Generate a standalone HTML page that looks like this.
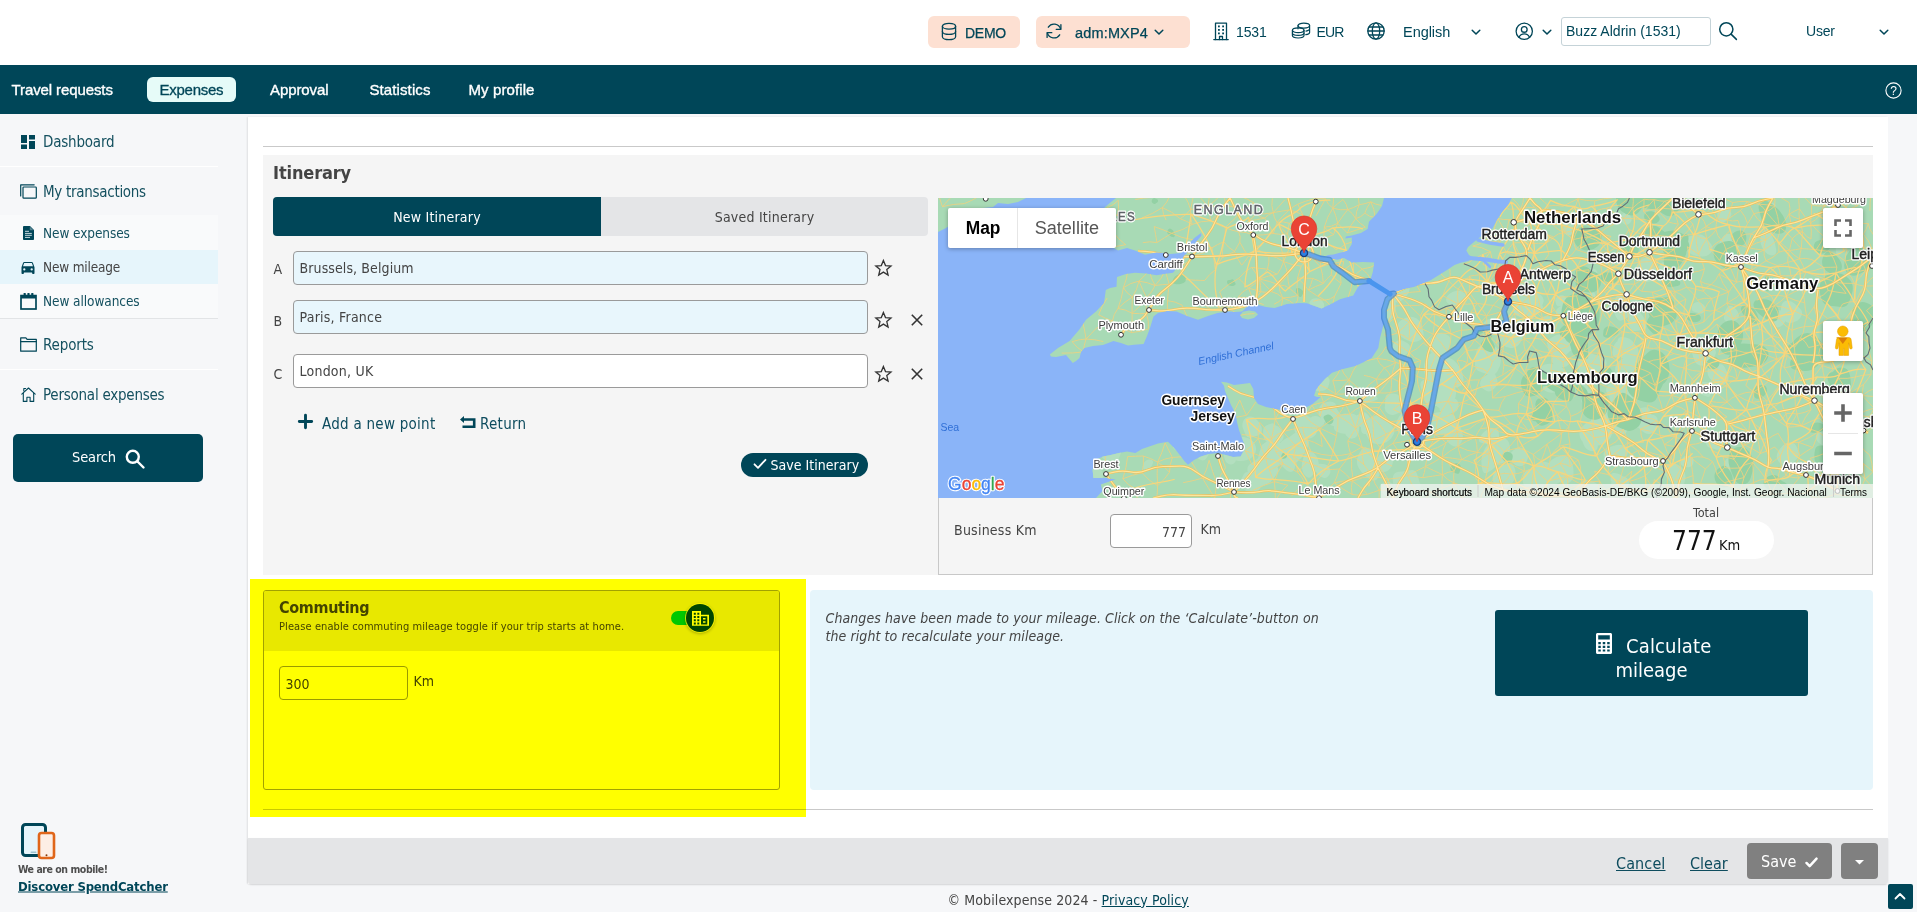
<!DOCTYPE html>
<html lang="en">
<head>
<meta charset="utf-8">
<title>New mileage</title>
<style>
*{box-sizing:border-box;margin:0;padding:0}
html,body{width:1917px;height:912px;overflow:hidden;background:#f6f7f9}
body{position:relative;font-family:"Liberation Sans",Arial,sans-serif;color:#004658;font-size:14px}
.abs{position:absolute}
.os{font-family:"DejaVu Sans Condensed","DejaVu Sans","Liberation Sans",sans-serif;font-stretch:condensed}
.t{position:absolute;white-space:nowrap;line-height:1;transform:translateY(-50%)}
#top{position:absolute;left:0;top:0;width:1917px;height:65px;background:#fff}
#nav{position:absolute;left:0;top:65px;width:1917px;height:49px;background:#004658}
#nav .t{color:#fff;font-size:15px;top:23.6px;-webkit-text-stroke:.35px #fff}
#side{position:absolute;left:0;top:114px;width:248px;height:798px;background:#f6f7f9}
#main{position:absolute;left:248px;top:117px;width:1640px;height:767px;background:#fff;box-shadow:-1px 0 1.5px rgba(0,0,0,.09)}
.badge{position:absolute;top:16px;height:32px;background:#fde0d2;border-radius:6px}
svg{position:absolute;overflow:visible}
.ic{fill:none;stroke:#004658;stroke-width:1.3;stroke-linecap:round;stroke-linejoin:round}
.sep{position:absolute;left:0;width:218px;height:1px;background:#fff}
.sl{font-size:15px;color:#14505f}
.ss{font-size:13.5px;color:#14505f}
.inp{position:absolute;border:1px solid #9a9a9a;border-radius:4px;background:#e8f6fc}
.g{color:#444}
</style>
</head>
<body>
<div id="top">
  <div class="badge" style="left:928px;width:92px"></div>
  <svg style="left:941px;top:22px" width="16" height="20" viewBox="0 0 16 20"><g class="ic"><ellipse cx="8" cy="4.2" rx="6.6" ry="2.9"/><path d="M1.4 4.2v10.6c0 1.6 3 2.9 6.6 2.9s6.600-1.300 6.600-2.900V4.200"/><path d="M1.400 9.500c0 1.600 3 2.900 6.600 2.900s6.600-1.300 6.600-2.900"/></g></svg>
  <span class="t" style="left:965px;top:32.500px;font-size:14px;-webkit-text-stroke:.25px #004658;letter-spacing:-0.25px">DEMO</span>
  <div class="badge" style="left:1036px;width:154px"></div>
  <svg style="left:1045px;top:22px" width="18" height="18" viewBox="0 0 18 18"><g class="ic"><path d="M15.600 7.200A6.800 6.800 0 0 0 3.300 5.200"/><path d="M15.900 2.600v4.700h-4.700"/><path d="M2.400 10.800a6.800 6.800 0 0 0 12.300 2"/><path d="M2.100 15.400v-4.700h4.700"/></g></svg>
  <span class="t" style="left:1075px;top:32.500px;font-size:14.500px;-webkit-text-stroke:.25px #004658;letter-spacing:0.16px">adm:MXP4</span>
  <svg style="left:1154px;top:29px" width="10" height="7" viewBox="0 0 10 7"><path class="ic" style="stroke-width:1.500" d="M1.200 1.200 5 5l3.800-3.800"/></svg>

  <svg style="left:1213px;top:22px" width="16" height="19" viewBox="0 0 16 19"><g class="ic"><path d="M2.500 17.500V1.200h11v16.300"/><path d="M.8 17.600h14.400"/><path d="M6.500 17.500v-3h3v3"/></g><g fill="#004658"><rect x="5" y="3.500" width="1.800" height="1.800"/><rect x="9.200" y="3.500" width="1.800" height="1.800"/><rect x="5" y="7" width="1.800" height="1.800"/><rect x="9.200" y="7" width="1.800" height="1.800"/><rect x="5" y="10.500" width="1.800" height="1.800"/><rect x="9.200" y="10.500" width="1.800" height="1.800"/></g></svg>
  <span class="t" style="left:1236px;top:31.500px;font-size:14px;letter-spacing:-0.11px">1531</span>
  <svg style="left:1291px;top:22px" width="20" height="17" viewBox="0 0 20 17"><g class="ic" style="stroke-width:1.200"><ellipse cx="12.800" cy="3.600" rx="5.800" ry="2.500"/><path d="M7 3.600v3.200M18.600 3.600v6.800c0 1-1.600 1.900-3.800 2.300"/><path d="M18.600 7c0 .9-1.500 1.700-3.600 2.200"/><ellipse cx="7.200" cy="8.300" rx="5.800" ry="2.400"/><path d="M1.400 8.300v5.300c0 1.300 2.600 2.400 5.800 2.400s5.800-1.100 5.800-2.400V8.300"/><path d="M1.400 11c0 1.300 2.600 2.400 5.800 2.400S13 12.300 13 11"/></g></svg>
  <span class="t" style="left:1316.500px;top:31.500px;font-size:14px;letter-spacing:-0.89px">EUR</span>
  <svg style="left:1367px;top:22px" width="18" height="18" viewBox="0 0 18 18"><g class="ic"><circle cx="9" cy="9" r="8.200"/><ellipse cx="9" cy="9" rx="3.700" ry="8.200"/><path d="M1 9h16M2 5h14M2 13h14"/></g></svg>
  <span class="t" style="left:1403px;top:32px;font-size:14.500px;letter-spacing:-0.04px">English</span>
  <svg style="left:1471px;top:28.500px" width="10" height="7" viewBox="0 0 10 7"><path class="ic" style="stroke-width:1.500" d="M1.200 1.200 5 5l3.800-3.800"/></svg>

  <svg style="left:1514.5px;top:22px" width="18.5" height="18.5" viewBox="0 0 20 20"><g class="ic" style="stroke-width:1.400"><circle cx="10" cy="10" r="8.800"/><circle cx="10" cy="8" r="3.100"/><path d="M4.300 16.600c1-2.500 3.100-3.800 5.700-3.800s4.700 1.300 5.700 3.800"/></g></svg>
  <svg style="left:1542px;top:28.500px" width="10" height="7" viewBox="0 0 10 7"><path class="ic" style="stroke-width:1.500" d="M1.200 1.200 5 5l3.800-3.800"/></svg>
  <div class="abs" style="left:1561px;top:17px;width:150px;height:29px;border:1px solid #c5d3d8;border-radius:3px;background:#fff"></div>
  <span class="t" style="left:1566px;top:31px;font-size:14px;letter-spacing:0.02px">Buzz Aldrin (1531)</span>
  <svg style="left:1718px;top:21px" width="20" height="20" viewBox="0 0 20 20"><g class="ic" style="stroke-width:1.500"><circle cx="8.300" cy="8.300" r="6.600"/><path d="M13.100 13.100 18.400 18.400"/></g></svg>
  <span class="t" style="left:1806px;top:31px;font-size:14px;letter-spacing:-0.19px">User</span>
  <svg style="left:1878.500px;top:28.500px" width="10" height="7" viewBox="0 0 10 7"><path class="ic" style="stroke-width:1.500" d="M1.200 1.200 5 5l3.800-3.800"/></svg>
</div>
<div id="nav">
  <span class="t" style="left:11.500px;letter-spacing:-0.10px">Travel requests</span>
  <div class="abs" style="left:147px;top:12px;width:89px;height:25px;border-radius:6px;background:#e6fbf8"></div>
  <span class="t" style="left:159.500px;color:#004658;-webkit-text-stroke:.3px #004658;letter-spacing:-0.25px">Expenses</span>
  <span class="t" style="left:270px;letter-spacing:-0.10px">Approval</span>
  <span class="t" style="left:369.500px;letter-spacing:0.10px">Statistics</span>
  <span class="t" style="left:468.500px;letter-spacing:0.10px">My profile</span>
  <svg style="left:1883.500px;top:15.500px" width="19" height="19" viewBox="0 0 19 19"><circle cx="9.500" cy="9.500" r="7.600" fill="none" stroke="#fff" stroke-width="1.100"/><text x="9.500" y="13.800" text-anchor="middle" font-family="Liberation Sans,sans-serif" font-size="12" fill="#fff">?</text></svg>
</div>
<div id="side">
  <!-- coordinates relative to side top=114 -->
  <svg style="left:21px;top:21px" width="14" height="14" viewBox="0 0 14 14"><g fill="#004658"><rect x="0" y="0" width="6" height="8"/><rect x="8" y="0" width="6" height="4.500"/><rect x="0" y="9.500" width="6" height="4.500"/><rect x="8" y="6" width="6" height="8"/></g></svg>
  <span class="t os sl" style="left:43px;top:27.500px;letter-spacing:-0.20px">Dashboard</span>
  <div class="sep" style="top:52px"></div>
  <svg style="left:19.500px;top:70px" width="17" height="15" viewBox="0 0 17 15"><g class="ic" style="stroke-width:1.200"><path d="M.7 12V.8h13.500"/><rect x="3" y="3" width="13.300" height="11.200" rx=".8"/></g></svg>
  <span class="t os sl" style="left:43px;top:78px;letter-spacing:-0.29px">My transactions</span>
  <div class="abs" style="left:0;top:101px;width:218px;height:103px;background:#f9fafb"></div>
  <svg style="left:23px;top:112px" width="11" height="14" viewBox="0 0 11 14"><path fill="#004658" d="M0 .8C0 .4.400 0 .800 0H7l4 4v9.200c0 .4-.4.800-.800.800H.800C.400 14 0 13.600 0 13.200z"/><path fill="#f9fafb" d="M6.800 .6v3.600h3.600z" opacity=".35"/><g stroke="#dfeaee" stroke-width=".9"><path d="M2 5.300h4M2 7.400h6.800M2 9.300h6.800M2 11.400h5"/></g></svg>
  <span class="t os ss" style="left:43px;top:119.500px;letter-spacing:-0.08px">New expenses</span>
  <div class="abs" style="left:0;top:136px;width:218px;height:34px;background:#e6f5fb"></div>
  <svg style="left:21px;top:147.500px" width="14" height="12" viewBox="0 0 14 12"><path fill="#004658" d="M11.900.800C11.700.300 11.200 0 10.700 0H3.300C2.800 0 2.300.300 2.100.800L.500 5.200v6c0 .4.300.800.800.800h.800c.400 0 .800-.400.800-.800v-.800h8.200v.8c0 .4.400.8.800.8h.8c.500 0 .8-.4.800-.8v-6zM3.300 8.600a1.150 1.150 0 1 1 0-2.300 1.150 1.150 0 0 1 0 2.300zm7.400 0a1.150 1.150 0 1 1 0-2.300 1.150 1.150 0 0 1 0 2.300zM2 4.300l1.200-3.200h7.600L12 4.300z"/></svg>
  <span class="t os ss g" style="left:43px;top:153.500px;letter-spacing:-0.17px">New mileage</span>
  <svg style="left:19.500px;top:179px" width="17" height="17" viewBox="0 0 17 17"><g fill="none" stroke="#004658"><rect x="1" y="2.600" width="15" height="13.400" stroke-width="1.700"/><path d="M1 4.200h15" stroke-width="2.600"/></g><g fill="#004658"><rect x="3.600" y="0" width="2.200" height="3.200" rx=".6"/><rect x="7.400" y="0" width="2.200" height="3.200" rx=".6"/><rect x="11.200" y="0" width="2.200" height="3.200" rx=".6"/></g></svg>
  <span class="t os ss" style="left:43px;top:187.500px;letter-spacing:-0.07px">New allowances</span>
  <div class="sep" style="top:204px;background:#e2e4e6"></div>
  <svg style="left:19.500px;top:223px" width="17" height="15" viewBox="0 0 17 15"><g class="ic" style="stroke-width:1.200"><path d="M.7 14.200V.8h5.200l1.200 1.500h9.200v11.900z"/><path d="M.7 4.600h15.600"/></g></svg>
  <span class="t os sl" style="left:43px;top:231px;letter-spacing:-0.14px">Reports</span>
  <div class="sep" style="top:255px"></div>
  <svg style="left:21px;top:273px" width="15" height="15" viewBox="0 0 15 15"><g class="ic" style="stroke-width:1.100"><path d="M.8 7.200 7.500 1l6.700 6.200"/><path d="M2.300 6.200v8.200h3.600v-4.200h3.200v4.200h3.600V6.200"/><path d="M2.800 4V1.500h1.800"/></g></svg>
  <span class="t os sl" style="left:43px;top:281px;letter-spacing:-0.24px">Personal expenses</span>
  <div class="abs" style="left:13px;top:320px;width:190px;height:48px;border-radius:5px;background:#004658"></div>
  <span class="t os" style="left:72px;top:343px;color:#fff;font-size:14.500px;letter-spacing:-0.13px">Search</span>
  <svg style="left:124px;top:333.5px" width="22" height="22" viewBox="0 0 22 22"><g fill="none" stroke="#fff" stroke-width="2.400" stroke-linecap="round"><circle cx="8.800" cy="8.800" r="6"/><path d="M13.500 13.500 19.500 19.500"/></g></svg>

  <svg style="left:21px;top:709px" width="35" height="36" viewBox="0 0 35 36"><rect x="1.500" y="1.500" width="23" height="31" rx="3" fill="#e6f5fb" stroke="#004658" stroke-width="3"/><rect x="9.500" y="28.600" width="6" height="1.400" rx=".7" fill="#9fc3cf"/><rect x="18" y="10" width="15" height="25" rx="2.500" fill="#fdeee5" stroke="#e0661a" stroke-width="2.600"/><circle cx="25.500" cy="32.200" r="1" fill="#8a3a0a"/></svg>
  <span class="t os" style="left:18px;top:754.500px;font-size:10.500px;font-weight:bold;color:#4d4d4d;letter-spacing:-0.45px">We are on mobile!</span>
  <span class="t os" style="left:18px;top:771.700px;font-size:13px;font-weight:bold;text-decoration:underline;color:#004658;letter-spacing:-0.18px">Discover SpendCatcher</span>
</div>
<div id="main"></div>
<div class="abs" style="left:248px;top:838px;width:1640px;height:46px;background:#e4e5e7;border-radius:0 0 4px 4px;box-shadow:0 1px 2px rgba(0,0,0,.12)"></div>
<div class="abs" style="left:263px;top:146px;width:1610px;height:1px;background:#c9c9c9"></div>
<div class="abs" style="left:263px;top:155px;width:1610px;height:420px;background:#f5f5f5"></div>
<span class="t os g" style="left:273px;top:172.500px;font-size:18px;font-weight:bold;color:#444;letter-spacing:-0.14px">Itinerary</span>
<div class="abs" style="left:273px;top:197px;width:655px;height:39px;border-radius:4px;background:#e4e5e7"></div>
<div class="abs" style="left:273px;top:197px;width:328px;height:39px;border-radius:4px 0 0 4px;background:#004658"></div>
<span class="t os" style="left:437px;top:217px;font-size:14px;color:#fff;transform:translate(-50%,-50%);letter-spacing:0.22px">New Itinerary</span>
<span class="t os g" style="left:764.500px;top:217px;font-size:14px;transform:translate(-50%,-50%);letter-spacing:0.22px">Saved Itinerary</span>

<span class="t os g" style="left:273.500px;top:268.500px;font-size:14px">A</span>
<div class="inp" style="left:293px;top:251px;width:575px;height:34px"></div>
<span class="t os g" style="left:299.500px;top:268px;font-size:14px;letter-spacing:0.11px">Brussels, Belgium</span>
<span class="t os g" style="left:273.500px;top:320.500px;font-size:14px">B</span>
<div class="inp" style="left:293px;top:300px;width:575px;height:34px"></div>
<span class="t os g" style="left:299.500px;top:317px;font-size:14px;letter-spacing:0.23px">Paris, France</span>
<span class="t os g" style="left:273.500px;top:374px;font-size:14px">C</span>
<div class="inp" style="left:293px;top:354px;width:575px;height:34px;background:#fff"></div>
<span class="t os g" style="left:299.500px;top:371px;font-size:14px;letter-spacing:0.23px">London, UK</span>

<svg style="left:874px;top:259px" width="19" height="18" viewBox="0 0 19 18"><path id="star" fill="none" stroke="#333" stroke-width="1.300" stroke-linejoin="miter" d="M9.400 1.500l2.100 5.100 5.500.4-4.200 3.600 1.300 5.400-4.700-2.900-4.700 2.900 1.300-5.400L1.800 7l5.500-.4z"/></svg>
<svg style="left:874px;top:310.500px" width="19" height="18" viewBox="0 0 19 18"><use href="#star"/></svg>
<svg style="left:874px;top:364.500px" width="19" height="18" viewBox="0 0 19 18"><use href="#star"/></svg>
<svg style="left:910.500px;top:314px" width="12" height="12" viewBox="0 0 12 12"><path id="xx" d="M.8.800l10.400 10.400M11.200.800.800 11.200" stroke="#333" stroke-width="1.600" fill="none"/></svg>
<svg style="left:910.500px;top:368px" width="12" height="12" viewBox="0 0 12 12"><use href="#xx"/></svg>

<svg style="left:298px;top:414px" width="15" height="15" viewBox="0 0 15 15"><path d="M7.500 1.300v12.400M1.300 7.500h12.400" stroke="#004658" stroke-width="2.900" stroke-linecap="round" fill="none"/></svg>
<span class="t os" style="left:322px;top:423.500px;font-size:15px;color:#0e4c5e;letter-spacing:0.26px">Add a new point</span>
<svg style="left:459.500px;top:415.500px" width="16" height="13" viewBox="0 0 16 13"><path fill="#004658" d="M4 0v2.200h11.500v9.800H2.500v-2.400h10.400V4.700H4v2.200L0 3.400z"/></svg>
<span class="t os" style="left:480px;top:423.500px;font-size:15px;color:#0e4c5e;letter-spacing:0.29px">Return</span>
<div class="abs" style="left:741px;top:453px;width:127px;height:24px;border-radius:12px;background:#004658"></div>
<svg style="left:753px;top:458px" width="14" height="12" viewBox="0 0 14 12"><path d="M1.500 6.300 5 9.800 12.500 1.800" stroke="#fff" stroke-width="1.800" fill="none" stroke-linecap="round" stroke-linejoin="round"/></svg>
<span class="t os" style="left:770.500px;top:465px;font-size:14px;color:#fff;letter-spacing:0.03px">Save Itinerary</span>

<div class="abs" style="left:938px;top:198px;width:935px;height:300px;overflow:hidden;background:#8ab4f8">
<svg style="left:0;top:0" width="935" height="300" viewBox="0 0 935 300" font-family="Liberation Sans,Arial,sans-serif">
<defs><clipPath id="land"><path d="M178.0 0.0 167.0 9.0 160.0 20.0 158.0 30.0 165.0 40.0 176.0 50.0 180.0 52.5 189.0 50.0 197.0 52.6 207.0 56.7 218.7 54.3 226.0 55.0 232.0 56.0 238.0 55.5 243.0 55.0 250.0 46.0 257.0 39.5 263.0 35.0 263.5 37.5 258.5 43.5 252.5 50.5 247.0 57.0 243.5 62.0 240.0 68.0 236.5 73.0 235.0 74.8 226.0 76.0 218.7 77.3 208.0 75.5 197.0 74.8 188.0 76.0 179.0 79.0 178.5 88.8 172.0 90.0 167.8 92.0 166.0 105.0 158.0 113.5 148.0 121.7 141.4 131.6 131.6 143.0 120.0 150.0 111.8 156.6 113.0 158.5 118.0 159.0 128.0 157.0 134.8 165.0 138.0 163.0 141.5 160.0 143.0 154.0 146.4 150.0 155.0 148.0 165.0 147.0 175.5 143.0 183.0 145.0 190.0 147.5 196.0 146.7 205.6 146.0 209.0 138.0 212.0 130.0 215.5 118.4 220.0 115.0 229.0 113.0 238.5 113.5 249.0 118.0 260.0 121.7 270.0 118.0 279.6 115.0 289.5 113.5 297.0 114.0 304.0 113.5 309.0 109.0 312.0 107.0 320.0 107.0 328.0 109.0 336.7 110.0 349.0 106.0 361.3 105.0 369.0 105.3 383.6 110.5 393.0 106.0 402.0 101.3 415.2 97.4 420.4 88.2 432.3 82.2 434.9 73.7 436.2 64.5 425.0 64.0 413.8 64.5 406.0 59.9 399.4 61.8 392.0 60.5 386.0 59.0 390.0 57.0 395.4 56.6 403.0 54.5 409.9 52.6 413.8 46.0 413.8 39.5 407.3 40.5 408.0 38.5 413.8 37.5 423.0 34.9 429.6 31.0 431.0 23.7 438.8 15.8 444.0 7.9 446.0 0.0Z"/><path d="M0.0 0.0 88.0 0.0 80.0 4.0 70.0 6.0 60.0 5.0 55.0 9.0 45.0 10.0 30.0 14.0 20.0 22.0 8.0 30.0 0.0 34.0Z"/><path d="M158.0 300.0 164.5 293.0 162.8 286.5 170.0 284.0 177.6 281.6 168.0 280.0 155.4 280.0 154.6 271.7 158.0 261.8 165.0 258.5 172.7 257.0 181.0 255.0 189.0 253.6 197.4 255.0 204.0 251.0 210.5 248.7 220.0 245.5 230.0 243.8 235.0 248.7 241.0 256.0 246.7 263.5 250.0 266.8 256.0 262.0 263.0 258.5 271.0 256.0 279.6 255.0 287.8 257.0 295.0 259.0 302.6 258.5 305.0 254.0 307.5 248.7 304.0 240.0 301.0 232.0 299.0 224.0 297.7 215.8 293.0 207.0 289.5 199.0 287.0 193.0 286.0 187.8 283.0 183.7 289.0 184.5 296.0 187.0 304.0 186.0 312.0 185.0 315.3 191.0 316.0 200.0 320.0 206.0 328.0 209.0 336.7 210.9 349.0 212.5 361.3 212.5 368.0 209.5 374.5 206.0 382.7 199.0 379.0 199.0 376.0 197.7 378.0 192.0 381.0 187.8 387.0 181.0 394.0 174.7 405.0 171.0 417.3 168.0 426.0 164.0 433.7 160.0 440.3 150.0 442.0 140.0 446.0 125.0 445.0 118.0 444.4 111.8 446.7 102.6 448.5 98.7 452.0 95.0 458.4 93.8 467.0 91.0 476.5 88.8 485.0 85.5 493.0 82.0 501.0 77.0 509.0 72.0 516.5 67.0 522.0 65.0 530.0 63.0 536.0 60.0 531.0 57.0 528.3 52.6 530.0 49.0 536.0 44.0 541.5 39.5 545.4 36.8 554.6 30.3 558.6 22.4 563.8 14.5 570.4 6.6 573.7 0.0 935.0 0.0 935.0 300.0Z"/><path d="M302.0 117.0 305.0 113.8 311.0 112.5 317.0 113.5 320.0 116.5 316.0 120.0 310.0 121.5 304.0 120.0Z"/></clipPath></defs>
<rect width="935" height="300" fill="#8ab4f8"/>
<g fill="#a8dab5"><path d="M178.0 0.0 167.0 9.0 160.0 20.0 158.0 30.0 165.0 40.0 176.0 50.0 180.0 52.5 189.0 50.0 197.0 52.6 207.0 56.7 218.7 54.3 226.0 55.0 232.0 56.0 238.0 55.5 243.0 55.0 250.0 46.0 257.0 39.5 263.0 35.0 263.5 37.5 258.5 43.5 252.5 50.5 247.0 57.0 243.5 62.0 240.0 68.0 236.5 73.0 235.0 74.8 226.0 76.0 218.7 77.3 208.0 75.5 197.0 74.8 188.0 76.0 179.0 79.0 178.5 88.8 172.0 90.0 167.8 92.0 166.0 105.0 158.0 113.5 148.0 121.7 141.4 131.6 131.6 143.0 120.0 150.0 111.8 156.6 113.0 158.5 118.0 159.0 128.0 157.0 134.8 165.0 138.0 163.0 141.5 160.0 143.0 154.0 146.4 150.0 155.0 148.0 165.0 147.0 175.5 143.0 183.0 145.0 190.0 147.5 196.0 146.7 205.6 146.0 209.0 138.0 212.0 130.0 215.5 118.4 220.0 115.0 229.0 113.0 238.5 113.5 249.0 118.0 260.0 121.7 270.0 118.0 279.6 115.0 289.5 113.5 297.0 114.0 304.0 113.5 309.0 109.0 312.0 107.0 320.0 107.0 328.0 109.0 336.7 110.0 349.0 106.0 361.3 105.0 369.0 105.3 383.6 110.5 393.0 106.0 402.0 101.3 415.2 97.4 420.4 88.2 432.3 82.2 434.9 73.7 436.2 64.5 425.0 64.0 413.8 64.5 406.0 59.9 399.4 61.8 392.0 60.5 386.0 59.0 390.0 57.0 395.4 56.6 403.0 54.5 409.9 52.6 413.8 46.0 413.8 39.5 407.3 40.5 408.0 38.5 413.8 37.5 423.0 34.9 429.6 31.0 431.0 23.7 438.8 15.8 444.0 7.9 446.0 0.0Z"/><path d="M0.0 0.0 88.0 0.0 80.0 4.0 70.0 6.0 60.0 5.0 55.0 9.0 45.0 10.0 30.0 14.0 20.0 22.0 8.0 30.0 0.0 34.0Z"/><path d="M158.0 300.0 164.5 293.0 162.8 286.5 170.0 284.0 177.6 281.6 168.0 280.0 155.4 280.0 154.6 271.7 158.0 261.8 165.0 258.5 172.7 257.0 181.0 255.0 189.0 253.6 197.4 255.0 204.0 251.0 210.5 248.7 220.0 245.5 230.0 243.8 235.0 248.7 241.0 256.0 246.7 263.5 250.0 266.8 256.0 262.0 263.0 258.5 271.0 256.0 279.6 255.0 287.8 257.0 295.0 259.0 302.6 258.5 305.0 254.0 307.5 248.7 304.0 240.0 301.0 232.0 299.0 224.0 297.7 215.8 293.0 207.0 289.5 199.0 287.0 193.0 286.0 187.8 283.0 183.7 289.0 184.5 296.0 187.0 304.0 186.0 312.0 185.0 315.3 191.0 316.0 200.0 320.0 206.0 328.0 209.0 336.7 210.9 349.0 212.5 361.3 212.5 368.0 209.5 374.5 206.0 382.7 199.0 379.0 199.0 376.0 197.7 378.0 192.0 381.0 187.8 387.0 181.0 394.0 174.7 405.0 171.0 417.3 168.0 426.0 164.0 433.7 160.0 440.3 150.0 442.0 140.0 446.0 125.0 445.0 118.0 444.4 111.8 446.7 102.6 448.5 98.7 452.0 95.0 458.4 93.8 467.0 91.0 476.5 88.8 485.0 85.5 493.0 82.0 501.0 77.0 509.0 72.0 516.5 67.0 522.0 65.0 530.0 63.0 536.0 60.0 531.0 57.0 528.3 52.6 530.0 49.0 536.0 44.0 541.5 39.5 545.4 36.8 554.6 30.3 558.6 22.4 563.8 14.5 570.4 6.6 573.7 0.0 935.0 0.0 935.0 300.0Z"/><path d="M302.0 117.0 305.0 113.8 311.0 112.5 317.0 113.5 320.0 116.5 316.0 120.0 310.0 121.5 304.0 120.0Z"/></g>
<g clip-path="url(#land)">
<path fill="#b3dfbf" d="M492.4 207.8Q487.2 206.1 485.8 200.6Q484.4 195.0 482.8 189.2Q481.2 183.3 486.1 181.7Q491.0 180.1 495.2 180.5Q499.4 180.9 504.1 183.2Q508.7 185.5 509.4 191.0Q510.2 196.5 507.3 199.9Q504.5 203.2 501.1 206.3Q497.7 209.4 492.4 207.8ZM343.5 247.5Q345.1 252.8 344.7 257.4Q344.2 262.1 341.7 266.7Q339.1 271.3 334.2 269.0Q329.4 266.6 324.2 265.4Q319.0 264.3 320.3 259.0Q321.5 253.7 322.7 249.9Q323.9 246.0 327.6 244.3Q331.4 242.5 336.6 242.3Q341.8 242.2 343.5 247.5ZM486.8 176.0Q485.0 170.1 486.9 164.1Q488.8 158.0 493.5 155.1Q498.1 152.2 502.6 154.1Q507.1 156.0 509.8 160.0Q512.5 164.1 512.0 169.1Q511.4 174.2 509.8 180.2Q508.3 186.1 503.0 186.7Q497.7 187.4 493.1 184.6Q488.6 181.9 486.8 176.0ZM367.9 167.3Q371.3 165.6 373.2 170.9Q375.1 176.2 375.7 180.8Q376.2 185.4 375.0 189.5Q373.9 193.5 371.1 196.2Q368.3 199.0 364.6 197.0Q360.9 195.0 360.3 189.2Q359.7 183.5 360.1 179.2Q360.5 174.8 362.5 171.9Q364.5 169.0 367.9 167.3ZM431.6 194.0Q434.7 193.6 435.9 195.5Q437.1 197.3 439.0 199.2Q440.8 201.0 437.8 202.2Q434.7 203.4 432.3 204.3Q429.9 205.2 426.5 205.1Q423.1 205.0 421.9 202.8Q420.7 200.7 421.7 198.5Q422.7 196.3 425.6 195.3Q428.4 194.3 431.6 194.0ZM382.2 229.1Q380.0 230.0 377.0 230.1Q374.0 230.1 372.1 228.1Q370.2 226.1 370.5 223.8Q370.8 221.6 372.4 219.8Q374.0 218.0 376.9 217.9Q379.7 217.8 381.7 219.2Q383.6 220.7 385.3 222.4Q387.0 224.2 385.8 226.2Q384.5 228.1 382.2 229.1ZM594.8 270.6Q598.6 270.6 602.6 271.7Q606.6 272.8 608.3 277.0Q610.1 281.2 608.1 285.4Q606.1 289.5 602.1 291.5Q598.1 293.4 593.6 292.8Q589.1 292.2 586.7 288.4Q584.3 284.5 584.6 280.2Q584.8 275.9 587.9 273.2Q591.0 270.5 594.8 270.6ZM424.0 214.7Q426.5 213.5 428.6 215.4Q430.7 217.3 431.9 219.6Q433.1 221.9 432.3 224.5Q431.5 227.0 429.2 228.7Q426.9 230.4 424.2 229.5Q421.4 228.7 419.2 226.8Q417.0 225.0 416.5 221.8Q416.0 218.6 418.8 217.3Q421.6 215.9 424.0 214.7ZM551.0 257.4Q550.3 252.9 552.6 249.5Q554.9 246.1 557.7 242.6Q560.5 239.2 564.9 239.8Q569.4 240.5 571.1 245.0Q572.8 249.5 571.5 253.4Q570.3 257.4 568.6 261.3Q566.9 265.1 563.0 265.6Q559.0 266.1 555.4 264.1Q551.8 262.0 551.0 257.4ZM517.4 219.8Q518.8 223.4 518.5 227.9Q518.2 232.5 512.8 234.3Q507.5 236.2 501.7 236.7Q495.9 237.3 494.1 232.9Q492.4 228.6 489.4 224.3Q486.5 219.9 492.0 217.1Q497.4 214.2 502.3 214.1Q507.1 213.9 511.5 215.1Q515.9 216.2 517.4 219.8ZM450.8 90.2Q451.5 86.8 454.3 84.9Q457.1 83.0 461.0 82.1Q465.0 81.2 468.5 84.1Q472.1 87.0 471.5 91.5Q471.0 95.9 468.3 98.5Q465.7 101.1 462.3 103.5Q459.0 105.8 455.7 103.2Q452.4 100.5 451.2 97.1Q450.1 93.6 450.8 90.2ZM359.4 241.7Q362.0 245.6 364.8 250.6Q367.5 255.6 363.5 259.8Q359.5 264.0 355.4 266.9Q351.3 269.9 346.5 268.7Q341.6 267.4 339.1 262.2Q336.7 257.0 338.6 251.4Q340.5 245.9 344.2 242.9Q347.9 239.8 352.3 238.8Q356.7 237.7 359.4 241.7ZM357.1 264.9Q357.4 268.3 356.5 271.1Q355.6 273.9 353.1 273.9Q350.6 274.0 348.4 272.2Q346.3 270.3 343.8 267.7Q341.2 265.1 342.3 262.1Q343.4 259.0 345.2 257.5Q347.1 255.9 349.6 256.4Q352.2 256.8 354.5 259.1Q356.9 261.5 357.1 264.9ZM469.9 212.3Q473.8 211.9 479.1 213.0Q484.5 214.0 486.6 219.9Q488.6 225.9 486.1 231.2Q483.7 236.5 478.4 236.6Q473.2 236.8 467.9 237.5Q462.6 238.2 459.7 232.9Q456.7 227.7 458.8 223.1Q460.8 218.5 463.4 215.6Q466.0 212.8 469.9 212.3ZM686.8 235.8Q684.5 236.7 681.5 235.0Q678.5 233.3 676.7 231.1Q674.8 228.8 672.9 225.8Q670.9 222.8 672.5 221.0Q674.2 219.2 677.2 220.3Q680.3 221.4 683.4 222.3Q686.5 223.2 687.9 226.3Q689.2 229.4 689.2 232.1Q689.1 234.8 686.8 235.8ZM573.6 285.8Q570.0 289.7 565.5 291.6Q561.0 293.4 558.6 290.3Q556.2 287.2 554.9 283.0Q553.5 278.7 557.1 273.9Q560.6 269.0 564.7 267.2Q568.9 265.4 572.2 266.0Q575.5 266.5 576.6 269.8Q577.8 273.0 577.5 277.4Q577.2 281.8 573.6 285.8ZM321.7 179.8Q324.1 178.1 325.8 180.7Q327.4 183.2 329.6 185.0Q331.8 186.9 330.5 189.8Q329.3 192.7 327.3 194.6Q325.3 196.5 322.7 196.5Q320.0 196.6 317.9 194.6Q315.7 192.6 316.2 189.5Q316.7 186.3 318.0 183.9Q319.4 181.5 321.7 179.8ZM692.2 95.3Q693.7 98.6 693.5 103.7Q693.3 108.7 690.1 112.1Q686.9 115.4 683.6 118.8Q680.4 122.2 678.4 119.2Q676.5 116.1 676.0 112.1Q675.6 108.1 676.7 102.9Q677.7 97.8 681.0 96.8Q684.4 95.8 687.5 93.9Q690.6 92.0 692.2 95.3ZM538.3 153.8Q539.6 147.9 544.6 147.4Q549.5 146.8 553.9 147.5Q558.2 148.1 560.6 152.6Q563.1 157.1 562.9 162.8Q562.7 168.4 559.4 173.3Q556.2 178.3 551.3 176.9Q546.4 175.5 541.6 173.6Q536.8 171.8 536.9 165.7Q537.0 159.6 538.3 153.8ZM496.9 158.4Q493.5 155.4 491.9 152.0Q490.2 148.7 491.3 145.0Q492.3 141.3 495.2 138.2Q498.2 135.1 502.6 135.1Q507.0 135.1 510.5 137.8Q514.1 140.6 512.5 144.8Q510.9 149.0 510.1 153.3Q509.3 157.5 504.8 159.4Q500.3 161.3 496.9 158.4ZM509.3 104.8Q507.6 102.8 508.3 100.2Q509.0 97.7 511.9 95.5Q514.8 93.4 518.8 92.8Q522.8 92.2 525.2 94.0Q527.6 95.8 528.1 98.2Q528.6 100.6 526.6 103.0Q524.7 105.4 521.1 106.7Q517.6 108.1 514.3 107.4Q511.0 106.8 509.3 104.8ZM560.4 138.8Q560.1 134.0 562.1 130.4Q564.1 126.9 567.3 122.7Q570.5 118.5 576.1 119.4Q581.7 120.2 584.4 125.2Q587.1 130.1 585.9 135.0Q584.8 139.9 582.3 144.6Q579.8 149.3 574.3 149.9Q568.7 150.5 564.7 147.1Q560.6 143.6 560.4 138.8ZM395.2 148.1Q396.5 143.8 400.2 144.1Q403.9 144.5 407.1 144.2Q410.4 144.0 410.7 147.6Q411.0 151.2 410.4 154.3Q409.9 157.5 408.0 161.3Q406.1 165.1 402.5 164.9Q398.9 164.6 395.7 162.8Q392.6 161.0 393.2 156.7Q393.9 152.3 395.2 148.1ZM314.8 179.2Q312.2 182.8 307.5 182.5Q302.7 182.1 297.6 181.1Q292.5 180.1 292.4 175.5Q292.3 170.8 294.3 167.2Q296.2 163.6 300.3 162.2Q304.3 160.8 308.3 161.6Q312.2 162.4 316.9 164.6Q321.6 166.9 319.5 171.2Q317.4 175.6 314.8 179.2ZM676.5 115.4Q675.5 112.5 676.7 107.7Q677.9 102.9 682.4 100.4Q686.9 97.9 690.1 97.7Q693.3 97.5 697.0 98.0Q700.7 98.6 699.5 103.7Q698.4 108.8 694.7 114.0Q691.1 119.3 686.2 121.6Q681.3 123.9 679.3 121.1Q677.4 118.3 676.5 115.4ZM543.9 245.0Q539.9 244.1 541.1 241.2Q542.2 238.2 543.9 236.2Q545.5 234.1 548.6 232.0Q551.6 229.8 556.0 230.5Q560.4 231.1 560.8 234.2Q561.1 237.3 561.0 239.8Q560.9 242.4 558.3 245.0Q555.8 247.6 551.8 246.7Q547.8 245.9 543.9 245.0ZM637.3 190.5Q637.9 187.7 640.2 186.9Q642.4 186.0 644.7 185.1Q647.0 184.1 648.5 186.5Q650.0 188.8 650.8 191.3Q651.6 193.9 650.3 196.2Q649.1 198.5 646.7 199.0Q644.4 199.5 642.3 198.5Q640.2 197.5 638.5 195.4Q636.7 193.3 637.3 190.5ZM676.6 247.4Q681.1 246.3 685.5 247.5Q690.0 248.7 690.1 251.5Q690.2 254.4 689.2 257.1Q688.2 259.7 684.1 261.9Q680.1 264.0 675.0 263.4Q669.8 262.8 667.3 260.4Q664.8 258.0 665.8 255.3Q666.8 252.7 669.4 250.5Q672.0 248.4 676.6 247.4ZM668.5 164.4Q668.7 170.1 666.5 173.7Q664.2 177.4 660.9 180.1Q657.7 182.8 652.9 182.1Q648.1 181.4 644.4 177.5Q640.7 173.5 639.9 167.7Q639.1 161.9 642.7 157.4Q646.3 152.8 651.8 155.0Q657.2 157.2 662.8 158.0Q668.3 158.7 668.5 164.4ZM613.8 261.8Q617.8 258.5 623.0 257.4Q628.1 256.3 631.4 260.5Q634.7 264.8 635.2 269.0Q635.7 273.2 635.4 277.7Q635.0 282.2 630.9 285.0Q626.8 287.8 622.6 284.8Q618.5 281.9 614.4 279.0Q610.3 276.0 610.0 270.5Q609.7 265.1 613.8 261.8ZM380.4 212.1Q381.0 207.8 384.1 205.7Q387.1 203.5 391.6 205.4Q396.2 207.4 398.8 211.0Q401.5 214.7 404.5 219.0Q407.6 223.2 405.7 226.6Q403.8 230.0 399.4 229.0Q395.1 228.0 391.0 226.5Q386.9 225.0 383.4 220.7Q379.9 216.4 380.4 212.1ZM644.9 191.9Q648.8 191.5 652.1 190.9Q655.4 190.3 658.5 193.3Q661.6 196.2 663.5 199.5Q665.4 202.7 664.0 205.1Q662.5 207.4 659.6 208.3Q656.6 209.2 653.2 207.1Q649.9 205.0 647.9 202.4Q645.9 199.8 643.5 196.1Q641.0 192.3 644.9 191.9ZM457.3 113.3Q456.5 117.6 453.9 121.1Q451.4 124.7 448.7 123.6Q446.0 122.6 444.3 120.5Q442.6 118.5 440.6 114.7Q438.6 110.9 441.3 106.0Q443.9 101.1 447.5 100.0Q451.2 98.8 454.1 99.8Q457.1 100.8 457.6 104.9Q458.1 109.1 457.3 113.3ZM617.4 194.3Q611.9 195.6 607.4 193.0Q603.0 190.5 599.9 186.4Q596.9 182.3 597.8 177.0Q598.6 171.8 602.6 168.7Q606.6 165.6 611.4 165.7Q616.2 165.8 621.6 167.9Q627.0 170.1 629.4 176.5Q631.7 183.0 627.3 188.0Q622.9 193.0 617.4 194.3ZM673.0 276.7Q673.4 274.4 676.3 275.0Q679.2 275.6 681.6 276.3Q684.1 277.1 685.4 279.2Q686.8 281.3 686.7 283.7Q686.5 286.2 683.9 287.0Q681.3 287.8 678.7 287.0Q676.1 286.2 674.3 284.6Q672.4 283.0 672.5 281.1Q672.7 279.1 673.0 276.7ZM690.5 306.0Q689.5 308.8 686.5 307.9Q683.6 307.0 681.4 304.0Q679.2 301.0 679.9 298.2Q680.6 295.3 680.7 292.2Q680.8 289.2 683.5 289.0Q686.1 288.8 688.6 290.7Q691.1 292.7 693.1 295.9Q695.0 299.1 693.2 301.2Q691.4 303.3 690.5 306.0ZM369.1 240.4Q372.5 243.8 369.6 249.2Q366.7 254.6 363.8 258.7Q360.9 262.8 356.9 263.0Q352.9 263.1 350.5 259.8Q348.0 256.5 346.7 251.7Q345.4 246.9 348.5 242.5Q351.6 238.2 355.3 235.9Q359.0 233.6 362.4 235.3Q365.8 236.9 369.1 240.4ZM560.3 89.0Q565.2 86.8 570.0 84.4Q574.9 82.0 579.7 83.2Q584.6 84.4 586.4 87.5Q588.2 90.5 584.2 93.3Q580.1 96.2 576.5 98.5Q572.9 100.8 568.7 100.2Q564.6 99.6 559.5 99.0Q554.4 98.3 554.9 94.8Q555.5 91.2 560.3 89.0ZM558.0 188.6Q556.0 191.3 553.5 192.7Q550.9 194.1 548.6 193.0Q546.3 191.8 543.8 189.8Q541.3 187.8 542.3 184.1Q543.4 180.3 546.2 178.6Q549.1 177.0 552.3 175.1Q555.6 173.2 557.2 176.5Q558.7 179.7 559.4 182.8Q560.0 186.0 558.0 188.6ZM352.9 144.8Q353.7 139.6 355.6 134.3Q357.6 129.0 361.3 131.6Q364.9 134.3 369.0 135.6Q373.1 136.9 371.9 142.9Q370.7 149.0 370.6 155.2Q370.6 161.4 366.7 162.9Q362.7 164.4 359.7 161.1Q356.6 157.9 354.3 153.9Q352.0 149.9 352.9 144.8ZM418.1 135.2Q421.6 134.6 421.8 138.7Q421.9 142.7 421.8 145.9Q421.7 149.0 419.9 152.4Q418.1 155.9 415.0 154.0Q411.9 152.0 408.8 150.9Q405.6 149.8 406.0 146.1Q406.3 142.4 406.8 138.3Q407.4 134.2 411.0 135.0Q414.6 135.9 418.1 135.2ZM625.3 169.1Q622.1 168.9 619.4 168.1Q616.6 167.4 614.4 164.9Q612.2 162.4 614.3 159.8Q616.4 157.2 618.4 155.1Q620.4 153.0 623.2 154.1Q626.0 155.1 627.9 156.9Q629.8 158.6 631.1 161.4Q632.5 164.2 630.5 166.7Q628.4 169.3 625.3 169.1ZM375.8 100.6Q378.0 100.2 380.4 100.5Q382.9 100.9 384.6 103.3Q386.3 105.6 386.3 108.4Q386.3 111.3 384.2 112.7Q382.1 114.0 379.6 113.3Q377.2 112.6 375.6 111.0Q374.0 109.4 372.3 107.1Q370.6 104.8 372.1 102.9Q373.6 100.9 375.8 100.6ZM585.0 86.8Q590.1 85.2 593.8 89.0Q597.5 92.8 602.6 96.7Q607.6 100.7 604.7 106.2Q601.7 111.6 597.6 116.1Q593.5 120.6 588.1 117.7Q582.6 114.9 579.4 111.0Q576.2 107.1 573.5 101.5Q570.8 95.9 575.4 92.2Q580.0 88.5 585.0 86.8ZM371.4 179.8Q367.4 181.4 363.9 179.4Q360.5 177.3 356.9 174.8Q353.3 172.2 353.1 167.0Q352.8 161.9 355.7 157.9Q358.6 153.9 363.0 154.9Q367.3 155.9 371.3 157.5Q375.3 159.1 375.9 163.9Q376.5 168.7 375.9 173.4Q375.4 178.2 371.4 179.8ZM321.6 258.9Q325.6 255.5 329.2 259.4Q332.7 263.2 337.7 266.9Q342.6 270.6 339.0 276.1Q335.3 281.6 331.7 284.6Q328.0 287.6 323.7 287.1Q319.4 286.5 315.9 283.5Q312.5 280.4 310.1 274.6Q307.8 268.9 312.7 265.6Q317.6 262.3 321.6 258.9ZM338.4 245.4Q335.5 245.5 333.0 243.7Q330.6 241.9 331.2 238.8Q331.9 235.6 332.2 232.2Q332.5 228.8 335.7 227.8Q338.8 226.8 340.9 229.0Q343.0 231.1 344.2 233.2Q345.5 235.3 345.6 238.2Q345.7 241.2 343.5 243.2Q341.3 245.3 338.4 245.4ZM401.3 115.9Q403.3 112.3 405.3 109.1Q407.2 106.0 411.3 105.1Q415.4 104.1 417.6 107.1Q419.8 110.1 422.3 113.1Q424.7 116.0 422.9 120.1Q421.2 124.1 416.9 124.8Q412.5 125.6 409.0 124.9Q405.4 124.3 402.3 121.8Q399.2 119.4 401.3 115.9ZM516.0 162.5Q520.4 166.2 522.8 171.0Q525.2 175.9 525.5 181.7Q525.7 187.5 520.3 188.9Q514.8 190.4 508.7 188.6Q502.5 186.7 498.4 181.3Q494.2 175.8 493.6 169.9Q492.9 164.0 498.0 162.8Q503.1 161.6 507.3 160.2Q511.6 158.7 516.0 162.5ZM673.9 283.2Q675.6 280.1 678.5 279.3Q681.3 278.6 684.2 278.3Q687.0 278.0 689.3 280.4Q691.5 282.8 690.8 285.7Q690.1 288.7 688.8 290.9Q687.5 293.1 684.7 295.4Q682.0 297.7 678.9 295.5Q675.7 293.3 674.0 289.9Q672.2 286.4 673.9 283.2ZM557.1 269.2Q553.6 272.5 549.7 274.4Q545.8 276.4 544.6 272.4Q543.4 268.3 543.3 263.6Q543.2 259.0 545.7 253.0Q548.3 247.1 552.6 245.3Q557.0 243.5 559.4 246.0Q561.7 248.4 563.1 251.9Q564.5 255.5 562.5 260.7Q560.6 266.0 557.1 269.2ZM686.4 143.5Q688.5 145.0 687.4 148.9Q686.4 152.8 684.5 155.2Q682.5 157.7 680.3 159.0Q678.1 160.3 676.3 159.0Q674.4 157.8 674.5 154.5Q674.6 151.3 675.6 148.5Q676.6 145.7 678.4 144.0Q680.2 142.3 682.3 142.2Q684.3 142.0 686.4 143.5ZM453.9 153.4Q452.8 150.6 454.3 147.7Q455.8 144.8 458.9 143.1Q461.9 141.3 464.6 142.6Q467.4 143.9 470.0 145.5Q472.6 147.2 471.8 150.3Q470.9 153.4 468.8 155.8Q466.6 158.3 463.3 159.0Q459.9 159.7 457.4 157.9Q454.9 156.2 453.9 153.4ZM424.4 133.5Q426.6 133.9 428.5 135.0Q430.5 136.1 431.6 139.1Q432.7 142.1 430.4 144.5Q428.1 146.8 425.9 148.6Q423.7 150.4 421.4 149.4Q419.0 148.3 418.2 145.6Q417.4 142.8 417.0 139.3Q416.6 135.8 419.4 134.5Q422.3 133.1 424.4 133.5ZM612.5 118.8Q614.7 120.0 615.5 122.0Q616.3 124.1 615.7 126.3Q615.1 128.4 612.4 128.5Q609.7 128.5 607.4 128.1Q605.2 127.7 602.6 126.4Q600.0 125.0 600.5 122.6Q601.0 120.1 603.4 119.2Q605.9 118.4 608.1 118.0Q610.4 117.7 612.5 118.8ZM455.6 236.5Q453.4 241.5 448.7 244.1Q444.1 246.8 438.6 246.1Q433.2 245.3 430.5 241.0Q427.7 236.7 426.7 231.7Q425.6 226.7 429.2 222.8Q432.9 218.9 438.2 217.3Q443.6 215.7 446.8 220.0Q450.0 224.3 453.9 227.9Q457.7 231.6 455.6 236.5ZM299.7 239.0Q304.4 238.1 309.6 239.9Q314.9 241.7 317.1 246.8Q319.3 251.8 316.5 256.2Q313.7 260.6 308.9 262.0Q304.1 263.5 299.1 262.7Q294.2 261.8 291.0 258.2Q287.8 254.5 287.0 249.7Q286.2 244.8 290.6 242.3Q295.0 239.8 299.7 239.0ZM451.6 195.8Q455.9 195.2 459.5 196.6Q463.1 198.0 464.4 201.4Q465.7 204.8 465.5 208.2Q465.3 211.7 462.6 213.7Q459.8 215.6 456.2 216.7Q452.6 217.8 449.5 215.2Q446.3 212.7 446.8 208.9Q447.2 205.1 447.3 200.7Q447.3 196.3 451.6 195.8ZM439.9 280.0Q437.1 284.4 432.9 281.8Q428.7 279.1 425.9 276.7Q423.1 274.2 420.6 269.8Q418.0 265.4 419.2 260.5Q420.4 255.6 423.3 251.9Q426.2 248.2 430.6 250.4Q435.0 252.6 437.5 257.9Q440.0 263.2 441.4 269.4Q442.8 275.7 439.9 280.0ZM500.3 189.8Q503.7 186.7 507.9 184.3Q512.1 181.9 515.0 185.7Q517.9 189.4 518.1 194.4Q518.3 199.5 515.5 203.1Q512.8 206.7 509.7 209.3Q506.6 212.0 503.1 211.0Q499.7 210.0 497.5 206.4Q495.3 202.8 496.1 197.8Q496.9 192.8 500.3 189.8ZM659.6 286.3Q662.6 288.5 663.2 292.3Q663.9 296.0 661.7 299.8Q659.5 303.5 655.0 302.9Q650.5 302.2 647.0 300.9Q643.6 299.6 640.2 296.4Q636.9 293.1 638.8 288.9Q640.7 284.6 645.0 282.9Q649.3 281.3 653.0 282.8Q656.7 284.2 659.6 286.3ZM666.7 245.2Q662.1 247.7 656.9 248.1Q651.7 248.5 647.0 245.6Q642.3 242.8 641.6 237.3Q640.9 231.8 644.9 228.0Q648.9 224.1 653.7 222.6Q658.6 221.1 664.4 221.5Q670.3 222.0 673.0 227.1Q675.8 232.2 673.5 237.4Q671.3 242.6 666.7 245.2ZM690.0 223.2Q690.0 220.5 692.4 219.5Q694.9 218.5 697.0 217.7Q699.2 217.0 701.9 217.7Q704.6 218.4 705.0 221.2Q705.4 224.0 704.4 226.6Q703.4 229.1 700.8 229.6Q698.2 230.1 695.7 230.1Q693.3 230.0 691.7 228.0Q690.0 226.0 690.0 223.2ZM413.2 234.7Q409.5 236.0 406.2 235.8Q402.9 235.7 399.0 233.8Q395.1 232.0 396.1 227.6Q397.0 223.2 398.7 220.3Q400.4 217.3 403.5 216.2Q406.6 215.0 410.3 215.8Q414.1 216.6 416.8 220.5Q419.5 224.4 418.2 228.9Q416.9 233.4 413.2 234.7ZM627.1 104.8Q626.0 106.8 624.1 107.6Q622.2 108.4 620.5 108.3Q618.8 108.2 618.2 106.6Q617.7 105.0 617.2 102.8Q616.7 100.7 618.8 99.0Q620.9 97.3 623.0 97.2Q625.0 97.1 626.5 97.9Q628.0 98.8 628.1 100.8Q628.2 102.8 627.1 104.8ZM323.7 288.3Q319.9 288.6 317.4 286.6Q314.9 284.6 311.6 281.7Q308.4 278.9 310.2 273.8Q312.0 268.7 316.2 267.1Q320.3 265.5 324.5 264.2Q328.8 262.8 331.4 266.5Q334.1 270.2 332.8 275.0Q331.5 279.7 329.5 283.8Q327.6 288.0 323.7 288.3ZM672.6 191.7Q674.3 187.0 678.4 183.7Q682.5 180.3 688.2 178.4Q693.9 176.4 696.2 181.3Q698.6 186.1 699.2 191.7Q699.9 197.2 695.0 201.1Q690.0 204.9 685.5 206.3Q680.9 207.8 676.7 206.7Q672.5 205.6 671.7 201.0Q670.9 196.4 672.6 191.7ZM688.8 162.2Q685.2 162.5 682.9 159.1Q680.6 155.8 679.8 152.2Q679.0 148.6 679.3 143.9Q679.6 139.1 683.9 139.0Q688.2 139.0 691.6 140.8Q695.0 142.7 696.7 146.2Q698.5 149.7 698.2 153.6Q697.9 157.5 695.2 159.7Q692.5 162.0 688.8 162.2ZM320.4 237.2Q316.9 238.5 313.1 239.6Q309.3 240.6 307.7 237.0Q306.1 233.4 304.9 230.3Q303.7 227.2 305.1 223.5Q306.4 219.8 310.4 218.7Q314.5 217.6 317.3 220.3Q320.1 223.0 322.0 225.7Q323.9 228.3 323.9 232.1Q323.9 235.8 320.4 237.2ZM459.1 292.2Q458.9 295.1 456.7 296.5Q454.5 297.8 451.9 299.0Q449.3 300.2 447.1 297.8Q444.9 295.3 442.7 292.6Q440.5 289.9 442.1 287.3Q443.7 284.7 446.4 284.0Q449.1 283.2 451.8 284.3Q454.5 285.3 456.9 287.3Q459.3 289.3 459.1 292.2ZM377.7 268.1Q379.3 265.8 382.1 265.8Q384.9 265.8 387.6 266.6Q390.3 267.4 391.6 270.1Q392.9 272.8 392.1 275.2Q391.2 277.6 389.4 279.0Q387.6 280.5 385.3 279.7Q382.9 278.9 381.1 277.4Q379.3 275.8 377.7 273.2Q376.1 270.5 377.7 268.1ZM428.4 221.1Q430.6 222.3 431.7 224.2Q432.9 226.1 433.5 228.4Q434.0 230.8 432.9 232.8Q431.8 234.9 430.0 235.4Q428.2 236.0 426.0 235.9Q423.8 235.8 423.3 233.0Q422.8 230.2 423.1 227.6Q423.3 225.0 424.7 222.5Q426.1 219.9 428.4 221.1ZM623.1 282.0Q621.1 285.9 615.3 287.0Q609.6 288.0 604.7 285.6Q599.9 283.2 597.1 279.8Q594.4 276.4 594.7 272.2Q595.0 268.1 599.6 265.5Q604.3 262.9 609.8 264.4Q615.3 265.9 621.0 267.7Q626.7 269.6 625.9 273.9Q625.0 278.2 623.1 282.0ZM553.5 135.0Q550.8 134.6 548.8 133.7Q546.8 132.7 545.7 130.6Q544.6 128.6 545.2 126.3Q545.8 123.9 547.8 122.4Q549.8 120.9 552.4 121.0Q555.0 121.2 556.3 123.3Q557.5 125.5 558.1 127.9Q558.7 130.3 557.5 132.8Q556.3 135.4 553.5 135.0ZM378.2 257.8Q380.9 261.3 380.7 265.8Q380.6 270.4 378.5 272.7Q376.5 275.1 374.0 278.1Q371.6 281.2 368.2 278.5Q364.8 275.9 364.1 271.1Q363.4 266.4 364.4 263.0Q365.4 259.6 366.9 255.5Q368.3 251.3 371.9 252.8Q375.5 254.3 378.2 257.8ZM321.4 146.9Q318.3 147.7 316.3 146.5Q314.4 145.3 312.3 144.3Q310.2 143.2 311.4 141.2Q312.6 139.2 314.5 137.4Q316.5 135.6 319.6 135.2Q322.7 134.8 324.1 136.5Q325.5 138.2 325.4 139.8Q325.3 141.5 325.0 143.8Q324.6 146.0 321.4 146.9ZM482.3 285.8Q483.8 290.2 479.9 292.9Q476.1 295.5 471.7 298.3Q467.3 301.1 463.0 297.8Q458.7 294.5 456.5 290.0Q454.3 285.4 454.8 279.8Q455.3 274.1 461.1 273.7Q466.9 273.3 472.2 272.2Q477.5 271.1 479.1 276.2Q480.8 281.3 482.3 285.8ZM584.5 250.0Q588.1 251.8 589.4 255.0Q590.6 258.3 589.7 261.0Q588.8 263.7 586.8 266.0Q584.8 268.3 581.3 268.2Q577.7 268.1 575.4 265.5Q573.0 263.0 572.1 260.0Q571.2 257.0 573.1 254.7Q575.0 252.4 577.9 250.3Q580.8 248.2 584.5 250.0ZM576.4 136.0Q577.1 138.8 576.1 141.3Q575.2 143.7 573.0 146.3Q570.9 148.8 567.7 147.5Q564.6 146.2 561.9 145.0Q559.1 143.9 559.4 141.2Q559.6 138.5 560.8 135.7Q562.0 132.9 565.6 132.3Q569.1 131.8 572.5 132.5Q575.8 133.3 576.4 136.0ZM372.3 219.4Q375.7 222.1 377.8 225.6Q380.0 229.0 379.0 233.3Q378.1 237.5 374.4 239.5Q370.7 241.5 366.9 240.7Q363.0 239.9 359.8 237.5Q356.5 235.0 356.4 230.9Q356.3 226.8 357.8 222.2Q359.2 217.6 364.1 217.2Q368.9 216.7 372.3 219.4ZM340.7 163.6Q338.1 161.3 334.4 158.9Q330.6 156.4 332.7 153.8Q334.9 151.2 339.1 151.3Q343.4 151.5 347.5 151.4Q351.6 151.3 355.2 153.8Q358.8 156.4 357.8 159.4Q356.8 162.3 353.6 163.4Q350.3 164.5 346.8 165.1Q343.3 165.8 340.7 163.6ZM472.2 143.4Q467.0 141.8 462.6 138.4Q458.3 135.0 458.8 129.9Q459.3 124.7 463.1 122.2Q466.9 119.6 471.0 119.0Q475.2 118.4 478.7 120.6Q482.3 122.9 483.5 126.5Q484.7 130.1 485.5 134.9Q486.3 139.7 481.9 142.3Q477.4 144.9 472.2 143.4ZM429.4 117.8Q433.5 121.0 433.9 126.8Q434.3 132.7 430.8 137.5Q427.2 142.3 422.0 142.6Q416.9 143.0 413.2 140.8Q409.5 138.6 405.7 135.0Q402.0 131.4 405.0 126.5Q408.0 121.6 411.7 118.5Q415.5 115.4 420.4 115.1Q425.3 114.7 429.4 117.8ZM444.4 273.9Q441.2 273.4 439.8 270.3Q438.3 267.2 438.5 263.5Q438.8 259.8 441.5 257.0Q444.2 254.2 447.5 254.9Q450.7 255.5 453.0 257.4Q455.3 259.2 455.1 262.3Q455.0 265.4 453.9 268.1Q452.8 270.7 450.2 272.6Q447.7 274.4 444.4 273.9ZM325.4 238.3Q325.0 235.3 325.1 232.2Q325.2 229.1 327.8 227.7Q330.4 226.3 333.5 225.4Q336.6 224.5 337.6 227.8Q338.5 231.1 340.2 234.1Q341.9 237.2 339.7 240.5Q337.6 243.7 334.2 244.7Q330.8 245.6 328.3 243.5Q325.7 241.4 325.4 238.3ZM405.6 222.3Q406.2 218.1 409.5 216.3Q412.7 214.6 416.4 216.3Q420.2 218.1 420.7 222.9Q421.3 227.7 421.2 231.4Q421.1 235.2 419.1 237.9Q417.0 240.7 413.7 240.7Q410.4 240.8 408.1 237.5Q405.7 234.2 405.4 230.3Q405.0 226.5 405.6 222.3ZM326.6 168.7Q322.1 166.6 320.7 161.3Q319.2 156.0 321.9 152.0Q324.6 147.9 328.5 145.5Q332.4 143.1 335.9 146.4Q339.4 149.6 343.0 152.2Q346.7 154.8 346.3 159.5Q345.8 164.2 342.4 166.5Q339.0 168.9 335.1 169.9Q331.1 170.8 326.6 168.7ZM677.2 183.1Q681.4 182.3 685.2 182.5Q689.0 182.7 692.4 184.9Q695.8 187.0 694.2 191.0Q692.5 194.9 688.6 196.9Q684.6 198.9 680.2 200.8Q675.7 202.7 672.7 200.1Q669.7 197.6 668.5 194.2Q667.2 190.7 670.1 187.3Q672.9 183.9 677.2 183.1ZM501.5 209.6Q502.1 206.9 505.3 205.1Q508.6 203.4 512.2 201.3Q515.9 199.3 518.1 201.3Q520.2 203.3 520.6 205.5Q520.9 207.7 520.2 210.3Q519.5 213.0 515.9 214.2Q512.4 215.4 508.8 215.7Q505.3 216.0 503.2 214.2Q501.0 212.4 501.5 209.6ZM382.3 210.5Q383.1 207.7 385.1 206.4Q387.1 205.0 389.4 204.0Q391.7 203.1 394.7 203.9Q397.7 204.7 398.3 207.5Q399.0 210.3 398.4 213.0Q397.7 215.6 395.1 217.1Q392.6 218.5 390.0 217.1Q387.5 215.6 384.4 214.5Q381.4 213.3 382.3 210.5ZM595.5 101.7Q600.6 103.0 603.6 106.2Q606.6 109.4 603.1 112.6Q599.5 115.9 596.2 119.3Q592.9 122.7 587.9 121.1Q582.9 119.5 579.3 117.8Q575.7 116.1 574.9 112.9Q574.1 109.7 577.9 107.4Q581.7 105.1 586.1 102.7Q590.5 100.3 595.5 101.7ZM378.0 138.4Q383.2 135.6 388.7 138.1Q394.2 140.6 398.8 144.8Q403.3 148.9 402.8 154.8Q402.2 160.8 396.7 162.7Q391.3 164.7 386.2 166.8Q381.1 168.9 377.3 164.8Q373.4 160.6 370.5 155.8Q367.6 151.1 370.2 146.1Q372.8 141.2 378.0 138.4ZM639.5 118.5Q638.3 121.5 636.2 124.6Q634.1 127.7 630.3 126.0Q626.6 124.2 623.1 122.2Q619.5 120.2 618.3 115.9Q617.0 111.6 620.6 109.6Q624.2 107.6 627.5 104.8Q630.7 102.0 634.8 104.7Q638.8 107.4 639.8 111.4Q640.7 115.5 639.5 118.5ZM362.2 181.9Q365.9 179.0 368.7 175.9Q371.4 172.8 376.9 174.4Q382.4 176.0 387.1 177.8Q391.8 179.5 391.7 182.9Q391.6 186.2 389.9 189.5Q388.2 192.8 382.5 193.0Q376.9 193.3 372.5 191.5Q368.2 189.8 363.4 187.3Q358.5 184.8 362.2 181.9ZM524.5 241.6Q523.5 244.8 521.5 247.1Q519.6 249.4 515.6 248.2Q511.6 246.9 508.3 241.7Q505.0 236.4 505.9 232.3Q506.8 228.2 508.0 225.5Q509.1 222.7 511.9 221.2Q514.8 219.6 518.6 223.8Q522.5 228.0 524.0 233.2Q525.5 238.3 524.5 241.6ZM751.2 38.5Q755.4 36.9 759.7 36.3Q764.0 35.8 767.2 38.9Q770.4 42.0 773.3 46.5Q776.2 51.1 772.6 55.0Q769.0 58.9 764.2 58.6Q759.3 58.4 755.4 57.2Q751.4 56.1 748.7 52.6Q746.0 49.1 746.5 44.6Q747.0 40.2 751.2 38.5ZM799.0 121.4Q796.7 122.7 794.3 123.8Q791.9 124.9 788.7 123.8Q785.4 122.7 786.0 119.2Q786.6 115.8 787.2 113.4Q787.8 111.1 789.7 108.9Q791.6 106.8 794.3 108.3Q797.1 109.8 798.7 112.0Q800.4 114.3 800.9 117.2Q801.3 120.1 799.0 121.4ZM697.3 164.2Q698.7 168.4 698.4 173.0Q698.1 177.5 695.0 180.8Q691.8 184.2 687.6 183.9Q683.4 183.7 680.6 180.5Q677.8 177.3 677.2 172.9Q676.6 168.5 679.0 165.2Q681.5 161.9 684.7 160.7Q688.0 159.6 691.9 159.8Q695.9 160.0 697.3 164.2ZM882.7 273.3Q886.7 270.7 890.9 269.9Q895.1 269.0 898.2 271.8Q901.4 274.7 903.1 278.4Q904.8 282.2 902.9 285.8Q901.0 289.5 897.4 290.4Q893.7 291.3 890.0 291.2Q886.4 291.1 884.0 288.0Q881.7 284.9 880.2 280.4Q878.6 275.9 882.7 273.3ZM762.2 115.4Q759.9 114.8 756.9 114.1Q753.9 113.4 753.7 110.9Q753.6 108.5 754.6 106.7Q755.7 104.9 758.0 104.2Q760.4 103.4 762.8 104.7Q765.3 106.0 766.5 107.8Q767.7 109.7 767.4 111.5Q767.1 113.3 765.8 114.6Q764.5 116.0 762.2 115.4ZM696.9 225.8Q694.0 223.8 694.3 221.0Q694.6 218.2 695.8 215.8Q697.0 213.5 699.8 211.4Q702.7 209.4 706.9 209.2Q711.2 208.9 712.2 212.0Q713.2 215.1 713.7 218.1Q714.2 221.0 710.9 223.0Q707.5 225.0 703.7 226.4Q699.8 227.7 696.9 225.8ZM624.9 154.3Q620.2 153.5 616.5 152.0Q612.7 150.5 610.0 147.4Q607.3 144.4 610.5 141.8Q613.6 139.2 617.2 137.5Q620.9 135.9 625.0 137.1Q629.2 138.3 632.9 140.5Q636.7 142.7 637.3 146.5Q637.9 150.3 633.8 152.6Q629.7 155.0 624.9 154.3ZM678.4 215.0Q680.7 217.4 676.9 221.1Q673.0 224.9 669.1 226.8Q665.1 228.7 661.6 228.9Q658.1 229.2 655.4 227.7Q652.7 226.2 652.9 222.4Q653.2 218.5 657.6 215.0Q662.1 211.6 667.2 209.3Q672.2 207.1 674.2 209.8Q676.1 212.6 678.4 215.0ZM699.9 223.9Q701.2 220.4 703.0 217.4Q704.9 214.4 708.4 215.1Q711.9 215.9 715.7 217.0Q719.4 218.2 719.7 222.2Q720.0 226.2 718.7 229.8Q717.5 233.4 713.9 235.2Q710.4 237.0 707.0 235.0Q703.5 233.1 701.0 230.2Q698.5 227.3 699.9 223.9ZM603.4 287.7Q600.9 289.2 599.6 286.7Q598.4 284.2 598.7 281.1Q599.0 277.9 600.1 275.0Q601.3 272.1 603.4 270.5Q605.4 268.9 608.0 268.0Q610.5 267.0 610.5 270.7Q610.4 274.3 610.7 277.8Q611.0 281.3 608.5 283.7Q606.0 286.2 603.4 287.7ZM781.3 166.1Q785.0 166.1 786.8 169.5Q788.7 173.0 790.0 176.6Q791.4 180.2 789.3 183.5Q787.3 186.8 783.5 187.6Q779.7 188.5 776.8 185.8Q774.0 183.1 771.5 180.0Q769.0 176.9 769.5 172.7Q770.1 168.4 773.8 167.3Q777.6 166.2 781.3 166.1ZM690.5 168.5Q687.7 167.9 686.0 163.2Q684.3 158.4 685.4 153.8Q686.6 149.2 688.2 144.6Q689.8 140.0 692.7 142.7Q695.6 145.5 698.3 147.8Q701.0 150.2 700.4 155.1Q699.7 160.0 698.5 163.2Q697.4 166.3 695.3 167.7Q693.3 169.0 690.5 168.5ZM616.2 161.1Q613.2 157.9 611.6 155.2Q609.9 152.4 609.5 148.5Q609.0 144.6 612.5 141.3Q616.1 138.1 620.1 139.8Q624.2 141.6 626.4 143.8Q628.6 146.0 631.0 149.2Q633.3 152.5 629.9 155.3Q626.5 158.0 622.9 161.1Q619.3 164.2 616.2 161.1ZM773.7 186.7Q776.1 189.2 774.7 191.9Q773.3 194.5 772.3 197.2Q771.4 199.9 768.6 198.6Q765.9 197.4 763.2 196.3Q760.5 195.3 760.0 192.3Q759.5 189.3 759.8 186.1Q760.2 183.0 763.2 183.4Q766.2 183.9 768.8 184.0Q771.4 184.1 773.7 186.7ZM732.3 265.5Q735.5 264.8 739.4 266.5Q743.4 268.2 745.5 272.1Q747.6 276.0 747.5 279.5Q747.4 282.9 745.8 286.2Q744.2 289.5 739.6 288.3Q735.0 287.0 731.8 283.2Q728.6 279.3 725.4 274.7Q722.2 270.1 725.6 268.2Q729.1 266.2 732.3 265.5ZM793.0 57.3Q789.0 60.4 785.9 58.4Q782.8 56.5 781.3 53.8Q779.8 51.1 780.6 47.2Q781.4 43.3 784.6 39.2Q787.8 35.1 791.6 36.0Q795.5 37.0 799.1 37.7Q802.8 38.4 802.7 42.5Q802.7 46.7 799.9 50.5Q797.1 54.3 793.0 57.3ZM794.1 270.9Q791.8 272.8 790.4 271.1Q789.0 269.3 787.3 267.7Q785.7 266.2 786.8 263.4Q787.9 260.6 790.7 259.8Q793.5 259.0 795.4 259.4Q797.3 259.8 798.6 260.9Q799.8 262.1 800.9 264.2Q801.9 266.4 799.1 267.7Q796.4 269.0 794.1 270.9ZM898.0 53.9Q897.6 50.2 897.6 47.0Q897.6 43.8 899.5 39.4Q901.4 35.1 905.2 33.9Q909.0 32.6 912.1 33.6Q915.2 34.6 916.1 38.5Q917.0 42.3 913.7 45.9Q910.3 49.5 907.9 52.1Q905.4 54.6 901.9 56.1Q898.3 57.6 898.0 53.9ZM832.6 18.1Q829.7 18.0 825.6 17.6Q821.5 17.3 821.5 13.9Q821.5 10.5 821.5 7.2Q821.5 4.0 825.4 4.0Q829.3 4.1 832.6 4.2Q835.9 4.3 837.5 7.0Q839.0 9.6 839.7 12.4Q840.5 15.1 838.0 16.7Q835.6 18.2 832.6 18.1ZM823.1 36.0Q824.0 33.1 826.9 32.2Q829.9 31.4 832.5 35.4Q835.1 39.4 836.2 43.1Q837.3 46.7 838.1 51.3Q838.9 55.9 835.9 57.1Q833.0 58.2 829.5 56.1Q826.0 53.9 824.3 49.8Q822.5 45.7 822.3 42.2Q822.1 38.8 823.1 36.0ZM688.1 14.5Q690.0 14.8 691.0 16.2Q692.0 17.6 693.1 19.2Q694.2 20.8 693.3 23.0Q692.5 25.1 690.8 26.1Q689.0 27.1 687.3 26.7Q685.6 26.2 684.4 24.6Q683.3 22.9 683.2 20.4Q683.0 17.9 684.6 16.0Q686.2 14.2 688.1 14.5ZM831.8 117.3Q833.5 114.5 836.4 112.9Q839.2 111.3 842.1 112.2Q844.9 113.1 848.5 114.4Q852.0 115.6 849.8 118.8Q847.6 121.9 846.4 124.9Q845.2 127.8 841.5 129.1Q837.9 130.4 835.6 127.8Q833.4 125.2 831.7 122.6Q830.1 120.1 831.8 117.3ZM719.2 73.7Q716.9 71.5 719.2 69.6Q721.5 67.7 723.2 65.6Q725.0 63.5 727.5 64.8Q730.1 66.1 732.2 68.0Q734.3 69.9 734.1 72.8Q733.9 75.6 731.8 77.3Q729.8 78.9 727.1 80.3Q724.4 81.7 722.9 78.8Q721.5 75.9 719.2 73.7ZM844.8 247.5Q847.7 244.5 851.9 244.4Q856.1 244.2 858.0 247.5Q860.0 250.9 860.8 254.7Q861.7 258.5 858.6 261.6Q855.5 264.6 851.8 266.1Q848.1 267.6 844.6 266.4Q841.0 265.1 839.4 261.5Q837.8 257.9 839.8 254.2Q841.9 250.5 844.8 247.5ZM818.0 162.7Q817.5 164.7 815.7 166.5Q813.8 168.4 811.0 168.6Q808.2 168.8 806.1 167.8Q804.1 166.8 804.0 165.0Q803.9 163.1 805.1 161.5Q806.3 159.9 808.4 158.0Q810.4 156.0 813.0 156.8Q815.6 157.6 817.0 159.1Q818.5 160.7 818.0 162.7ZM772.1 249.8Q769.3 249.0 768.1 246.2Q767.0 243.3 768.3 240.3Q769.6 237.3 772.8 235.9Q775.9 234.5 778.2 236.6Q780.6 238.7 782.5 240.3Q784.5 241.9 785.0 244.9Q785.5 247.9 783.2 250.2Q780.8 252.4 777.8 251.5Q774.9 250.6 772.1 249.8ZM645.0 73.0Q646.3 70.9 648.5 70.4Q650.7 69.9 652.9 69.9Q655.1 69.9 657.5 71.4Q659.9 72.9 659.3 75.6Q658.7 78.3 656.8 79.9Q654.8 81.4 652.4 81.8Q650.1 82.1 647.6 81.2Q645.2 80.3 644.4 77.7Q643.6 75.1 645.0 73.0ZM646.0 197.4Q647.5 195.9 649.7 196.3Q652.0 196.8 653.3 199.3Q654.7 201.8 655.5 204.3Q656.2 206.8 655.7 209.4Q655.3 212.1 653.0 211.6Q650.6 211.1 648.7 210.0Q646.8 208.9 644.8 206.4Q642.8 203.9 643.7 201.4Q644.6 198.8 646.0 197.4ZM696.6 75.9Q697.1 71.4 698.6 67.6Q700.1 63.7 704.2 60.9Q708.3 58.1 712.8 59.9Q717.4 61.6 719.1 65.6Q720.9 69.6 719.4 73.3Q717.8 77.0 715.5 80.4Q713.2 83.9 708.8 84.0Q704.5 84.1 700.3 82.3Q696.0 80.4 696.6 75.9ZM706.5 120.4Q708.6 123.6 708.3 127.9Q708.0 132.2 704.5 132.2Q701.0 132.3 697.5 133.0Q694.0 133.7 691.8 129.6Q689.5 125.5 689.9 121.6Q690.4 117.7 691.8 114.4Q693.2 111.1 696.4 111.6Q699.7 112.1 702.0 114.6Q704.3 117.1 706.5 120.4ZM856.5 105.4Q859.2 107.8 862.0 110.6Q864.8 113.3 863.7 116.9Q862.6 120.5 859.6 122.6Q856.6 124.6 852.5 125.0Q848.4 125.3 846.0 121.7Q843.7 118.0 843.1 114.2Q842.5 110.5 843.8 106.6Q845.2 102.7 849.5 102.8Q853.7 103.0 856.5 105.4ZM768.7 142.0Q771.9 145.8 775.4 148.9Q778.9 151.9 777.5 156.5Q776.0 161.1 772.4 164.5Q768.9 168.0 763.7 167.6Q758.6 167.3 756.7 162.9Q754.7 158.5 754.0 154.6Q753.2 150.8 755.7 147.8Q758.1 144.8 761.8 141.5Q765.5 138.2 768.7 142.0ZM641.6 15.2Q643.7 17.3 643.2 21.3Q642.7 25.2 640.2 28.4Q637.7 31.5 635.0 35.0Q632.2 38.4 629.7 37.5Q627.1 36.6 625.8 34.2Q624.4 31.8 624.9 27.5Q625.4 23.2 628.9 19.6Q632.3 15.9 636.0 14.5Q639.6 13.1 641.6 15.2ZM656.8 104.7Q654.6 107.8 651.2 109.2Q647.8 110.7 644.6 109.5Q641.4 108.3 638.4 105.7Q635.4 103.1 637.2 99.0Q639.1 94.9 642.4 92.3Q645.8 89.8 649.7 89.8Q653.5 89.9 655.3 92.7Q657.1 95.5 658.0 98.6Q658.9 101.7 656.8 104.7ZM893.5 250.2Q888.2 249.7 884.5 247.6Q880.7 245.5 878.8 242.5Q877.0 239.6 878.4 236.7Q879.8 233.9 883.7 232.4Q887.6 230.9 892.1 232.2Q896.5 233.5 900.7 235.8Q904.8 238.1 903.1 241.1Q901.5 244.2 900.1 247.5Q898.7 250.8 893.5 250.2ZM786.7 6.6Q789.2 7.8 790.7 9.7Q792.1 11.5 793.1 14.4Q794.0 17.3 792.0 19.4Q789.9 21.5 787.7 23.2Q785.4 24.9 783.0 23.9Q780.5 22.8 779.7 19.8Q778.9 16.8 779.8 13.8Q780.7 10.9 782.5 8.2Q784.3 5.4 786.7 6.6ZM743.4 267.0Q741.7 265.2 743.0 263.2Q744.2 261.3 745.2 259.5Q746.1 257.6 748.2 258.0Q750.4 258.4 752.9 258.8Q755.3 259.3 755.5 261.7Q755.7 264.0 755.0 266.2Q754.3 268.4 752.0 268.9Q749.7 269.5 747.4 269.1Q745.1 268.8 743.4 267.0ZM826.3 93.4Q823.6 93.0 822.0 92.1Q820.5 91.3 820.2 89.9Q819.9 88.5 820.3 86.6Q820.7 84.7 823.6 83.5Q826.4 82.2 828.8 83.1Q831.1 84.0 832.7 85.2Q834.3 86.4 833.1 88.2Q832.0 90.0 830.4 91.9Q828.9 93.8 826.3 93.4ZM834.8 46.7Q833.1 48.3 831.3 49.2Q829.6 50.1 827.6 50.6Q825.6 51.0 825.0 49.9Q824.4 48.8 824.5 47.4Q824.6 46.0 826.4 44.8Q828.2 43.7 830.4 42.4Q832.5 41.0 833.5 42.0Q834.6 43.0 835.6 44.1Q836.5 45.1 834.8 46.7ZM642.4 235.4Q641.1 230.5 643.7 229.1Q646.2 227.7 649.1 227.4Q651.9 227.1 654.2 231.3Q656.5 235.5 658.4 239.8Q660.3 244.1 659.8 248.6Q659.4 253.0 656.3 253.2Q653.1 253.4 649.7 251.7Q646.4 250.0 645.0 245.1Q643.7 240.2 642.4 235.4ZM302.9 257.3Q298.6 257.7 294.8 256.4Q291.1 255.1 288.1 251.9Q285.1 248.7 286.7 244.9Q288.4 241.0 291.5 237.6Q294.6 234.2 298.9 236.5Q303.1 238.7 306.8 240.5Q310.4 242.3 312.0 246.4Q313.6 250.5 310.4 253.7Q307.2 257.0 302.9 257.3ZM244.2 241.3Q245.3 240.0 247.4 239.1Q249.5 238.2 250.5 240.6Q251.4 242.9 252.5 244.8Q253.6 246.6 253.0 249.0Q252.3 251.4 249.9 251.3Q247.6 251.2 245.2 251.1Q242.9 251.0 241.9 248.7Q241.0 246.3 242.0 244.5Q243.0 242.6 244.2 241.3ZM213.5 268.3Q212.7 269.9 210.9 270.6Q209.2 271.2 207.2 271.6Q205.3 271.9 205.2 270.3Q205.1 268.7 205.2 267.0Q205.3 265.4 207.0 263.6Q208.8 261.8 210.9 261.6Q213.0 261.4 214.2 262.3Q215.5 263.3 214.9 265.0Q214.4 266.7 213.5 268.3ZM242.7 254.3Q239.8 253.9 237.1 252.1Q234.4 250.3 234.7 247.2Q235.1 244.0 236.3 241.7Q237.5 239.5 239.8 237.1Q242.1 234.7 244.8 237.1Q247.4 239.6 249.9 242.1Q252.3 244.6 251.8 248.2Q251.4 251.8 248.5 253.3Q245.6 254.7 242.7 254.3ZM173.1 253.5Q170.8 251.9 169.2 249.0Q167.5 246.1 169.1 243.0Q170.6 239.9 172.9 237.2Q175.1 234.6 178.3 235.2Q181.5 235.7 183.4 238.7Q185.2 241.6 184.9 245.1Q184.5 248.5 183.0 251.6Q181.4 254.6 178.4 254.9Q175.4 255.2 173.1 253.5ZM162.2 257.2Q159.6 253.6 162.2 249.9Q164.9 246.2 168.2 243.5Q171.5 240.9 175.3 242.4Q179.2 244.0 181.8 247.3Q184.4 250.6 183.1 254.6Q181.8 258.5 180.1 262.4Q178.4 266.3 174.5 265.3Q170.7 264.3 167.8 262.6Q164.9 260.9 162.2 257.2ZM154.0 273.4Q150.9 272.0 149.6 269.3Q148.3 266.5 147.7 263.5Q147.1 260.4 149.0 257.5Q150.9 254.6 154.2 254.1Q157.4 253.5 159.2 256.1Q161.0 258.7 162.1 261.1Q163.2 263.5 162.8 266.6Q162.4 269.7 159.8 272.2Q157.1 274.7 154.0 273.4ZM161.3 283.3Q158.1 284.8 154.5 285.5Q151.0 286.3 150.8 283.2Q150.5 280.2 149.0 277.7Q147.6 275.2 150.7 273.0Q153.8 270.9 156.8 270.0Q159.8 269.2 161.7 270.6Q163.6 272.0 164.5 274.0Q165.5 276.0 165.0 278.9Q164.5 281.8 161.3 283.3ZM275.5 254.8Q273.3 254.6 270.8 254.1Q268.3 253.7 266.5 251.3Q264.7 248.9 265.0 246.7Q265.2 244.5 267.1 243.8Q268.9 243.1 271.1 243.5Q273.2 243.9 275.5 245.4Q277.8 246.9 278.8 249.3Q279.9 251.7 278.9 253.4Q277.8 255.0 275.5 254.8ZM269.7 243.0Q272.6 245.3 272.9 248.7Q273.3 252.0 271.9 254.6Q270.5 257.2 268.4 260.3Q266.3 263.4 262.8 262.1Q259.3 260.8 257.0 258.1Q254.7 255.5 256.0 252.3Q257.2 249.1 258.3 245.8Q259.4 242.4 263.1 241.5Q266.7 240.7 269.7 243.0ZM323.4 282.1Q324.1 286.4 322.3 290.1Q320.6 293.7 317.2 295.5Q313.7 297.3 310.7 294.9Q307.6 292.4 304.5 289.9Q301.4 287.4 302.6 283.5Q303.9 279.6 305.9 276.1Q308.0 272.7 311.5 274.5Q315.1 276.2 318.9 277.0Q322.7 277.8 323.4 282.1ZM286.5 260.7Q285.6 257.0 285.3 253.5Q285.0 250.0 286.3 246.6Q287.7 243.2 290.6 243.6Q293.4 244.0 295.8 246.5Q298.1 248.9 298.4 252.8Q298.7 256.6 298.3 260.4Q297.9 264.2 295.4 265.8Q292.9 267.4 290.2 265.8Q287.5 264.3 286.5 260.7Z"/>
<path fill="#93d1a4" d="M739.9 57.6Q735.8 58.6 730.9 57.9Q725.9 57.2 724.8 51.9Q723.6 46.5 723.1 41.2Q722.5 36.0 726.8 34.1Q731.1 32.2 735.3 32.5Q739.5 32.8 743.9 35.6Q748.2 38.3 750.5 44.2Q752.9 50.1 748.4 53.4Q743.9 56.6 739.9 57.6ZM724.2 188.1Q721.3 193.3 718.9 199.4Q716.6 205.5 708.9 204.3Q701.1 203.1 696.3 200.0Q691.4 196.9 689.8 192.3Q688.3 187.7 690.1 182.8Q691.9 177.9 697.7 173.6Q703.4 169.2 709.7 172.6Q716.1 176.1 721.6 179.5Q727.0 182.9 724.2 188.1ZM839.6 121.0Q838.7 124.2 834.0 123.2Q829.3 122.2 825.2 119.3Q821.0 116.4 817.9 112.5Q814.7 108.6 815.6 105.4Q816.5 102.2 820.0 101.5Q823.5 100.9 828.2 101.5Q832.9 102.1 836.9 106.3Q840.9 110.5 840.7 114.1Q840.5 117.8 839.6 121.0ZM819.0 168.1Q812.4 169.4 806.1 169.8Q799.8 170.1 794.0 167.0Q788.3 163.8 790.8 158.9Q793.4 153.9 796.4 149.6Q799.3 145.3 805.8 145.6Q812.2 146.0 819.1 146.5Q826.1 146.9 829.1 151.8Q832.1 156.8 828.8 161.8Q825.5 166.8 819.0 168.1ZM899.8 75.1Q906.1 75.9 910.8 80.8Q915.6 85.7 914.6 92.4Q913.5 99.2 910.8 104.6Q908.1 110.0 902.6 109.1Q897.1 108.2 891.5 107.8Q885.9 107.4 883.6 101.3Q881.3 95.2 881.8 88.2Q882.3 81.2 887.9 77.8Q893.5 74.4 899.8 75.1ZM737.8 120.5Q735.4 124.4 731.5 126.1Q727.7 127.8 722.0 128.9Q716.4 130.0 714.0 124.7Q711.5 119.4 710.6 114.9Q709.6 110.4 712.1 106.6Q714.6 102.8 719.9 100.7Q725.3 98.5 729.3 103.4Q733.3 108.4 736.7 112.5Q740.1 116.6 737.8 120.5ZM815.5 267.7Q814.8 273.9 812.6 280.0Q810.5 286.1 804.8 286.4Q799.1 286.7 795.9 279.9Q792.8 273.1 791.3 267.7Q789.8 262.2 791.1 257.2Q792.4 252.2 796.1 250.2Q799.9 248.2 804.6 249.3Q809.2 250.4 812.7 255.9Q816.2 261.5 815.5 267.7ZM721.2 -11.4Q726.2 -10.0 728.6 -6.2Q731.0 -2.4 730.8 2.0Q730.7 6.4 727.2 9.8Q723.8 13.2 719.2 12.0Q714.6 10.9 709.3 10.4Q704.1 10.0 703.0 5.2Q702.0 0.4 704.1 -4.1Q706.1 -8.7 711.2 -10.7Q716.2 -12.7 721.2 -11.4ZM749.9 116.3Q751.2 115.0 753.8 115.0Q756.5 115.0 759.2 116.0Q761.9 116.9 762.5 118.6Q763.2 120.4 762.4 121.7Q761.6 123.0 759.7 123.8Q757.7 124.6 755.1 124.0Q752.5 123.4 750.1 122.1Q747.8 120.8 748.2 119.2Q748.7 117.5 749.9 116.3ZM893.8 189.2Q892.1 186.7 890.4 183.4Q888.7 180.1 890.1 176.9Q891.5 173.8 894.7 174.3Q897.9 174.9 900.5 176.6Q903.1 178.3 903.8 181.4Q904.4 184.5 904.1 187.0Q903.7 189.5 902.1 191.3Q900.5 193.1 898.0 192.4Q895.5 191.6 893.8 189.2ZM891.5 47.7Q892.7 50.0 890.9 51.5Q889.0 53.0 887.1 54.5Q885.2 56.0 882.0 55.6Q878.8 55.2 877.1 52.4Q875.4 49.6 876.0 46.9Q876.5 44.1 879.0 43.1Q881.5 42.1 884.0 42.0Q886.5 41.9 888.4 43.7Q890.2 45.5 891.5 47.7ZM864.4 147.6Q869.1 142.1 875.4 143.0Q881.6 143.8 884.4 148.1Q887.2 152.3 885.7 158.1Q884.1 163.9 878.6 168.6Q873.0 173.3 867.3 173.1Q861.6 172.9 856.9 171.8Q852.1 170.7 852.1 166.0Q852.1 161.2 855.9 157.2Q859.7 153.1 864.4 147.6ZM657.5 74.3Q661.8 76.5 662.8 81.2Q663.9 85.9 661.0 90.1Q658.2 94.4 653.1 94.6Q648.1 94.8 644.5 93.3Q640.8 91.8 638.9 88.8Q637.0 85.9 637.8 82.4Q638.6 79.0 641.5 76.7Q644.5 74.4 648.8 73.3Q653.1 72.1 657.5 74.3ZM895.8 240.3Q900.3 236.9 906.0 236.1Q911.7 235.3 915.9 239.4Q920.1 243.6 920.9 249.3Q921.7 255.0 918.3 259.3Q914.9 263.6 910.2 264.3Q905.5 265.1 900.1 265.2Q894.7 265.3 893.4 259.9Q892.1 254.6 891.7 249.1Q891.2 243.6 895.8 240.3ZM937.7 116.9Q937.7 121.0 935.8 124.3Q933.9 127.7 930.1 131.2Q926.4 134.7 921.5 132.4Q916.5 130.2 916.0 125.3Q915.4 120.4 914.3 115.5Q913.3 110.6 917.3 106.9Q921.2 103.2 926.5 104.3Q931.8 105.3 934.8 109.1Q937.7 112.8 937.7 116.9ZM805.2 47.1Q802.8 49.0 800.2 47.5Q797.6 45.9 795.4 43.9Q793.2 42.0 793.5 38.7Q793.8 35.5 796.4 34.2Q799.0 32.9 801.3 32.6Q803.6 32.2 805.5 33.6Q807.5 34.9 808.1 37.3Q808.6 39.8 808.1 42.5Q807.6 45.2 805.2 47.1ZM722.8 130.7Q721.8 133.7 719.3 135.5Q716.9 137.3 714.5 135.0Q712.1 132.8 709.9 130.1Q707.8 127.4 708.8 124.0Q709.8 120.6 711.7 118.4Q713.6 116.3 716.2 116.4Q718.8 116.5 720.2 119.3Q721.5 122.1 722.6 124.8Q723.8 127.6 722.8 130.7ZM678.3 4.3Q677.0 -1.2 681.2 -6.1Q685.4 -11.0 690.9 -13.9Q696.4 -16.9 701.8 -15.1Q707.2 -13.4 710.4 -8.3Q713.6 -3.2 709.5 2.4Q705.4 8.0 701.6 13.1Q697.8 18.2 692.3 17.3Q686.8 16.3 683.2 13.1Q679.5 9.9 678.3 4.3ZM883.5 144.8Q886.0 150.1 884.1 155.4Q882.2 160.8 877.4 164.2Q872.6 167.6 866.4 167.9Q860.1 168.3 856.3 163.9Q852.5 159.6 851.6 154.2Q850.7 148.9 854.2 144.4Q857.7 139.9 863.5 136.6Q869.3 133.3 875.1 136.4Q881.0 139.5 883.5 144.8ZM908.0 276.9Q908.4 281.7 907.8 285.2Q907.2 288.7 904.9 291.6Q902.6 294.6 899.0 293.3Q895.3 291.9 892.4 289.7Q889.5 287.4 889.3 283.7Q889.1 280.0 889.7 275.7Q890.3 271.5 894.4 269.9Q898.5 268.4 903.0 270.2Q907.6 272.1 908.0 276.9ZM671.6 208.0Q674.9 203.2 679.3 197.8Q683.8 192.5 689.4 196.5Q695.0 200.5 698.6 205.4Q702.1 210.3 703.4 217.6Q704.6 224.8 699.3 229.6Q693.9 234.4 687.8 232.2Q681.8 230.0 676.8 227.5Q671.9 224.9 670.1 218.9Q668.2 212.9 671.6 208.0ZM747.2 53.0Q747.0 57.7 745.5 61.0Q743.9 64.3 742.2 67.0Q740.4 69.8 738.0 70.1Q735.5 70.5 734.2 67.2Q733.0 63.9 733.9 60.0Q734.9 56.1 735.7 51.2Q736.6 46.4 739.5 45.6Q742.4 44.8 744.9 46.5Q747.3 48.2 747.2 53.0ZM672.0 74.6Q674.6 74.9 677.2 76.7Q679.9 78.5 679.9 81.0Q679.9 83.6 677.4 84.4Q674.9 85.2 672.4 85.0Q670.0 84.8 666.9 84.1Q663.7 83.4 663.1 80.9Q662.4 78.3 663.1 76.2Q663.8 74.1 666.6 74.2Q669.4 74.3 672.0 74.6ZM649.3 219.7Q644.1 216.3 644.3 211.1Q644.6 205.9 643.8 200.6Q643.0 195.3 648.7 195.2Q654.4 195.1 659.9 193.8Q665.3 192.5 668.1 197.4Q670.8 202.3 670.6 206.9Q670.5 211.5 667.9 215.5Q665.3 219.4 659.9 221.2Q654.4 223.0 649.3 219.7ZM720.4 47.5Q716.1 45.8 712.6 43.3Q709.0 40.8 707.5 37.4Q706.1 34.0 707.9 31.7Q709.8 29.4 713.7 28.1Q717.5 26.9 721.9 30.2Q726.3 33.4 729.5 36.8Q732.7 40.3 731.4 43.1Q730.1 45.8 727.4 47.5Q724.7 49.1 720.4 47.5ZM645.9 68.2Q648.6 68.8 651.3 70.5Q653.9 72.2 652.8 74.8Q651.7 77.4 651.1 80.1Q650.6 82.7 647.7 82.5Q644.7 82.3 642.3 81.1Q639.8 79.8 638.1 77.4Q636.3 74.9 637.7 72.7Q639.1 70.4 641.2 69.0Q643.2 67.6 645.9 68.2ZM851.3 300.8Q849.9 304.5 845.9 305.5Q842.0 306.6 838.9 304.4Q835.9 302.1 834.2 299.1Q832.5 296.0 833.5 292.5Q834.6 289.1 836.9 285.1Q839.2 281.2 843.3 282.8Q847.5 284.3 850.0 287.1Q852.5 289.9 852.6 293.5Q852.7 297.1 851.3 300.8ZM880.5 271.2Q876.9 265.5 876.5 260.7Q876.1 255.9 877.1 251.7Q878.1 247.5 882.5 247.5Q886.8 247.6 892.3 248.7Q897.8 249.9 901.3 256.1Q904.8 262.3 903.1 267.3Q901.5 272.2 897.6 273.6Q893.7 274.9 888.9 275.9Q884.0 276.9 880.5 271.2ZM726.4 103.9Q727.4 101.8 729.2 100.4Q731.1 98.9 732.8 100.5Q734.5 102.0 735.8 103.7Q737.2 105.4 736.7 107.7Q736.1 110.0 734.9 112.0Q733.7 114.1 731.7 113.5Q729.7 113.0 728.3 111.7Q726.9 110.3 726.1 108.2Q725.3 106.0 726.4 103.9ZM723.9 180.6Q721.9 186.4 716.5 188.0Q711.0 189.7 706.4 188.8Q701.7 188.0 696.6 185.4Q691.6 182.8 694.3 177.3Q696.9 171.9 698.8 166.8Q700.6 161.7 706.1 160.7Q711.6 159.8 714.7 163.6Q717.8 167.5 721.8 171.2Q725.8 174.9 723.9 180.6ZM913.2 190.0Q913.3 195.9 910.6 201.6Q907.9 207.2 903.4 207.7Q898.8 208.2 895.3 204.2Q891.7 200.2 891.5 193.4Q891.2 186.6 892.7 179.8Q894.1 173.0 898.5 170.8Q902.9 168.5 907.0 170.2Q911.1 171.9 912.1 178.0Q913.1 184.0 913.2 190.0ZM642.9 51.0Q638.5 49.0 636.6 44.6Q634.7 40.2 636.1 35.7Q637.5 31.1 641.9 29.1Q646.3 27.2 650.2 29.1Q654.1 31.0 658.9 32.8Q663.6 34.6 663.6 39.6Q663.7 44.6 660.1 47.9Q656.5 51.1 651.9 52.1Q647.3 53.1 642.9 51.0ZM830.8 31.7Q825.4 27.7 823.8 22.3Q822.2 16.9 820.9 11.6Q819.6 6.3 823.1 3.7Q826.7 1.1 832.3 4.8Q838.0 8.5 841.9 13.2Q845.8 17.9 847.4 22.9Q849.0 28.0 847.5 31.9Q846.0 35.7 841.1 35.7Q836.2 35.8 830.8 31.7ZM815.4 195.5Q815.2 193.2 816.4 190.6Q817.6 187.9 820.2 187.4Q822.7 186.8 824.6 187.0Q826.6 187.2 827.8 188.6Q829.0 190.1 828.9 192.7Q828.7 195.3 826.3 197.7Q823.9 200.0 821.1 200.7Q818.2 201.3 816.9 199.5Q815.5 197.7 815.4 195.5ZM798.8 152.4Q795.3 157.5 789.3 156.7Q783.2 155.9 782.3 150.1Q781.3 144.2 780.0 139.7Q778.6 135.2 781.3 130.0Q784.0 124.8 789.9 122.8Q795.8 120.9 799.7 125.0Q803.7 129.0 804.7 133.8Q805.8 138.5 804.0 142.9Q802.2 147.3 798.8 152.4ZM907.8 59.3Q909.2 55.5 913.0 51.5Q916.9 47.4 922.4 49.3Q927.9 51.2 932.5 54.5Q937.1 57.9 936.1 63.3Q935.1 68.7 930.2 71.4Q925.3 74.0 919.9 76.7Q914.5 79.4 910.3 75.7Q906.1 72.0 906.2 67.5Q906.3 63.0 907.8 59.3ZM633.6 152.6Q632.1 147.5 630.9 142.6Q629.6 137.6 633.2 137.5Q636.8 137.3 639.8 136.0Q642.8 134.7 646.4 138.4Q650.1 142.2 649.9 146.8Q649.7 151.3 650.3 156.3Q650.8 161.3 647.1 161.6Q643.3 161.9 639.2 159.8Q635.2 157.6 633.6 152.6ZM733.5 120.2Q731.2 123.4 727.2 123.3Q723.2 123.1 720.4 120.3Q717.7 117.5 716.5 114.0Q715.3 110.4 715.1 105.5Q714.9 100.6 719.4 100.1Q723.9 99.7 728.7 99.3Q733.4 98.9 734.7 103.9Q736.0 108.9 735.9 112.9Q735.8 117.0 733.5 120.2ZM786.6 70.2Q781.9 67.9 778.4 63.6Q775.0 59.2 775.7 53.6Q776.4 48.0 781.0 45.7Q785.5 43.4 790.4 43.1Q795.3 42.7 797.6 47.2Q799.9 51.8 802.7 56.0Q805.6 60.2 802.6 64.0Q799.6 67.7 795.4 70.1Q791.3 72.5 786.6 70.2ZM834.1 90.8Q833.0 92.9 831.3 93.2Q829.7 93.6 827.7 92.8Q825.8 92.0 824.7 88.9Q823.5 85.8 824.8 83.3Q826.1 80.9 827.4 78.8Q828.7 76.7 830.5 77.9Q832.3 79.1 833.7 81.0Q835.2 82.9 835.2 85.8Q835.1 88.7 834.1 90.8ZM699.0 47.4Q701.5 50.6 700.2 54.2Q698.8 57.9 694.9 58.0Q690.9 58.2 687.9 56.5Q684.9 54.9 683.0 52.4Q681.0 50.0 681.3 47.2Q681.5 44.4 683.1 42.1Q684.7 39.8 687.9 40.3Q691.0 40.9 693.7 42.5Q696.4 44.1 699.0 47.4ZM728.6 160.1Q732.1 166.4 731.5 173.0Q730.9 179.6 727.4 183.9Q723.8 188.1 718.8 187.2Q713.8 186.3 709.2 183.5Q704.7 180.7 700.4 174.3Q696.1 167.8 700.9 163.2Q705.7 158.6 709.6 154.7Q713.5 150.7 719.3 152.3Q725.1 153.9 728.6 160.1ZM886.1 70.4Q883.5 66.8 884.2 62.3Q884.9 57.7 887.6 54.7Q890.3 51.8 893.5 54.0Q896.7 56.2 898.7 58.3Q900.8 60.4 902.8 63.9Q904.7 67.4 903.4 71.5Q902.1 75.6 898.6 76.0Q895.0 76.4 891.8 75.1Q888.7 73.9 886.1 70.4ZM640.3 138.5Q633.2 135.8 629.0 130.9Q624.8 126.0 623.8 119.7Q622.7 113.5 624.8 106.6Q626.9 99.6 633.8 96.5Q640.7 93.4 648.7 95.5Q656.8 97.7 659.8 105.9Q662.9 114.2 661.0 122.2Q659.1 130.1 653.3 135.7Q647.4 141.2 640.3 138.5ZM777.5 170.7Q774.7 171.9 772.3 171.0Q769.8 170.2 768.9 168.7Q768.0 167.1 768.3 165.3Q768.5 163.5 770.3 161.7Q772.1 159.8 775.2 159.4Q778.2 158.9 779.6 160.6Q781.0 162.3 781.3 163.9Q781.6 165.5 780.9 167.5Q780.2 169.5 777.5 170.7ZM807.1 107.0Q809.7 107.2 812.9 108.4Q816.0 109.6 817.9 113.4Q819.8 117.2 820.6 120.8Q821.3 124.4 819.0 125.2Q816.7 126.0 814.1 124.7Q811.5 123.5 809.2 121.1Q806.9 118.7 804.5 115.2Q802.1 111.6 803.3 109.2Q804.5 106.8 807.1 107.0ZM728.8 -7.6Q733.9 -6.7 738.7 -3.5Q743.5 -0.3 743.0 4.7Q742.5 9.7 740.5 12.5Q738.5 15.4 735.4 17.3Q732.3 19.1 728.0 17.5Q723.7 15.8 720.2 11.8Q716.7 7.8 718.3 3.8Q719.9 -0.3 721.8 -4.3Q723.6 -8.4 728.8 -7.6ZM853.3 158.8Q850.9 157.6 850.0 155.4Q849.2 153.1 849.5 149.9Q849.9 146.8 853.5 145.3Q857.1 143.9 860.9 142.6Q864.8 141.2 866.3 144.0Q867.8 146.8 866.9 149.7Q866.0 152.6 864.0 154.9Q862.0 157.3 858.8 158.7Q855.7 160.1 853.3 158.8ZM840.3 278.5Q842.5 280.5 843.4 282.3Q844.3 284.1 843.4 285.9Q842.6 287.7 840.4 289.3Q838.2 290.9 834.4 291.4Q830.6 292.0 828.0 290.0Q825.3 288.1 825.5 285.4Q825.7 282.7 827.8 280.3Q829.8 277.8 833.9 277.1Q838.0 276.5 840.3 278.5ZM748.3 55.0Q747.3 60.8 743.0 65.8Q738.7 70.8 734.2 72.1Q729.6 73.4 727.4 70.2Q725.1 67.0 725.9 61.8Q726.6 56.6 728.9 51.0Q731.2 45.3 735.7 41.7Q740.3 38.2 745.9 36.5Q751.4 34.8 750.4 42.0Q749.4 49.2 748.3 55.0ZM935.5 60.5Q934.9 64.5 933.6 68.5Q932.3 72.5 928.0 73.5Q923.6 74.5 918.4 74.0Q913.3 73.6 913.1 68.6Q912.9 63.6 913.4 59.6Q913.9 55.6 917.0 51.6Q920.0 47.6 924.4 50.2Q928.8 52.8 932.5 54.6Q936.1 56.5 935.5 60.5ZM872.0 232.7Q872.0 230.9 872.4 229.0Q872.8 227.1 875.6 225.6Q878.4 224.1 881.1 224.7Q883.8 225.3 885.3 226.4Q886.7 227.5 887.7 229.3Q888.7 231.0 886.1 232.6Q883.4 234.2 880.5 234.5Q877.7 234.8 874.9 234.7Q872.0 234.6 872.0 232.7ZM742.2 84.2Q742.9 87.3 739.6 88.0Q736.4 88.7 733.9 89.1Q731.5 89.5 728.9 88.3Q726.4 87.0 724.6 84.1Q722.9 81.3 724.3 78.3Q725.8 75.4 729.1 75.1Q732.5 74.9 735.1 75.9Q737.7 77.0 739.6 79.0Q741.5 81.0 742.2 84.2ZM791.6 287.7Q788.2 289.9 784.4 289.1Q780.6 288.3 778.6 285.3Q776.6 282.3 776.5 279.0Q776.3 275.7 778.2 272.9Q780.2 270.2 783.6 268.4Q787.0 266.7 789.4 269.6Q791.8 272.6 793.2 275.2Q794.7 277.9 794.8 281.7Q795.0 285.4 791.6 287.7ZM721.1 19.1Q722.5 21.2 720.6 23.4Q718.7 25.7 715.4 25.4Q712.1 25.1 710.1 24.1Q708.0 23.1 707.0 21.5Q706.0 20.0 706.1 17.9Q706.1 15.9 708.4 14.3Q710.7 12.8 713.7 13.3Q716.6 13.8 718.2 15.4Q719.8 17.0 721.1 19.1ZM637.0 193.6Q636.3 196.8 634.5 200.7Q632.8 204.6 628.6 203.2Q624.3 201.9 620.8 199.9Q617.2 198.0 616.8 194.0Q616.4 190.1 617.5 186.2Q618.6 182.2 622.8 182.1Q627.0 182.0 630.5 183.1Q633.9 184.2 635.8 187.2Q637.8 190.3 637.0 193.6ZM604.7 210.0Q608.5 210.8 610.4 213.1Q612.4 215.4 613.9 218.2Q615.4 221.0 612.8 223.4Q610.1 225.8 606.2 227.2Q602.4 228.6 599.9 225.9Q597.5 223.2 595.4 221.1Q593.3 219.1 593.7 216.0Q594.0 212.8 597.4 211.0Q600.9 209.1 604.7 210.0ZM665.5 132.5Q665.6 130.7 668.1 129.1Q670.5 127.6 673.3 128.5Q676.2 129.3 678.8 130.3Q681.4 131.3 680.7 133.4Q680.0 135.5 678.0 136.8Q676.1 138.1 673.4 139.2Q670.7 140.3 667.7 139.5Q664.7 138.7 665.1 136.6Q665.4 134.4 665.5 132.5ZM639.3 193.6Q638.0 191.8 637.4 189.8Q636.8 187.7 638.3 186.6Q639.8 185.6 642.1 186.6Q644.5 187.5 646.1 189.0Q647.6 190.5 648.8 192.3Q650.0 194.1 649.7 196.0Q649.5 197.8 647.2 197.4Q644.9 197.1 642.8 196.2Q640.7 195.4 639.3 193.6ZM611.7 219.8Q609.1 219.6 606.7 217.9Q604.3 216.2 603.6 212.8Q602.9 209.4 602.9 206.7Q603.0 203.9 604.0 201.3Q605.0 198.7 607.4 200.0Q609.8 201.3 611.6 203.9Q613.3 206.6 613.9 209.7Q614.6 212.8 614.4 216.5Q614.3 220.1 611.7 219.8ZM623.1 180.1Q625.2 182.1 625.5 185.0Q625.7 188.0 625.1 191.3Q624.5 194.6 621.4 194.7Q618.2 194.9 616.0 193.6Q613.8 192.4 610.8 190.6Q607.8 188.7 609.2 185.5Q610.6 182.2 612.6 179.4Q614.5 176.5 617.7 177.3Q620.9 178.1 623.1 180.1ZM667.7 184.0Q665.1 183.6 664.7 180.9Q664.3 178.3 663.7 176.0Q663.1 173.8 664.9 172.1Q666.7 170.4 668.8 169.7Q671.0 169.0 672.5 170.5Q673.9 172.1 674.7 174.0Q675.4 175.9 674.8 178.2Q674.3 180.5 672.3 182.5Q670.3 184.4 667.7 184.0ZM612.4 179.1Q614.0 182.8 612.2 185.7Q610.3 188.6 605.7 188.2Q601.1 187.9 597.8 185.8Q594.5 183.7 590.4 181.4Q586.2 179.0 587.8 176.3Q589.4 173.5 591.5 171.0Q593.5 168.5 598.1 169.7Q602.7 170.8 606.8 173.1Q610.8 175.5 612.4 179.1ZM604.4 200.8Q607.1 202.3 608.8 204.0Q610.6 205.7 611.2 208.2Q611.8 210.7 610.5 213.1Q609.2 215.4 606.6 215.8Q604.0 216.2 602.0 214.7Q599.9 213.3 598.7 211.2Q597.5 209.1 597.3 206.2Q597.2 203.3 599.5 201.3Q601.7 199.3 604.4 200.8ZM604.7 189.3Q604.0 193.6 600.3 196.1Q596.7 198.6 592.4 198.5Q588.1 198.4 585.8 194.9Q583.6 191.3 583.0 187.3Q582.4 183.3 584.5 179.5Q586.6 175.7 590.8 174.9Q594.9 174.1 599.0 175.3Q603.0 176.5 604.3 180.7Q605.5 184.9 604.7 189.3ZM634.9 123.5Q638.1 123.6 638.5 126.6Q638.8 129.7 637.1 132.6Q635.4 135.4 632.9 138.0Q630.5 140.5 627.8 140.1Q625.1 139.8 623.5 138.4Q621.8 137.0 621.4 134.4Q621.0 131.9 623.5 129.5Q626.0 127.2 628.8 125.3Q631.6 123.4 634.9 123.5ZM626.5 139.8Q625.0 136.2 626.6 133.0Q628.2 129.8 630.2 126.8Q632.1 123.7 635.8 124.0Q639.4 124.2 643.4 125.8Q647.4 127.3 646.2 131.4Q645.0 135.6 644.6 139.7Q644.2 143.8 640.1 145.7Q636.0 147.6 632.0 145.5Q628.1 143.5 626.5 139.8ZM554.4 143.0Q555.6 144.9 556.5 147.6Q557.5 150.3 555.8 152.7Q554.2 155.1 551.6 154.0Q549.1 152.9 547.1 152.0Q545.1 151.1 543.7 148.7Q542.3 146.3 543.9 144.3Q545.5 142.3 547.1 140.0Q548.6 137.8 550.9 139.4Q553.2 141.0 554.4 143.0ZM553.8 138.0Q554.4 139.4 553.6 140.2Q552.8 141.0 551.6 140.8Q550.4 140.5 549.2 139.9Q548.0 139.2 547.4 137.9Q546.7 136.7 546.2 135.0Q545.7 133.4 547.1 133.0Q548.5 132.6 550.1 133.0Q551.7 133.3 552.5 134.9Q553.2 136.6 553.8 138.0ZM546.3 132.0Q546.3 133.3 544.9 134.4Q543.6 135.6 541.7 136.1Q539.8 136.6 539.1 135.3Q538.3 134.0 537.2 133.0Q536.0 131.9 537.3 130.5Q538.6 129.1 540.3 128.5Q542.0 128.0 543.8 127.9Q545.6 127.8 545.9 129.2Q546.3 130.6 546.3 132.0ZM598.4 216.3Q599.9 216.5 600.3 217.9Q600.6 219.3 601.3 220.7Q601.9 222.1 600.6 222.5Q599.2 223.0 597.9 223.2Q596.5 223.5 594.9 222.7Q593.4 221.9 593.2 220.4Q593.0 218.8 593.6 217.6Q594.1 216.4 595.5 216.3Q596.9 216.2 598.4 216.3ZM331.8 113.2Q332.9 113.3 332.9 114.7Q332.9 116.1 332.7 117.1Q332.6 118.2 332.0 119.1Q331.3 120.1 330.4 119.6Q329.5 119.0 329.0 118.3Q328.4 117.7 328.1 116.7Q327.8 115.6 328.5 114.8Q329.1 114.0 329.9 113.6Q330.7 113.1 331.8 113.2ZM387.5 223.9Q386.7 222.5 385.8 220.6Q384.9 218.8 386.6 217.8Q388.3 216.8 389.7 216.6Q391.2 216.4 392.4 217.2Q393.6 218.0 394.7 219.4Q395.8 220.8 395.4 222.8Q395.1 224.8 393.4 225.8Q391.7 226.8 390.0 226.1Q388.3 225.3 387.5 223.9ZM403.7 107.9Q405.0 108.4 405.9 109.9Q406.7 111.4 405.8 113.4Q404.9 115.4 403.3 116.0Q401.7 116.7 400.0 117.4Q398.3 118.0 398.1 116.1Q397.9 114.1 397.5 112.6Q397.2 111.0 398.4 109.5Q399.5 108.1 401.0 107.8Q402.4 107.5 403.7 107.9ZM343.6 257.0Q343.9 256.1 344.7 255.3Q345.6 254.5 346.6 254.8Q347.6 255.1 348.3 256.0Q349.0 256.9 349.0 258.1Q349.0 259.4 347.9 259.9Q346.8 260.5 345.9 260.7Q345.0 261.0 344.2 260.4Q343.4 259.9 343.3 258.9Q343.3 257.9 343.6 257.0ZM567.8 264.1Q565.9 262.7 564.7 260.9Q563.5 259.0 564.4 257.1Q565.3 255.1 567.0 254.4Q568.7 253.6 570.5 254.0Q572.2 254.4 573.6 255.6Q574.9 256.8 574.8 258.5Q574.7 260.2 574.0 261.9Q573.3 263.5 571.5 264.4Q569.6 265.4 567.8 264.1ZM513.2 272.7Q511.9 271.1 512.6 269.2Q513.3 267.2 514.8 266.4Q516.3 265.6 518.1 265.3Q519.8 265.0 521.5 266.4Q523.3 267.7 522.7 269.8Q522.1 272.0 521.7 274.1Q521.4 276.2 519.4 275.7Q517.5 275.1 516.0 274.7Q514.5 274.3 513.2 272.7ZM245.5 85.0Q243.3 86.1 241.2 86.3Q239.2 86.4 236.9 86.1Q234.5 85.8 234.6 83.8Q234.6 81.8 235.8 79.9Q237.0 78.1 239.3 77.1Q241.6 76.2 244.2 76.2Q246.7 76.2 247.3 78.2Q247.8 80.1 247.8 82.0Q247.8 84.0 245.5 85.0ZM362.8 90.9Q364.0 91.7 365.0 93.0Q366.0 94.3 365.2 95.5Q364.4 96.7 363.6 98.2Q362.9 99.7 361.4 98.7Q359.9 97.7 359.1 96.7Q358.3 95.6 358.1 94.4Q357.8 93.1 358.0 91.4Q358.2 89.6 359.9 89.9Q361.6 90.1 362.8 90.9ZM220.1 2.7Q220.1 3.9 219.2 4.5Q218.2 5.1 217.4 5.8Q216.5 6.4 215.7 5.8Q214.8 5.3 214.1 4.5Q213.4 3.6 213.8 2.4Q214.1 1.2 215.1 0.5Q216.1 -0.3 217.0 0.3Q218.0 0.9 219.0 1.2Q220.1 1.5 220.1 2.7ZM419.7 105.9Q418.6 106.3 417.3 106.1Q415.9 105.9 415.2 105.2Q414.4 104.5 414.2 103.7Q414.0 102.9 414.9 102.4Q415.8 101.8 417.0 101.9Q418.2 102.0 419.0 102.4Q419.8 102.8 420.2 103.4Q420.5 104.0 420.6 104.8Q420.8 105.5 419.7 105.9ZM236.6 38.2Q236.2 39.4 234.8 39.1Q233.4 38.9 232.2 38.0Q231.1 37.2 229.9 35.8Q228.7 34.4 229.3 33.2Q229.8 32.0 230.7 31.1Q231.6 30.2 233.1 30.9Q234.6 31.6 235.3 33.0Q235.9 34.4 236.5 35.7Q237.0 37.0 236.6 38.2ZM293.7 81.4Q295.0 80.8 295.7 82.3Q296.4 83.7 297.3 85.0Q298.2 86.3 297.0 87.1Q295.8 87.9 294.7 88.0Q293.5 88.2 292.4 87.8Q291.2 87.5 290.1 86.4Q288.9 85.3 289.0 83.7Q289.0 82.1 290.7 82.0Q292.3 82.0 293.7 81.4Z"/>
<path fill="none" stroke="#f2d07d" stroke-width=".8" d="M700.7 170.1Q695.8 173.8 690.8 177.3M867.9 74.1Q864.1 82.2 863.3 91.1M460.8 147.2Q466.3 151.0 471.8 154.7M364.6 229.2Q365.0 235.9 368.7 241.5M558.5 71.7Q563.8 63.3 568.4 54.5M208.6 99.6Q202.6 108.6 194.1 115.3M765.8 124.0Q759.0 127.1 751.4 127.6M487.4 268.5Q496.2 264.5 504.2 259.0M924.0 60.8Q924.9 66.7 927.7 71.9M208.4 115.5Q211.1 123.0 210.4 130.9M287.3 29.5Q279.7 26.8 272.6 22.9M469.9 188.4Q470.0 178.9 468.5 169.6M320.3 240.4Q326.9 242.2 333.6 240.8M701.2 64.3Q696.4 59.5 690.4 56.4M534.7 48.1Q541.3 47.1 546.2 42.5M452.7 194.6Q461.8 192.8 469.9 188.4M684.0 133.6Q685.1 143.7 683.5 153.7M417.6 230.3Q425.0 223.3 434.3 219.1M229.5 102.7Q229.7 112.4 228.5 122.0M380.7 297.7Q389.4 292.3 396.3 284.8M851.4 52.5Q845.6 47.0 839.3 42.1M839.6 283.2Q833.6 283.3 828.1 281.1M184.8 280.8Q189.8 287.2 197.0 290.7M499.2 221.8Q498.4 229.2 497.4 236.5M614.9 78.9Q609.3 72.6 602.8 67.3M359.1 57.4Q356.1 52.2 353.2 47.0M806.4 131.9Q812.8 127.2 818.5 121.7M789.3 177.5Q793.0 172.5 794.9 166.5M504.2 290.1Q503.4 283.4 504.5 276.7M487.8 106.1Q490.8 111.5 496.3 114.3M608.7 18.4Q613.2 22.7 616.2 28.1M789.2 204.1Q780.2 205.2 771.3 203.3M335.2 35.5Q325.5 37.2 315.6 37.3M417.6 230.3Q409.5 223.0 400.0 217.5M766.4 71.0Q760.5 73.9 753.9 74.4M535.8 61.1Q531.2 65.3 525.1 66.3M674.7 63.4Q674.3 58.1 671.0 53.9M868.8 118.5Q874.2 123.6 881.0 126.4M509.8 124.6Q507.9 117.5 507.9 110.2M342.1 47.5Q334.1 45.6 326.5 42.7M755.0 277.6Q755.2 286.5 756.3 295.3M859.2 166.4Q861.5 171.4 865.5 175.2M654.9 226.9Q655.7 216.2 655.9 205.4M450.1 281.1Q443.6 273.0 439.5 263.4M185.4 89.6Q188.6 95.6 194.5 98.9M401.4 271.0Q408.7 276.1 414.3 283.0M839.0 160.9Q842.2 165.8 846.4 169.9M509.8 124.6Q502.4 120.3 496.3 114.3M751.3 246.6Q748.7 236.4 749.9 225.9M677.8 111.1Q670.9 111.6 664.2 113.4M457.8 164.5Q454.7 171.8 453.3 179.6M373.9 57.2Q368.2 62.4 363.2 68.2M718.1 106.4Q722.3 102.7 727.8 101.7M255.0 41.8Q249.1 47.8 241.4 51.4M478.6 293.5Q483.0 298.1 485.2 304.0M667.8 211.1Q671.6 206.8 675.8 203.0M815.8 15.6Q819.0 21.7 824.8 25.5M281.6 93.8Q284.2 101.2 288.4 107.9M801.3 223.1Q806.4 221.4 811.8 220.9M187.6 46.7Q176.2 48.4 165.1 51.5M335.2 35.5Q342.3 37.0 349.5 36.0M822.3 255.5Q829.9 253.2 836.6 249.0M425.2 193.8Q419.0 195.8 412.6 194.6M300.6 33.8Q306.3 29.1 310.3 22.8M836.2 107.7Q830.8 110.8 824.5 111.3M815.8 15.6Q812.8 9.4 809.3 3.4M549.6 173.9Q546.4 178.9 541.3 181.9M799.4 197.4Q807.2 193.7 815.8 193.8M469.8 277.6Q477.3 278.4 484.7 279.7M552.3 53.5Q553.7 63.2 558.5 71.7M861.5 60.8Q855.7 57.5 851.4 52.5M864.7 33.8Q858.0 32.5 853.0 27.8M891.3 53.2Q896.1 60.7 898.9 69.1M778.9 21.2Q776.7 15.4 773.1 10.2M315.2 101.6Q312.7 96.0 310.6 90.2M321.5 81.0Q330.0 77.6 339.2 76.3M851.0 16.2Q852.8 10.4 851.1 4.6M766.2 112.1Q762.0 115.6 756.8 117.5M660.4 155.2Q659.4 149.8 660.3 144.4M819.5 240.4Q824.7 241.7 830.0 240.9M684.0 133.6Q691.7 135.6 699.6 134.5M370.4 92.1Q377.5 88.1 385.2 85.6M721.9 237.4Q724.9 241.6 726.4 246.5M617.1 131.1Q610.5 126.2 604.7 120.4M768.0 28.4Q766.9 23.2 763.1 19.4M460.8 147.2Q452.9 143.4 446.9 137.2M705.4 36.4Q709.1 40.9 710.8 46.5M353.4 298.2Q359.7 291.1 366.6 284.6M322.8 93.8Q316.8 91.6 310.6 90.2M843.6 203.2Q842.7 195.2 841.0 187.3M755.0 277.6Q753.6 268.7 752.9 259.7M374.4 30.6Q369.5 24.1 365.1 17.3M679.0 176.9Q684.9 177.6 690.8 177.3M479.0 178.4Q479.3 186.9 482.6 194.8M167.4 268.9Q166.5 258.5 168.5 248.3M373.9 207.3Q379.6 205.4 385.5 204.2M934.9 273.7Q934.3 265.2 931.7 257.0M692.0 293.8Q697.1 292.8 702.2 293.7M455.7 108.2Q457.3 114.0 459.8 119.4M189.6 258.6Q197.5 258.1 205.4 258.0M834.8 87.4Q844.2 88.9 853.8 88.1M374.7 80.4Q373.1 86.4 370.4 92.1M316.2 50.0Q322.4 47.8 326.5 42.7M424.1 249.0Q417.3 245.1 409.8 243.1M749.9 225.9Q747.1 219.5 748.1 212.7M649.4 89.9Q643.9 89.4 640.2 85.4M531.3 94.4Q536.3 93.3 541.4 93.4M801.8 63.6Q805.6 73.3 809.5 83.0M615.1 206.4Q622.1 206.0 628.6 208.7M762.3 161.9Q755.7 160.1 748.8 160.2M189.9 70.6Q189.4 80.5 185.4 89.6M439.5 65.9Q432.4 70.2 424.2 71.1M674.1 159.4Q679.3 157.4 683.5 153.7M880.4 99.6Q886.2 97.4 890.1 92.5M702.2 293.7Q696.5 288.9 691.5 283.4M194.1 115.3Q187.6 111.2 179.9 110.5M478.6 293.5Q485.8 291.9 492.8 294.2M345.1 265.6Q352.5 270.2 359.9 274.6M519.9 248.4Q521.2 255.2 523.8 261.6M4.4 8.6Q1.6 1.0 -0.2 -6.9M629.7 108.5Q636.6 111.9 642.2 117.1M300.0 99.3Q304.0 93.2 310.6 90.2M623.5 235.4Q628.0 232.9 630.9 228.6M823.4 92.8Q815.7 89.0 809.5 83.0M809.3 3.4Q801.9 3.0 794.7 4.6M758.3 135.6Q763.6 135.3 769.0 135.1M664.1 46.0Q662.9 40.6 662.1 35.0M884.4 167.5Q884.8 174.4 886.8 181.0M274.0 49.8Q279.6 46.2 285.8 43.8M595.4 211.4Q593.4 201.4 588.8 192.3M479.0 178.4Q481.7 170.7 482.6 162.6M483.0 130.4Q477.0 135.8 471.2 141.6M848.1 98.4Q857.0 102.9 866.7 104.8M813.8 204.4Q806.1 201.9 799.4 197.4M910.9 195.9Q906.4 203.7 905.5 212.7M905.3 22.8Q905.7 17.5 906.9 12.4M583.3 59.2Q579.2 52.2 575.5 44.9M924.1 197.6Q930.2 203.9 936.2 210.2M729.4 229.8Q731.9 235.3 736.8 238.6M507.9 110.2Q502.4 113.1 496.3 114.3M575.5 44.9Q571.4 49.3 568.4 54.5M567.7 198.4Q578.1 194.6 588.8 192.3M549.6 173.9Q553.5 169.5 554.4 163.7M626.5 34.4Q633.4 33.8 639.8 31.0M422.6 91.7Q419.0 86.1 414.7 80.8M902.8 152.2Q901.3 145.8 897.8 140.3M926.3 88.1Q931.3 81.4 938.2 76.6M538.0 266.2Q543.8 268.4 549.9 269.6M878.5 194.4Q876.9 187.9 872.1 183.3M591.8 73.1Q597.2 70.0 602.8 67.3M339.1 24.4Q335.7 20.1 335.3 14.6M702.2 293.7Q708.6 294.1 714.9 293.2M161.8 38.7Q168.5 36.7 174.1 32.5M880.3 233.9Q886.8 239.9 895.1 243.0M681.9 7.2Q674.8 7.1 668.4 10.2M409.8 11.6Q414.8 15.2 417.7 20.6M565.8 113.0Q564.7 104.9 565.1 96.8M811.8 220.9Q812.1 227.4 810.5 233.6M452.7 194.6Q446.9 195.4 441.1 194.9M768.0 28.4Q767.0 34.8 768.6 41.1M814.2 174.0Q809.9 180.2 807.8 187.4M571.0 21.6Q574.9 28.8 580.6 34.8M296.6 53.5Q290.3 56.6 284.1 59.8M910.9 195.9Q901.9 193.4 892.6 192.6M658.0 13.1Q662.9 10.6 668.4 10.2M583.3 59.2Q575.3 58.5 568.4 54.5M662.1 186.0Q670.3 190.4 679.5 191.7M872.5 24.9Q878.3 32.6 885.9 38.5M773.1 86.6Q778.4 82.4 781.0 76.0M849.6 64.4Q849.8 58.3 851.4 52.5M548.6 118.0Q548.8 126.4 549.2 134.8M566.2 253.8Q563.8 260.1 560.7 266.2M655.9 205.4Q650.5 202.1 646.5 197.2M296.6 53.5Q299.1 48.8 301.8 44.1M756.3 295.3Q750.5 295.2 745.0 293.2M545.8 151.3Q542.2 145.7 536.6 141.9M595.7 55.8Q602.8 51.8 607.8 45.3M648.8 299.6Q654.3 300.4 659.8 299.4M397.9 196.2Q405.0 189.5 411.0 181.9M402.8 169.5Q405.6 176.6 411.0 181.9M905.4 241.4Q904.0 247.0 904.9 252.6M643.4 286.5Q644.2 281.0 642.9 275.6M689.7 244.9Q688.6 237.9 685.3 231.5M788.7 243.7Q791.7 252.8 795.9 261.3M823.6 231.1Q816.6 227.4 811.8 220.9M686.0 99.3Q681.3 104.8 677.8 111.1M891.3 53.2Q900.1 56.7 907.1 63.1M873.5 6.8Q867.9 0.4 861.5 -5.0M839.0 160.9Q833.9 159.5 829.2 157.3M341.0 86.9Q347.1 86.8 351.8 90.5M919.2 229.2Q925.0 224.0 930.9 218.9M519.9 248.4Q520.8 241.0 519.1 233.8M516.1 285.0Q512.4 294.8 508.0 304.4M766.4 71.0Q764.7 63.1 760.5 56.2M732.9 259.5Q736.7 266.2 742.7 271.2M868.8 118.5Q867.0 111.8 866.7 104.8M860.7 244.3Q853.8 244.4 847.1 246.2M538.6 169.3Q534.7 176.0 530.5 182.4M779.4 171.3Q771.9 173.8 764.0 173.4M868.8 118.5Q867.2 123.5 866.4 128.7M386.8 102.1Q391.7 105.2 393.5 110.7M726.1 130.0Q729.0 136.7 731.9 143.5M227.1 244.7Q230.5 252.2 234.4 259.4M813.5 154.4Q813.1 147.7 812.1 141.0M159.9 22.0Q167.0 27.3 174.1 32.5M399.7 25.3Q393.5 29.0 386.3 29.2M449.6 125.7Q448.6 131.5 446.9 137.2M579.7 217.8Q584.5 225.5 590.2 232.6M327.8 260.3Q317.9 255.9 307.4 252.9M386.8 102.1Q378.2 97.7 370.4 92.1M468.5 169.6Q471.0 162.3 471.8 154.7M780.6 156.6Q789.5 153.2 799.0 152.5M861.5 -5.0Q860.1 2.9 861.4 10.8M867.9 74.1Q877.2 72.9 885.9 69.4M450.9 224.0Q446.3 216.5 441.2 209.4M394.8 182.7Q397.1 189.3 397.9 196.2M710.2 150.2Q702.6 148.9 695.0 147.7M603.0 180.3Q608.0 184.3 614.2 186.1M396.6 98.2Q392.4 101.9 386.8 102.1M687.4 204.3Q688.6 195.7 688.5 187.0M726.7 3.2Q723.0 8.0 718.1 11.5M567.7 34.8Q564.1 39.2 561.7 44.4M840.9 54.1Q841.7 47.9 839.3 42.1M440.1 307.0Q448.1 300.5 454.4 292.3M795.9 261.3Q790.6 259.5 785.0 258.9M581.4 83.5Q588.1 85.7 595.1 87.2M843.6 203.2Q844.4 209.9 848.1 215.6M919.2 229.2Q912.8 236.0 905.4 241.4M873.5 6.8Q874.2 15.9 872.5 24.9M638.5 97.8Q630.4 99.0 622.2 99.1M572.8 276.0Q569.6 281.3 565.1 285.5M680.0 220.2Q676.5 229.2 670.3 236.5M854.2 40.6Q858.2 46.1 863.3 50.6M886.1 80.7Q888.2 86.6 890.1 92.5M759.5 101.9Q766.4 99.4 773.7 100.5M689.5 112.9Q690.5 118.2 690.4 123.5M321.8 224.3Q329.0 231.6 333.6 240.8M603.2 193.1Q595.9 194.0 588.8 192.3M653.8 165.6Q660.8 166.4 667.4 169.0M519.9 248.4Q528.1 242.8 537.3 239.4M414.7 80.8Q413.4 90.9 409.9 100.4M538.6 169.3Q533.4 167.8 529.2 164.6M723.0 172.4Q720.4 180.0 717.0 187.3M794.9 166.5Q798.8 173.3 799.1 181.1M718.1 37.3Q726.0 38.1 733.9 38.9M718.1 11.5Q716.3 6.7 716.1 1.6M778.9 276.4Q783.1 273.4 786.6 269.6M567.5 136.4Q569.7 130.9 572.0 125.5M658.0 13.1Q655.6 8.2 656.7 2.8M762.7 285.1Q765.3 278.1 767.3 270.9M591.1 98.8Q594.1 93.4 595.1 87.2M425.2 193.8Q430.5 186.0 438.4 181.0M726.7 3.2Q735.4 0.2 744.7 -0.1M706.1 1.2Q699.9 4.9 694.7 10.0M713.1 23.2Q714.1 30.8 718.1 37.3M556.7 230.9Q549.6 229.2 542.4 230.5M335.3 14.6Q326.6 16.8 317.8 15.4M773.5 252.6Q780.1 254.2 785.0 258.9M789.2 204.1Q793.5 208.7 798.0 213.2M744.7 38.3Q740.8 45.2 736.1 51.6M566.0 166.8Q565.2 171.9 564.7 177.0M676.5 86.5Q686.5 85.9 696.5 86.2M644.8 14.9Q638.5 20.0 631.6 24.3M592.4 160.5Q588.9 165.8 587.7 172.0M862.6 139.8Q868.1 143.4 870.6 149.5M454.4 292.3Q451.4 287.0 450.1 281.1M445.5 96.4Q450.3 102.5 455.7 108.2M567.2 235.1Q561.3 234.6 556.7 230.9M330.9 57.1Q338.9 59.0 345.6 63.6M187.6 46.7Q179.4 40.9 174.1 32.5M307.4 252.9Q310.8 259.8 314.0 266.8M643.4 286.5Q636.3 288.6 629.2 290.8M850.2 229.2Q856.7 228.9 863.1 228.0M913.4 268.5Q908.2 267.2 903.8 264.2M700.7 170.1Q706.9 172.2 712.7 175.1M432.8 3.8Q428.8 9.0 426.8 15.2M861.4 10.8Q860.4 16.0 861.6 21.2M642.8 168.4Q648.1 166.4 653.8 165.6M596.4 270.4Q598.7 265.4 603.4 262.6M658.0 13.1Q661.3 17.9 664.3 22.9M891.2 157.9Q894.6 149.2 897.8 140.3M534.7 48.1Q544.0 48.9 552.3 53.5M673.3 101.2Q664.2 101.8 655.2 101.5M310.3 58.4Q320.6 57.1 330.9 57.1M740.7 135.9Q736.8 140.4 731.9 143.5M908.2 142.9Q902.6 143.4 897.8 140.3M806.1 92.8Q806.9 87.6 809.5 83.0M689.5 112.9Q687.9 106.1 686.0 99.3M375.2 103.3Q380.8 100.9 386.8 102.1M360.1 97.4Q358.2 88.7 359.6 79.9M615.1 206.4Q619.2 198.5 625.8 192.4M285.1 -5.7Q278.3 2.4 269.8 8.5M729.8 116.2Q722.5 117.0 715.5 119.2M490.1 252.5Q494.5 244.9 497.4 236.5M730.1 274.7Q729.2 282.0 729.2 289.4M409.3 35.0Q412.4 27.1 417.7 20.6M497.9 156.8Q492.8 149.5 485.2 144.9M401.4 271.0Q399.4 278.1 396.3 284.8M227.3 72.3Q223.7 80.9 217.1 87.5M732.9 259.5Q736.0 253.9 739.9 248.7M670.0 276.5Q674.9 281.2 681.3 283.4M227.1 244.7Q224.3 254.8 219.6 264.1M459.8 119.4Q453.9 121.2 449.6 125.7M754.3 181.4Q760.5 187.1 763.2 195.0M745.7 169.8Q743.7 176.8 742.6 184.1M829.0 202.8Q827.9 208.0 829.3 213.2M689.5 112.9Q683.4 113.5 677.8 111.1M469.8 277.6Q478.5 272.8 487.4 268.5M814.7 264.5Q815.6 274.6 815.4 284.7M912.2 41.6Q916.0 45.8 921.0 48.5M351.2 25.3Q358.3 21.5 365.1 17.3M861.8 257.9Q853.6 253.2 847.1 246.2M813.7 72.0Q820.9 67.5 828.0 62.8M725.4 215.2Q729.2 206.1 733.6 197.3M547.1 290.6Q556.2 288.6 565.1 285.5M702.2 293.7Q700.1 298.6 698.0 303.4M603.2 193.1Q603.9 186.7 603.0 180.3M687.3 261.9Q678.0 268.5 670.0 276.5M635.5 41.5Q635.8 46.6 637.8 51.4M884.6 146.1Q881.0 150.1 880.9 155.6M345.1 265.6Q338.1 268.7 331.4 272.2M648.8 299.6Q645.4 293.3 643.4 286.5M667.8 211.1Q667.1 203.9 663.5 197.7M783.2 41.9Q778.9 37.9 778.0 32.0M602.6 141.0Q608.6 147.4 613.6 154.7M184.8 280.8Q188.5 270.0 189.6 258.6M708.8 78.1Q714.9 70.1 720.4 61.7M690.4 220.4Q692.3 211.4 697.7 204.0M860.7 244.3Q871.1 240.3 880.3 233.9M758.3 135.6Q749.5 135.8 740.7 135.9M670.3 236.5Q661.8 232.9 654.9 226.9M759.5 101.9Q755.0 94.7 748.6 89.1M274.2 112.6Q266.2 106.3 257.5 100.8M288.4 107.9Q294.7 112.8 300.8 117.7M929.9 144.1Q925.7 141.1 921.1 138.9M778.9 276.4Q781.8 281.3 786.4 284.7M888.0 227.6Q890.2 235.9 895.1 243.0M548.6 118.0Q552.0 112.8 555.2 107.4M922.5 164.8Q918.5 171.3 917.5 179.0M863.3 91.1Q866.4 97.6 866.7 104.8M651.5 113.3Q649.0 120.9 649.9 128.9M867.9 74.1Q860.5 76.1 853.0 77.8M806.5 246.9Q800.8 253.8 795.9 261.3M415.6 64.5Q420.1 67.6 424.2 71.1M851.0 16.2Q856.1 13.3 861.4 10.8M203.8 20.0Q214.7 16.1 224.3 9.6M855.6 186.1Q860.9 181.0 865.5 175.2M715.3 267.9Q712.6 274.1 706.9 277.9M905.5 212.7Q902.5 217.2 903.1 222.5M650.2 39.1Q656.3 37.4 662.1 35.0M567.5 136.4Q574.5 132.7 581.7 129.6M884.4 167.5Q887.8 162.7 891.2 157.9M829.7 75.7Q828.4 84.9 823.4 92.8M670.0 276.5Q671.3 270.8 669.4 265.3M204.1 274.8Q206.0 266.5 205.4 258.0M815.4 284.7Q821.3 281.3 828.1 281.1M797.7 46.7Q792.9 49.3 787.9 51.4M680.0 220.2Q685.2 220.0 690.4 220.4M910.8 2.5Q914.7 5.9 919.4 7.8M423.5 208.5Q429.7 213.0 434.3 219.1M488.7 206.5Q493.8 203.2 497.0 198.0M919.4 217.2Q911.2 219.7 903.1 222.5M888.0 227.6Q893.2 219.1 895.6 209.3M555.2 107.4Q561.1 109.0 565.8 113.0M881.4 17.9Q883.0 12.6 885.9 7.9M822.1 131.4Q828.4 134.5 834.4 138.3M469.5 262.6Q461.0 255.0 454.9 245.4M795.1 140.4Q797.2 146.4 799.0 152.5M297.0 20.5Q300.0 16.0 303.4 11.7M483.0 130.4Q477.3 126.8 471.2 124.0M382.1 230.2Q374.6 234.9 368.7 241.5M627.8 174.9Q626.5 183.6 625.8 192.4M701.3 191.8Q702.1 186.3 702.3 180.7M857.0 199.2Q850.1 191.8 841.0 187.3M357.1 247.0Q365.0 250.5 373.1 253.5M488.7 206.5Q486.4 200.2 482.6 194.8M765.3 259.2Q770.4 260.4 774.5 263.6M269.8 8.5Q271.7 1.4 270.9 -5.9M726.4 246.5Q733.0 248.4 739.9 248.7M629.7 148.6Q634.1 143.2 636.0 136.6M713.1 23.2Q717.0 18.0 718.1 11.5M650.2 39.1Q644.4 45.6 637.8 51.4M420.8 164.2Q414.5 172.3 411.0 181.9M833.1 97.5Q825.6 99.2 818.6 102.2M748.8 160.2Q746.6 164.8 745.7 169.8M557.8 245.8Q553.4 243.4 548.8 241.3M629.3 278.5Q626.6 271.3 621.9 265.3M758.7 206.5Q754.7 199.2 751.4 191.5M736.8 238.6Q737.7 243.9 739.9 248.7M401.4 271.0Q394.5 271.5 387.7 271.7M930.3 25.6Q928.5 31.2 925.3 36.2M859.0 216.0Q860.0 222.3 863.1 228.0M575.5 44.9Q584.4 44.0 593.3 45.5M360.5 37.7Q359.1 47.5 359.1 57.4M468.5 169.6Q464.0 165.3 457.8 164.5M588.8 192.3Q590.5 187.1 590.0 181.7M396.6 98.2Q399.8 91.8 403.1 85.4M745.7 169.8Q754.4 173.5 764.0 173.4M721.9 237.4Q722.0 229.6 718.5 222.7M650.9 140.9Q647.6 146.6 646.1 153.0M621.5 19.3Q615.0 20.4 608.7 18.4M809.7 49.7Q817.8 51.4 826.1 52.0M351.2 25.3Q345.3 23.0 339.1 24.4M614.9 78.9Q613.8 88.6 609.1 97.0M523.6 204.6Q534.4 206.9 544.7 211.0M349.7 287.2Q342.2 293.7 337.4 302.4M748.8 160.2Q742.8 156.6 735.9 155.6M733.6 197.3Q740.7 199.2 747.3 202.4M414.3 283.0Q415.1 276.8 413.6 270.8M881.9 301.1Q889.6 299.3 896.8 296.1M504.2 259.0Q504.2 251.5 508.0 245.0M583.3 59.2Q587.8 52.0 593.3 45.5M863.3 50.6Q863.8 42.2 864.7 33.8M414.3 283.0Q423.1 288.3 429.5 296.3M548.6 118.0Q557.2 115.6 565.8 113.0M522.2 173.7Q526.3 169.6 529.2 164.6M592.4 160.5Q595.2 156.1 597.8 151.5M264.5 280.1Q269.3 271.8 271.1 262.3M936.0 37.5Q931.4 32.4 930.3 25.6M528.1 152.5Q526.0 147.7 523.6 143.0M913.4 297.9Q917.6 294.3 923.0 292.8M349.5 36.0Q351.4 41.4 353.2 47.0M626.5 34.4Q620.3 35.0 615.6 39.0M855.6 186.1Q861.0 194.0 868.0 200.4M520.3 106.0Q523.3 110.5 522.6 115.9M591.8 73.1Q593.2 64.4 595.7 55.8M888.0 227.6Q884.4 231.0 880.3 233.9M605.8 299.5Q611.0 297.5 613.9 292.7M277.3 71.8Q279.8 65.3 284.1 59.8M904.6 106.0Q911.1 103.1 918.2 103.5M855.0 112.4Q849.8 106.3 848.1 98.4M547.1 290.6Q546.8 279.9 549.9 269.6M520.3 106.0Q529.8 106.6 539.2 105.3M905.5 212.7Q900.9 210.0 895.6 209.3M251.5 260.3Q256.9 270.9 264.5 280.1M924.1 197.6Q924.5 192.0 925.6 186.5M609.6 271.2Q616.1 269.0 621.9 265.3M659.8 299.4Q659.0 291.1 661.7 283.2M350.9 12.0Q343.1 13.2 335.3 14.6M822.3 255.5Q824.6 247.4 830.0 240.9M680.0 220.2Q677.6 211.7 675.8 203.0M751.4 191.5Q749.0 196.8 747.3 202.4M769.0 135.1Q774.0 130.6 778.9 126.0M507.9 110.2Q514.6 109.5 520.3 106.0M705.5 13.3Q710.8 7.5 716.1 1.6M549.2 134.8Q553.8 131.4 559.4 130.2M384.2 248.5Q376.8 244.2 368.7 241.5M834.4 138.3Q834.0 129.0 830.4 120.5M335.3 14.6Q341.1 8.3 346.8 1.8M409.8 11.6Q408.9 5.8 405.0 1.5M218.9 44.6Q217.7 36.6 216.2 28.5M749.9 225.9Q744.6 233.6 736.8 238.6M409.8 11.6Q415.7 9.7 421.2 6.8M487.8 106.1Q479.7 108.1 471.4 107.4M718.5 222.7Q714.0 219.7 708.5 220.4M747.9 101.1Q746.3 108.5 745.8 116.1M725.2 90.8Q731.0 93.0 737.1 93.5M781.5 62.4Q777.3 56.3 771.8 51.5M806.5 246.9Q814.8 250.5 822.3 255.5M928.5 112.6Q933.4 108.1 938.8 104.3M357.1 247.0Q348.0 251.7 337.9 253.8M552.3 53.5Q547.5 59.3 544.9 66.4M482.4 93.5Q471.3 93.6 460.8 97.0M718.1 11.5Q726.1 9.7 734.3 11.1M899.9 33.6Q893.2 37.0 885.9 38.5M789.2 204.1Q783.8 206.6 780.3 211.3M523.6 143.0Q530.3 143.9 536.6 141.9M251.5 260.3Q243.1 257.9 234.4 259.4M890.9 265.0Q897.3 262.7 903.8 264.2M339.1 24.4Q344.8 18.0 350.9 12.0M762.3 161.9Q761.0 154.7 757.7 148.2M510.9 83.1Q514.7 88.0 520.0 91.2M730.5 24.0Q735.3 25.5 740.3 26.2M932.9 176.6Q929.5 181.8 925.6 186.5M686.0 99.3Q679.5 99.2 673.3 101.2M867.9 74.1Q877.0 77.5 886.1 80.7M730.5 24.0Q733.7 17.9 734.3 11.1M315.2 101.6Q319.8 105.4 325.7 106.6M577.2 170.3Q571.7 168.2 566.0 166.8M886.1 80.7Q892.3 81.4 897.7 84.5M679.5 191.7Q676.2 196.9 675.8 203.0M252.7 11.5Q254.1 1.3 257.7 -8.5M721.1 51.6Q715.2 50.4 710.8 46.5M806.4 131.9Q801.6 137.2 795.1 140.4M517.3 185.9Q520.3 180.1 522.2 173.7M345.1 265.6Q342.6 259.0 337.9 253.8M913.4 268.5Q911.5 277.1 908.7 285.4M623.5 235.4Q618.0 233.3 612.1 232.5M433.0 81.5Q423.9 79.8 414.7 80.8M708.8 78.1Q708.0 86.3 703.7 93.3M411.9 216.1Q410.1 210.5 407.0 205.5M905.3 22.8Q901.6 18.9 897.1 15.9M745.8 116.1Q742.6 120.6 737.7 123.3M412.6 255.6Q403.4 258.0 393.9 257.7M310.3 58.4Q305.7 51.5 301.8 44.1M677.8 111.1Q685.2 116.3 690.4 123.5M930.9 218.9Q929.3 226.7 928.5 234.7M629.5 128.7Q634.6 121.5 642.2 117.1M612.9 172.3Q614.1 179.1 614.2 186.1M737.1 282.3Q739.1 276.4 742.7 271.2M813.2 35.9Q820.2 32.0 824.8 25.5M751.4 127.6Q744.4 126.1 737.7 123.3M407.5 46.1Q413.5 45.0 417.9 40.9M839.6 283.2Q836.0 289.6 833.5 296.4M629.9 257.1Q632.2 262.7 632.3 268.8M287.5 269.7Q282.2 276.8 278.8 285.1M592.4 160.5Q589.8 156.1 587.0 151.6M531.4 78.2Q536.9 85.4 541.4 93.4M411.0 181.9Q410.9 188.4 412.6 194.6M786.4 284.7Q796.1 281.7 806.0 279.6M922.2 246.9Q914.1 243.1 905.4 241.4M684.1 300.0Q681.5 291.9 681.3 283.4M4.4 8.6Q11.3 0.6 19.0 -6.6M640.2 262.0Q643.3 268.5 642.9 275.6M522.6 115.9Q530.4 122.1 536.3 130.3M394.8 10.2Q398.2 17.4 399.7 25.3M407.0 205.5Q404.2 211.9 400.0 217.5M255.0 41.8Q243.8 40.3 233.6 35.3M254.2 26.4Q263.1 22.9 272.6 22.9M801.4 270.0Q794.0 270.7 786.6 269.6M605.6 33.6Q610.0 37.4 615.6 39.0M666.8 251.9Q671.6 246.6 678.2 243.7M444.8 253.0Q444.9 244.2 448.2 235.9M254.2 26.4Q248.5 23.0 242.2 20.7M733.9 38.9Q739.4 40.2 744.7 38.3M379.2 282.4Q383.8 277.4 387.7 271.7M274.2 112.6Q281.4 110.6 288.4 107.9M729.8 116.2Q724.1 111.2 718.1 106.4M897.1 15.9Q890.9 12.8 885.9 7.9M593.5 110.3Q599.3 115.0 604.7 120.4M853.0 77.8Q858.9 83.9 863.3 91.1M528.1 152.5Q536.9 151.7 545.8 151.3M885.9 38.5Q882.6 45.5 878.1 51.8M839.6 283.2Q840.3 275.3 843.4 268.0M386.3 29.2Q390.5 33.5 395.7 36.6M469.9 188.4Q469.2 196.2 467.8 203.9M924.1 197.6Q934.4 197.7 944.2 200.4M360.5 37.7Q358.4 43.5 353.2 47.0M578.0 159.3Q583.6 156.7 587.0 151.6M532.9 114.0Q536.2 121.8 536.3 130.3M592.4 160.5Q598.6 160.8 604.5 159.1M843.6 203.2Q849.8 199.6 857.0 199.2M421.2 6.8Q417.8 13.2 417.7 20.6M710.4 163.8Q705.6 162.0 701.7 158.5M670.0 276.5Q663.2 275.3 656.7 273.2M926.4 129.8Q928.0 137.0 929.9 144.1M519.1 162.6Q524.4 161.8 529.2 164.6M662.1 186.0Q656.1 185.3 651.3 181.6M326.7 20.1Q330.3 16.2 335.3 14.6M635.5 41.5Q630.8 38.2 626.5 34.4M510.9 83.1Q507.2 90.1 504.9 97.7M895.6 284.4Q902.1 285.6 908.7 285.4M905.4 241.4Q905.0 231.9 903.1 222.5M566.2 253.8Q573.0 251.2 580.3 250.0M510.9 83.1Q512.9 77.3 511.9 71.3M836.9 148.4Q842.5 153.9 849.2 158.0M333.6 240.8Q334.6 247.7 337.9 253.8M394.8 10.2Q395.5 1.7 396.3 -6.7M291.3 220.8Q299.9 218.9 308.5 217.3M629.3 278.5Q636.0 276.7 642.9 275.6M801.3 223.1Q805.7 228.6 810.5 233.6M608.7 18.4Q600.2 21.3 592.5 26.0M859.0 216.0Q866.4 215.2 873.0 211.7M499.2 221.8Q507.5 219.2 515.3 215.3M619.2 217.2Q612.9 218.0 607.5 221.5M908.7 285.4Q903.0 291.0 896.8 296.1M681.9 7.2Q688.5 2.1 694.9 -3.3M572.4 225.4Q564.9 229.1 556.7 230.9M836.2 107.7Q832.8 113.8 830.4 120.5M683.0 77.2Q679.9 69.7 674.7 63.4M646.0 211.0Q643.2 217.5 642.0 224.3M919.2 229.2Q910.4 227.7 903.1 222.5M777.7 112.4Q783.4 108.9 789.0 105.1M646.0 211.0Q647.7 204.1 646.5 197.2M266.6 82.5Q271.1 76.3 277.3 71.8M523.5 132.2Q524.9 123.9 522.6 115.9M621.3 248.3Q625.9 252.3 629.9 257.1M855.0 112.4Q855.8 122.4 853.9 132.3M26.4 5.6Q15.2 5.9 4.4 8.6M863.3 50.6Q857.4 51.8 851.4 52.5M800.1 22.5Q802.9 29.8 803.1 37.6M875.8 288.9Q873.0 293.5 867.8 295.1M179.5 18.1Q181.1 10.2 180.3 2.3M566.9 82.4Q570.3 89.2 576.5 93.8M781.5 62.4Q783.8 56.4 787.9 51.4M487.4 268.5Q495.9 272.7 504.5 276.7M768.0 28.4Q762.4 31.9 757.8 36.7M791.3 67.0Q791.0 58.9 787.9 51.4M424.1 249.0Q418.3 252.2 412.6 255.6M432.8 3.8Q436.6 11.3 437.2 19.6M287.3 29.5Q288.1 36.8 285.8 43.8M341.0 86.9Q346.1 82.1 349.7 76.1M513.1 135.8Q504.1 134.3 495.1 136.2M799.0 152.5Q798.5 159.9 794.9 166.5M829.7 75.7Q820.2 81.0 809.5 83.0M373.9 207.3Q377.5 213.2 382.3 218.2M809.7 49.7Q806.8 43.4 803.1 37.6M891.2 157.9Q889.7 151.0 884.6 146.1M516.1 285.0Q518.9 293.4 524.2 300.4M554.5 200.0Q561.2 200.1 567.7 198.4M435.7 242.0Q442.1 239.3 448.2 235.9M815.8 58.0Q820.4 54.0 826.1 52.0M593.5 110.3Q592.0 104.6 591.1 98.8M896.4 6.0Q891.0 6.1 885.9 7.9M884.4 167.5Q889.7 169.6 895.2 171.1M574.3 0.6Q580.0 4.6 582.8 11.0M427.4 29.1Q418.3 32.1 409.3 35.0M615.1 206.4Q610.7 203.7 605.5 203.1M452.7 194.6Q446.0 201.3 441.2 209.4M549.3 85.7Q548.6 91.6 550.9 97.1M860.7 244.3Q859.3 251.3 861.8 257.9M300.6 33.8Q303.2 38.7 301.8 44.1M597.8 151.5Q601.3 155.1 604.5 159.1M336.4 283.6Q325.3 287.3 314.8 292.3M808.7 107.7Q798.6 108.3 789.0 105.1M555.3 36.3Q556.4 28.0 559.9 20.5M829.7 75.7Q835.3 72.5 839.2 67.5M587.7 172.0Q594.3 171.5 600.4 168.9M768.6 41.1Q762.5 40.6 757.8 36.7M446.3 169.8Q451.0 173.8 453.3 179.6M537.3 239.4Q543.2 239.4 548.8 241.3M355.2 258.6Q359.2 266.1 359.9 274.6M828.0 62.8Q825.2 57.7 826.1 52.0M588.8 192.3Q585.5 199.5 580.4 205.5M454.4 268.2Q447.4 264.4 439.5 263.4M927.0 281.1Q924.1 286.6 923.0 292.8M504.2 290.1Q498.9 293.5 492.8 294.2M717.0 187.3Q716.7 192.9 720.0 197.5M730.1 274.7Q725.3 266.4 722.3 257.4M840.1 235.3Q834.7 237.6 830.0 240.9M884.6 146.1Q877.7 148.2 870.6 149.5M397.9 196.2Q405.4 196.7 412.6 194.6M343.8 114.1Q343.1 106.9 344.8 99.9M454.4 292.3Q459.5 296.2 465.9 296.8M403.1 85.4Q401.7 79.3 403.5 73.3M321.8 224.3Q319.2 232.2 320.3 240.4M695.1 44.6Q692.7 38.2 691.0 31.5M763.2 195.0Q769.2 192.3 775.7 192.6M508.0 304.4Q500.7 298.7 492.8 294.2M859.2 166.4Q865.6 165.8 871.6 163.7M368.7 264.5Q363.7 269.1 359.9 274.6M439.5 118.1Q448.0 113.8 455.7 108.2M219.6 287.8Q218.7 276.0 219.6 264.1M287.9 7.1Q278.9 8.0 269.8 8.5M915.0 254.3Q909.2 259.0 903.8 264.2M809.6 25.6Q807.6 18.3 802.6 12.5M752.9 259.7Q760.0 265.5 767.3 270.9M788.4 187.8Q782.4 191.3 775.7 192.6M517.3 185.9Q514.1 194.8 510.0 203.2M872.5 137.5Q878.3 142.2 884.6 146.1M531.3 94.4Q531.5 86.3 531.4 78.2M773.1 10.2Q768.8 15.6 763.1 19.4M891.2 157.9Q891.8 164.9 895.2 171.1M627.8 174.9Q621.8 181.5 614.2 186.1M629.3 278.5Q630.4 284.7 629.2 290.8M201.0 83.1Q192.6 84.7 185.4 89.6M621.3 248.3Q626.5 246.8 631.9 245.9M839.0 160.9Q836.7 154.9 836.9 148.4M917.5 179.0Q925.0 176.6 932.9 176.6M621.9 265.3Q627.6 265.6 632.3 268.8M360.1 97.4Q355.7 94.2 351.8 90.5M395.7 36.6Q390.9 38.8 385.8 40.4M740.7 135.9Q747.0 132.9 751.4 127.6M720.4 61.7Q714.3 59.8 708.6 57.1M797.7 46.7Q799.6 55.2 801.8 63.6M652.2 56.3Q657.7 60.7 662.6 65.6M201.0 83.1Q204.4 91.5 208.6 99.6M910.8 2.5Q909.6 7.8 906.9 12.4M823.4 92.8Q828.8 93.9 833.1 97.5M158.3 130.2Q166.4 126.6 174.4 122.9M922.2 246.9Q925.7 253.1 931.7 257.0M683.4 166.4Q683.9 160.1 683.5 153.7M621.5 19.3Q623.9 26.9 626.5 34.4M708.5 220.4Q702.8 212.4 697.7 204.0M841.0 223.2Q845.4 226.5 850.2 229.2M680.0 220.2Q672.4 220.6 664.9 221.9M854.6 268.4Q861.8 268.3 868.2 271.5M469.5 262.6Q472.0 252.3 474.0 241.8M774.6 182.4Q782.5 181.5 789.3 177.5M815.8 58.0Q813.8 64.9 813.7 72.0M596.5 9.7Q602.8 13.8 608.7 18.4M628.4 61.0Q623.6 64.3 619.5 68.5M382.6 69.0Q376.8 64.2 373.9 57.2M519.1 233.8Q527.7 238.4 537.3 239.4M662.6 65.6Q665.9 59.0 671.0 53.9M934.1 50.6Q927.4 50.8 921.0 48.5M898.9 69.1Q892.4 69.4 885.9 69.4M733.6 197.3Q739.5 191.6 742.6 184.1M655.9 205.4Q659.2 214.3 664.9 221.9M539.3 254.3Q539.1 246.7 537.3 239.4M471.2 124.0Q465.5 129.8 459.3 135.1M664.1 46.0Q669.8 43.7 672.9 38.4M823.6 231.1Q817.3 233.5 810.5 233.6M638.5 97.8Q641.7 107.2 642.2 117.1M790.9 94.0Q782.2 89.8 773.1 86.6M632.6 218.4Q632.9 223.7 630.9 228.6M630.5 78.8Q622.7 79.9 614.9 78.9M897.7 84.5Q906.9 85.7 916.2 85.4M487.4 268.5Q486.8 274.3 484.7 279.7M349.7 76.1Q348.3 69.6 345.6 63.6M359.9 6.1Q367.8 2.7 376.2 0.8M698.1 75.6Q692.6 69.3 685.0 66.0M915.0 254.3Q909.9 253.6 904.9 252.6M841.0 223.2Q845.9 220.7 848.1 215.6M762.3 161.9Q768.5 154.6 772.4 146.0M798.6 84.2Q803.9 82.5 809.5 83.0M193.3 134.6Q194.6 125.0 194.1 115.3M666.8 251.9Q662.0 255.6 656.9 258.7M866.4 128.7Q866.0 134.8 862.6 139.8M602.6 141.0Q594.4 139.2 586.2 140.9M918.0 27.4Q913.5 19.1 906.9 12.4M586.2 140.9Q587.5 134.9 592.1 130.8M801.4 270.0Q804.4 274.5 806.0 279.6M686.0 99.3Q692.1 93.5 696.5 86.2M646.5 197.2Q644.0 191.8 641.6 186.4M424.1 249.0Q430.9 257.2 439.5 263.4M751.4 191.5Q746.2 188.7 742.6 184.1M580.9 23.6Q576.1 21.6 571.0 21.6M913.3 113.2Q908.4 121.3 901.1 127.2M808.7 107.7Q807.3 112.9 806.6 118.2M603.0 180.3Q600.3 174.9 600.4 168.9M554.5 200.0Q561.7 192.9 569.3 186.4M638.6 72.8Q638.6 79.2 640.2 85.4M687.3 261.9Q695.6 264.8 704.4 264.8M759.5 101.9Q764.1 106.2 766.2 112.1M718.1 83.2Q723.8 77.2 729.8 71.5M806.5 246.9Q808.2 240.2 810.5 233.6M593.5 110.3Q597.4 106.8 601.2 103.2M836.6 8.2Q832.9 11.9 828.0 13.8M480.2 228.6Q489.1 231.8 497.4 236.5M582.6 107.1Q585.1 113.4 586.7 119.9M725.2 90.8Q720.0 93.3 714.4 94.1M640.2 262.0Q635.4 258.8 629.9 257.1M903.1 222.5Q898.9 232.7 895.1 243.0M699.6 252.7Q703.0 258.3 704.4 264.8M839.6 283.2Q845.0 289.2 849.9 295.6M670.3 236.5Q678.0 234.7 685.3 231.5M307.4 252.9Q314.5 247.3 320.3 240.4M656.7 273.2Q657.6 279.0 661.7 283.2M790.9 94.0Q782.2 97.1 773.7 100.5M667.8 211.1Q661.0 210.0 655.9 205.4M605.6 33.6Q600.2 40.3 593.3 45.5M713.0 140.5Q711.0 145.1 710.2 150.2M632.6 218.4Q631.9 213.0 628.6 208.7M834.4 138.3Q834.2 143.7 836.9 148.4M703.7 93.3Q709.1 93.6 714.4 94.1M795.1 140.4Q786.9 133.3 778.9 126.0M497.4 236.5Q503.6 239.6 508.0 245.0M327.8 260.3Q336.9 261.4 345.1 265.6M469.9 188.4Q461.5 184.0 453.3 179.6M681.9 7.2Q687.9 10.3 694.7 10.0M537.1 197.4Q538.5 189.5 541.3 181.9M165.3 143.5Q156.9 141.4 148.1 141.0M134.1 143.7Q140.9 141.3 148.1 141.0M679.5 191.7Q671.0 193.5 663.5 197.7M496.3 114.3Q497.2 125.3 495.1 136.2M555.3 36.3Q551.6 40.6 546.2 42.5M341.0 86.9Q331.5 83.0 321.5 81.0M616.4 111.8Q611.4 105.1 609.1 97.0M434.3 219.1Q435.8 230.5 435.7 242.0M859.0 216.0Q856.8 207.7 857.0 199.2M934.9 273.7Q930.4 269.7 925.6 265.9M748.6 89.1Q743.3 92.4 737.1 93.5M231.6 -2.2Q229.5 4.7 224.3 9.6M814.2 174.0Q819.3 172.7 823.2 169.1M310.3 22.8Q315.2 20.3 317.8 15.4M889.6 120.5Q885.6 123.9 881.0 126.4M640.1 0.7Q648.2 3.3 656.7 2.8M569.3 186.4Q560.7 186.2 552.4 183.6M827.9 41.9Q827.6 33.5 824.8 25.5M635.6 301.9Q632.3 296.4 629.2 290.8M861.5 60.8Q867.7 59.6 873.8 61.5M709.8 207.0Q708.4 213.6 708.5 220.4M918.0 27.4Q923.9 24.6 930.3 25.6M650.9 140.9Q655.7 142.5 660.3 144.4M327.8 260.3Q320.8 263.2 314.0 266.8M407.0 205.5Q411.5 200.9 412.6 194.6M567.5 136.4Q571.5 142.0 574.9 147.9M766.4 71.0Q765.0 77.4 762.4 83.4M201.0 83.1Q206.8 78.0 211.4 71.8M790.9 94.0Q793.7 88.3 798.6 84.2M586.5 273.3Q585.5 267.3 585.7 261.2M806.5 246.9Q813.6 244.9 819.5 240.4M350.9 12.0Q355.1 8.6 359.9 6.1M813.5 154.4Q817.9 162.0 823.2 169.1M580.9 23.6Q580.2 17.0 582.8 11.0M528.1 152.5Q523.5 157.5 519.1 162.6M795.0 120.8Q792.1 112.9 789.0 105.1M295.2 284.7Q292.7 296.1 291.1 307.6M847.9 277.6Q854.3 280.2 861.2 279.9M749.4 48.7Q755.0 52.4 760.5 56.2M919.4 7.8Q913.3 10.7 906.9 12.4M504.2 259.0Q504.2 267.9 504.5 276.7M779.4 171.3Q776.1 176.4 774.6 182.4M580.6 34.8Q574.1 35.8 567.7 34.8M900.1 275.3Q892.8 277.4 885.7 279.9M313.6 69.3Q317.9 74.9 321.5 81.0M651.0 71.8Q650.5 80.9 649.4 89.9M459.3 135.1Q466.1 136.7 471.2 141.6M586.5 273.3Q591.3 271.6 596.4 270.4M859.2 166.4Q854.7 161.6 849.2 158.0M872.5 137.5Q875.4 130.9 881.0 126.4M586.5 273.3Q579.2 269.5 572.1 265.5M513.1 135.8Q513.3 145.5 509.9 154.5M650.9 140.9Q643.6 138.3 636.0 136.6M467.8 203.9Q460.8 206.4 455.2 211.4M555.2 107.4Q547.1 106.8 539.2 105.3M528.1 152.5Q530.5 158.4 529.2 164.6M210.4 130.9Q202.1 133.9 193.3 134.6M745.0 293.2Q741.1 297.5 737.2 301.8M231.5 274.3Q231.6 266.6 234.4 259.4M904.6 106.0Q900.6 110.8 900.1 117.0M910.9 195.9Q905.8 188.2 900.9 180.3M855.0 112.4Q846.0 108.5 836.2 107.7M541.8 76.7Q540.6 85.0 541.4 93.4M733.9 38.9Q734.8 45.3 736.1 51.6M629.3 278.5Q619.5 274.8 609.6 271.2M194.5 98.9Q193.9 107.1 194.1 115.3M394.8 10.2Q402.2 12.6 409.8 11.6M849.6 64.4Q844.6 66.8 839.2 67.5M609.6 271.2Q605.7 267.5 603.4 262.6M801.0 305.3Q801.6 298.9 802.8 292.5M685.5 20.4Q679.6 22.9 674.6 26.9M813.2 35.9Q810.8 42.7 809.7 49.7M713.0 140.5Q718.2 144.0 720.7 149.9M385.5 204.2Q384.0 211.2 382.3 218.2M919.4 217.2Q912.3 215.4 905.5 212.7M773.7 100.5Q769.1 97.4 765.4 93.3M180.3 2.3Q175.6 7.3 169.1 9.7M595.7 55.8Q599.3 61.5 602.8 67.3M365.1 17.3Q362.1 11.9 359.9 6.1M439.0 160.4Q448.7 161.0 457.8 164.5M934.1 50.6Q930.0 56.7 924.0 60.8M674.7 63.4Q668.9 65.9 662.6 65.6M718.1 106.4Q712.3 106.4 707.4 109.5M336.4 283.6Q333.5 278.1 331.4 272.2M822.1 131.4Q814.3 133.6 806.4 131.9M745.7 169.8Q739.5 169.5 734.5 166.0M879.7 270.7Q885.5 268.3 890.9 265.0M701.3 191.8Q695.2 188.5 688.5 187.0M208.4 115.5Q201.3 116.0 194.1 115.3M322.8 93.8Q323.0 87.3 321.5 81.0M580.9 23.6Q586.8 24.4 592.5 26.0M255.0 41.8Q264.8 45.0 274.0 49.8M764.1 244.2Q769.2 239.7 773.8 234.6M750.7 62.7Q744.8 64.2 739.0 62.2M440.1 307.0Q441.5 299.7 441.2 292.2M483.0 130.4Q489.1 133.1 495.1 136.2M490.1 252.5Q499.8 250.6 508.0 245.0M861.6 21.2Q863.1 27.5 864.7 33.8M593.9 288.5Q593.6 279.2 596.4 270.4M345.0 233.6Q350.9 240.4 357.1 247.0M856.4 149.4Q856.3 158.2 859.2 166.4M631.9 245.9Q629.9 237.3 630.9 228.6M691.5 283.4Q692.7 278.3 693.9 273.1M855.0 112.4Q847.2 114.9 841.2 120.5M546.8 221.4Q546.1 226.7 542.4 230.5M394.8 182.7Q402.9 182.7 411.0 181.9M562.1 10.1Q572.4 11.8 582.8 11.0M548.6 118.0Q544.5 111.2 539.2 105.3M394.8 182.7Q400.2 176.9 402.8 169.5M910.9 195.9Q918.1 190.8 925.6 186.5M555.3 36.3Q558.2 40.6 561.7 44.4M830.5 267.2Q829.0 274.1 828.1 281.1M844.5 140.6Q846.0 149.5 849.2 158.0M336.4 283.6Q339.0 273.7 345.1 265.6M516.1 285.0Q515.1 279.0 516.1 273.0M554.5 200.0Q554.9 191.6 552.4 183.6M379.1 185.5Q381.9 195.0 385.5 204.2M789.3 177.5Q794.6 178.1 799.1 181.1M423.5 208.5Q432.2 201.5 441.1 194.9M549.2 134.8Q553.5 140.3 558.3 145.3M726.4 246.5Q732.2 243.3 736.8 238.6M208.4 115.5Q207.8 107.6 208.6 99.6M316.2 50.0Q323.5 53.6 330.9 57.1M820.5 6.2Q828.7 6.3 836.6 8.2M908.2 142.9Q914.7 141.0 921.1 138.9M382.6 69.0Q383.1 59.8 382.5 50.5M851.0 16.2Q846.9 23.2 841.4 29.1M393.9 257.7Q396.2 247.8 398.4 237.8M708.8 78.1Q703.6 76.0 698.1 75.6M351.2 25.3Q354.9 32.2 360.5 37.7M754.8 26.1Q756.3 31.4 757.8 36.7M393.9 257.7Q383.2 257.1 373.1 253.5M670.3 236.5Q665.9 229.9 664.9 221.9M926.3 88.1Q921.0 87.5 916.2 85.4M566.9 82.4Q569.7 75.9 572.3 69.4M287.9 7.1Q280.6 15.3 272.6 22.9M683.4 166.4Q675.4 167.5 667.4 169.0M539.3 254.3Q544.1 247.8 548.8 241.3M751.3 246.6Q744.6 241.6 736.8 238.6M827.9 41.9Q835.6 36.5 841.4 29.1M551.1 255.3Q554.5 262.0 560.7 266.2M335.5 201.6Q336.2 211.4 337.3 221.2M630.5 78.8Q635.8 81.5 640.2 85.4M281.6 93.8Q290.3 85.8 300.7 80.4M337.3 221.2Q335.6 231.0 333.6 240.8M674.1 159.4Q678.9 162.6 683.4 166.4M577.2 170.3Q578.3 164.9 578.0 159.3M687.3 261.9Q682.4 258.1 676.7 255.4M744.7 -0.1Q752.4 2.7 759.7 6.2M851.0 16.2Q852.7 21.9 853.0 27.8M795.0 120.8Q800.7 119.0 806.6 118.2M842.5 257.7Q836.8 262.8 830.5 267.2M310.3 58.4Q307.5 63.2 303.6 67.2M687.3 261.9Q684.9 272.8 681.3 283.4M667.8 211.1Q667.1 216.7 664.9 221.9M900.1 275.3Q897.2 279.5 895.6 284.4M783.9 233.6Q789.2 232.5 794.5 233.3M380.7 297.7Q373.7 291.1 366.6 284.6M815.8 193.8Q811.3 191.3 807.8 187.4M648.1 24.7Q655.6 29.2 662.1 35.0M733.6 197.3Q742.2 193.3 751.4 191.5M710.2 150.2Q703.3 143.4 699.6 134.5M355.2 258.6Q364.1 256.0 373.1 253.5M668.3 292.5Q674.8 288.0 681.3 283.4M674.6 26.9Q667.3 29.4 662.1 35.0M875.8 288.9Q881.4 285.1 885.7 279.9M765.8 124.0Q767.3 118.1 766.2 112.1M316.2 50.0Q317.5 43.6 315.6 37.3M446.3 169.8Q441.9 175.1 438.4 181.0M655.2 101.5Q653.8 94.9 649.4 89.9M217.9 305.8Q219.6 296.9 219.6 287.8M676.5 86.5Q671.3 85.2 666.3 83.3M706.1 1.2Q711.1 2.2 716.1 1.6M626.5 34.4Q620.5 32.6 616.2 28.1M646.1 153.0Q652.6 147.7 660.3 144.4M757.8 36.7Q751.0 35.7 744.7 38.3M296.6 53.5Q290.1 49.9 285.8 43.8M855.6 186.1Q851.9 177.5 846.4 169.9M801.8 63.6Q799.4 73.8 798.6 84.2M219.6 287.8Q226.5 281.9 231.5 274.3M902.8 152.2Q905.5 147.6 908.2 142.9M875.8 288.9Q878.6 295.1 881.9 301.1M646.5 197.2Q655.0 196.4 663.5 197.7M425.2 193.8Q433.2 194.3 441.1 194.9M736.7 108.6Q736.8 101.0 737.1 93.5M829.7 75.7Q832.5 81.4 834.8 87.4M773.1 86.6Q767.9 88.5 765.4 93.3M382.1 230.2Q373.0 225.3 366.0 217.6M732.3 83.5Q729.1 87.5 725.2 90.8M768.6 41.1Q763.6 48.1 760.5 56.2M918.0 27.4Q908.9 30.3 899.9 33.6M851.0 16.2Q855.8 19.7 861.6 21.2M256.7 57.7Q249.1 54.5 241.4 51.4M602.6 141.0Q611.3 143.4 620.2 145.1M879.7 270.7Q877.3 264.4 871.9 260.4M859.2 166.4Q856.6 176.1 855.6 186.1M910.9 195.9Q913.6 201.7 915.7 207.8M615.1 206.4Q612.0 214.3 607.5 221.5M257.7 -8.5Q262.5 0.9 269.8 8.5M666.3 83.3Q663.4 74.7 662.6 65.6M387.7 271.7Q378.4 267.5 368.7 264.5M873.0 211.7Q866.7 219.0 863.1 228.0M490.1 252.5Q489.0 260.6 487.4 268.5M785.0 258.9Q787.7 264.0 786.6 269.6M773.7 100.5Q768.9 105.6 766.2 112.1M702.5 231.0Q710.9 227.7 718.5 222.7M393.6 65.8Q394.3 71.3 393.2 76.8M780.3 211.3Q774.7 208.6 771.3 203.3M889.3 254.2Q880.9 258.0 871.9 260.4M432.8 3.8Q427.2 5.9 421.2 6.8M840.9 54.1Q835.5 60.0 828.0 62.8M881.4 17.9Q877.7 22.4 872.5 24.9M873.0 41.1Q867.8 38.7 864.7 33.8M849.6 64.4Q852.5 70.8 853.0 77.8M378.0 17.9Q382.8 9.4 387.5 0.8M729.2 289.4Q732.9 295.8 737.2 301.8M672.0 146.6Q678.1 149.5 683.5 153.7M568.4 54.5Q565.9 48.9 561.7 44.4M813.2 35.9Q807.9 35.5 803.1 37.6M734.7 177.6Q725.2 181.2 717.0 187.3M790.9 94.0Q784.2 86.0 781.0 76.0M581.4 83.5Q587.9 90.1 591.1 98.8M342.1 47.5Q345.5 55.2 345.6 63.6M748.6 89.1Q745.1 81.0 740.6 73.4M843.6 203.2Q836.7 208.6 829.3 213.2M910.2 75.4Q916.1 67.2 924.0 60.8M895.6 209.3Q894.2 201.0 892.6 192.6M889.3 254.2Q892.4 248.7 895.1 243.0M676.5 86.5Q671.4 90.3 666.2 93.8M674.7 63.4Q670.6 73.4 666.3 83.3M423.5 208.5Q416.9 211.0 411.9 216.1M765.3 259.2Q759.6 251.5 751.3 246.6M919.2 229.2Q917.4 223.2 919.4 217.2M344.8 99.9Q340.1 95.3 333.7 93.7M731.9 143.5Q739.8 144.5 746.9 148.2M688.5 187.0Q688.6 181.9 690.8 177.3M758.3 135.6Q753.6 132.7 751.4 127.6M687.4 204.3Q692.5 202.4 697.7 204.0M814.2 174.0Q810.6 169.1 806.2 164.9M276.8 300.2Q277.7 292.6 278.8 285.1M523.6 204.6Q519.5 210.0 515.3 215.3M727.8 101.7Q733.7 99.0 737.1 93.5M337.4 302.4Q337.4 293.0 336.4 283.6M629.7 148.6Q625.6 145.2 620.2 145.1M732.9 259.5Q728.0 253.8 726.4 246.5M808.7 107.7Q802.6 115.0 795.0 120.8M386.3 29.2Q385.9 34.8 385.8 40.4M399.7 25.3Q404.6 30.1 409.3 35.0M754.3 181.4Q758.6 176.7 764.0 173.4M322.8 93.8Q319.9 98.7 315.2 101.6M509.0 176.7Q515.5 174.9 522.2 173.7M900.9 180.3Q909.3 181.1 917.5 179.0M160.7 116.8Q163.7 107.8 169.2 100.0M252.7 11.5Q248.3 17.1 242.2 20.7M762.1 232.7Q761.1 238.8 764.1 244.2M795.1 140.4Q803.6 141.5 812.1 141.0M401.4 271.0Q407.4 263.7 412.6 255.6M450.1 281.1Q442.5 279.3 434.7 278.6M629.3 278.5Q636.2 282.9 643.4 286.5M582.8 11.0Q589.5 8.3 596.5 9.7M751.3 246.6Q757.9 246.7 764.1 244.2M520.3 106.0Q518.6 98.6 520.0 91.2M795.0 120.8Q787.2 114.8 777.7 112.4M924.1 197.6Q930.7 192.1 938.9 189.5M566.9 82.4Q566.5 89.6 565.1 96.8M730.5 24.0Q724.6 17.5 718.1 11.5M815.8 15.6Q812.8 20.6 809.6 25.6M461.7 232.2Q459.5 239.5 454.9 245.4M692.0 293.8Q687.7 287.4 681.3 283.4M425.7 266.3Q430.2 272.4 434.7 278.6M509.9 154.5Q515.9 147.6 523.6 143.0M414.1 296.5Q412.4 289.7 414.3 283.0M762.3 161.9Q762.9 167.7 764.0 173.4M334.4 0.4Q332.9 7.6 335.3 14.6M551.1 255.3Q550.4 248.3 548.8 241.3M621.9 265.3Q625.8 261.1 629.9 257.1M373.9 207.3Q371.1 213.3 366.0 217.6M219.6 264.1Q226.6 260.5 234.4 259.4M547.1 290.6Q542.7 285.1 537.5 280.3M576.5 93.8Q573.6 98.2 572.8 103.4M691.0 31.5Q686.2 38.9 683.1 47.1M823.2 169.1Q825.8 163.0 829.2 157.3M495.0 183.8Q494.7 176.9 492.4 170.4M933.8 163.1Q925.7 158.2 917.1 154.1M824.8 25.5Q833.0 27.5 841.4 29.1M690.4 56.4Q688.5 61.7 685.0 66.0M931.9 12.8Q931.8 4.5 932.8 -3.8M669.4 265.3Q673.2 260.4 676.7 255.4M880.3 233.9Q871.7 230.8 863.1 228.0M834.8 87.4Q829.8 91.6 823.4 92.8M933.8 163.1Q933.1 169.9 932.9 176.6M519.1 233.8Q519.0 224.2 515.3 215.3M448.0 148.6Q444.7 155.4 439.0 160.4M598.4 239.2Q589.0 244.0 580.3 250.0M695.1 44.6Q692.5 50.4 690.4 56.4M774.6 182.4Q781.4 185.3 788.4 187.8M740.6 73.4Q736.5 78.5 732.3 83.5M360.1 97.4Q352.7 99.8 344.8 99.9M828.1 281.1Q832.2 288.3 833.5 296.4M510.9 83.1Q503.6 77.9 498.9 70.2M836.2 107.7Q836.3 102.1 833.1 97.5M765.8 124.0Q771.1 117.5 777.7 112.4M884.4 167.5Q878.5 175.6 872.1 183.3M414.3 283.0Q424.1 278.9 434.7 278.6M729.2 289.4Q722.3 286.3 716.3 281.6M300.6 33.8Q308.5 33.7 315.6 37.3M586.2 140.9Q593.1 145.0 597.8 151.5M880.4 99.6Q878.1 104.1 876.1 108.8M768.0 28.4Q772.9 30.7 778.0 32.0M504.9 97.7Q500.9 106.2 496.3 114.3M519.1 233.8Q514.5 240.4 508.0 245.0M822.2 146.3Q824.5 152.5 829.2 157.3M768.0 28.4Q773.4 24.8 778.9 21.2M674.7 63.4Q680.3 63.0 685.0 66.0M460.8 97.0Q466.7 101.6 471.4 107.4M539.3 254.3Q537.4 260.1 538.0 266.2M609.0 246.1Q602.3 251.5 595.2 256.4M820.5 6.2Q825.6 8.6 828.0 13.8M842.5 257.7Q841.0 252.3 836.6 249.0M683.4 166.4Q682.2 172.1 679.0 176.9M598.4 239.2Q588.7 240.0 579.0 239.6M572.8 276.0Q580.0 276.4 586.5 273.3M806.4 131.9Q807.9 125.1 806.6 118.2M558.5 71.7Q565.3 70.3 572.3 69.4M683.0 77.2Q680.8 82.6 676.5 86.5M867.9 74.1Q865.0 67.3 861.5 60.8M908.2 142.9Q912.9 148.3 917.1 154.1M549.3 85.7Q556.3 92.5 565.1 96.8M839.3 42.1Q833.1 47.5 826.1 52.0M479.0 178.4Q487.1 181.0 495.0 183.8M426.8 15.2Q423.1 19.3 417.7 20.6M558.3 145.3Q560.6 137.9 559.4 130.2M591.1 98.8Q583.6 96.8 576.5 93.8M538.6 169.3Q544.8 169.9 549.6 173.9M683.5 153.7Q692.5 156.7 701.7 158.5M579.0 239.6Q572.5 238.8 567.2 235.1M749.9 225.9Q755.6 221.7 762.3 219.4M567.5 136.4Q564.6 131.8 559.4 130.2M908.1 95.4Q899.1 94.3 890.1 92.5M296.6 53.5Q299.2 60.8 303.6 67.2M700.7 170.1Q699.7 164.2 701.7 158.5M595.2 256.4Q588.3 251.9 580.3 250.0M806.4 131.9Q809.1 136.6 812.1 141.0M681.3 283.4Q688.2 279.0 693.9 273.1M773.7 100.5Q774.5 106.8 777.7 112.4M385.5 204.2Q391.6 200.0 397.9 196.2M738.3 221.4Q744.1 218.0 748.1 212.7M847.1 246.2Q845.4 252.2 842.5 257.7M695.0 147.7Q697.4 141.1 699.6 134.5M271.1 262.3Q274.5 273.9 278.8 285.1M313.6 69.3Q321.6 70.3 329.5 71.2M337.3 221.2Q339.3 215.3 344.4 211.8M231.3 86.2Q228.9 79.3 227.3 72.3M531.3 94.4Q535.1 99.9 539.2 105.3M214.2 -0.6Q205.6 -0.3 197.2 1.5M26.4 5.6Q34.0 2.7 40.9 -1.7M384.2 248.5Q383.1 239.4 382.1 230.2M849.9 295.6Q854.5 287.0 861.2 279.9M468.5 169.6Q474.7 164.3 482.6 162.6M715.5 119.2Q711.0 114.8 707.4 109.5M631.9 245.9Q632.2 251.7 629.9 257.1M658.0 13.1Q651.3 13.2 644.8 14.9M635.5 41.5Q642.7 39.6 650.2 39.1M938.8 104.3Q932.4 96.3 926.3 88.1M783.4 142.3Q790.2 149.0 799.0 152.5M123.6 155.1Q134.6 155.4 145.5 153.9M878.5 194.4Q884.2 188.6 886.8 181.0M341.0 86.9Q336.3 89.1 333.7 93.7M754.3 181.4Q750.1 175.5 745.7 169.8M145.5 153.9Q138.7 150.0 134.1 143.7M899.9 33.6Q899.4 38.8 898.7 44.0M783.2 41.9Q776.5 45.5 771.8 51.5M912.2 41.6Q905.2 41.5 898.7 44.0M284.1 59.8Q284.4 51.7 285.8 43.8M849.9 295.6Q841.7 295.6 833.5 296.4M664.1 46.0Q666.4 51.0 671.0 53.9M649.9 128.9Q643.3 133.4 636.0 136.6M415.6 64.5Q409.9 69.5 403.5 73.3M912.2 130.6Q917.5 127.0 920.3 121.3M530.5 182.4Q526.0 178.3 522.2 173.7M519.1 233.8Q508.5 237.1 497.4 236.5M370.4 92.1Q365.7 85.4 359.6 79.9M593.5 110.3Q589.4 114.6 586.7 119.9M745.8 116.1Q751.2 117.9 756.8 117.5M855.0 112.4Q861.9 115.6 868.8 118.5M635.6 301.9Q640.4 294.7 643.4 286.5M264.5 280.1Q270.4 290.3 276.8 300.2M868.8 118.5Q872.7 113.8 876.1 108.8M609.4 283.2Q602.2 277.5 596.4 270.4M564.9 153.2Q563.5 160.2 566.0 166.8M895.6 209.3Q898.6 216.3 903.1 222.5M789.2 204.1Q793.3 199.3 799.4 197.4M652.2 56.3Q661.4 53.6 671.0 53.9M743.0 258.3Q746.3 251.9 751.3 246.6M549.2 134.8Q542.3 137.3 536.6 141.9M393.6 65.8Q399.7 68.0 403.5 73.3M586.2 140.9Q585.1 146.4 587.0 151.6M595.4 211.4Q599.8 206.5 605.5 203.1M437.2 19.6Q431.3 19.0 426.8 15.2M783.4 142.3Q789.4 142.3 795.1 140.4M531.3 94.4Q525.2 94.3 520.0 91.2M762.3 161.9Q753.4 164.6 745.7 169.8M513.1 135.8Q518.0 133.1 523.5 132.2M713.1 23.2Q706.2 20.5 698.8 21.2M414.7 80.8Q418.2 74.7 424.2 71.1M713.0 140.5Q720.2 136.1 726.1 130.0M558.5 71.7Q551.6 69.2 544.9 66.4M821.1 298.0Q827.2 296.8 833.5 296.4M884.4 167.5Q884.2 161.1 880.9 155.6M610.8 56.3Q610.1 50.6 607.8 45.3M713.1 23.2Q710.0 17.7 705.5 13.3M621.3 248.3Q623.5 242.0 623.5 235.4M523.6 204.6Q530.9 202.1 537.1 197.4M748.1 212.7Q755.4 215.7 762.3 219.4M936.9 87.8Q931.6 88.0 926.3 88.1M243.6 67.9Q251.1 64.0 256.7 57.7M878.1 51.8Q870.7 50.8 863.3 50.6M842.4 77.6Q842.5 72.0 839.2 67.5M411.9 216.1Q405.9 216.6 400.0 217.5M695.1 44.6Q699.8 39.9 705.4 36.4M566.2 253.8Q562.8 249.0 557.8 245.8M743.0 258.3Q740.9 264.7 742.7 271.2M790.9 94.0Q789.1 99.4 789.0 105.1M607.8 45.3Q612.4 43.0 615.6 39.0M721.9 237.4Q729.4 238.1 736.8 238.6M651.5 113.3Q653.3 107.4 655.2 101.5M854.2 40.6Q848.7 33.8 841.4 29.1M588.7 302.4Q583.8 296.8 576.9 294.1M387.5 0.8Q381.9 0.6 376.2 0.8M277.3 71.8Q276.1 60.8 274.0 49.8M590.2 232.6Q599.4 227.9 607.5 221.5M692.0 293.8Q695.5 298.3 698.0 303.4M564.9 153.2Q561.5 149.3 558.3 145.3M813.8 204.4Q821.9 208.1 829.3 213.2M685.5 20.4Q677.0 15.2 668.4 10.2M754.8 26.1Q750.5 32.8 744.7 38.3M610.8 56.3Q607.0 61.9 602.8 67.3M519.1 162.6Q522.5 167.7 522.2 173.7M823.6 231.1Q826.7 236.1 830.0 240.9M740.6 73.4Q741.5 67.6 739.0 62.2M701.2 64.3Q703.6 59.4 708.6 57.1M595.4 211.4Q594.4 217.0 591.7 221.9M613.1 257.6Q608.6 260.8 603.4 262.6M539.2 105.3Q536.5 110.0 532.9 114.0M913.4 268.5Q919.4 266.9 925.6 265.9M627.8 174.9Q624.8 169.8 625.0 163.9M822.1 131.4Q817.1 136.2 812.1 141.0M695.1 44.6Q689.4 47.1 683.1 47.1M734.3 11.1Q738.7 18.1 740.3 26.2M779.4 171.3Q771.7 165.0 762.3 161.9M551.1 255.3Q543.4 259.5 538.0 266.2M499.2 221.8Q503.4 211.8 510.0 203.2M345.6 63.6Q354.1 67.2 363.2 68.2M593.3 45.5Q585.7 41.7 580.6 34.8M244.0 107.1Q247.3 116.5 253.2 124.5M360.5 37.7Q361.8 27.3 365.1 17.3M747.9 101.1Q743.4 96.0 737.1 93.5M836.6 8.2Q837.8 2.3 835.8 -3.3M759.7 6.2Q753.1 11.0 744.9 12.1M699.6 252.7Q711.2 253.5 722.3 257.4M630.5 78.8Q625.8 72.8 619.5 68.5M602.6 79.9Q605.0 88.8 609.1 97.0M322.8 93.8Q328.2 94.9 333.7 93.7M706.8 125.5Q707.8 117.6 707.4 109.5M683.4 166.4Q687.8 171.4 690.8 177.3M341.0 86.9Q341.2 93.9 344.8 99.9M705.5 13.3Q711.7 11.5 718.1 11.5M217.1 87.5Q214.0 94.4 208.6 99.6M509.8 124.6Q512.2 130.0 513.1 135.8M831.7 182.3Q824.5 189.0 815.8 193.8M302.4 -1.7Q309.4 0.9 315.9 4.7M517.3 185.9Q519.2 191.0 523.5 194.2M637.8 51.4Q645.0 53.9 652.2 56.3M572.4 225.4Q581.5 228.4 590.2 232.6M400.0 217.5Q400.5 227.8 398.4 237.8M887.5 290.2Q887.3 285.0 885.7 279.9M889.6 120.5Q894.8 118.7 900.1 117.0M335.2 35.5Q337.2 30.0 339.1 24.4M485.2 144.9Q490.7 141.2 495.1 136.2M429.5 296.3Q435.3 294.3 441.2 292.2M558.5 71.7Q549.6 72.4 541.8 76.7M791.3 67.0Q794.9 75.6 798.6 84.2M718.1 83.2Q713.9 79.9 708.8 78.1M723.0 172.4Q717.4 167.1 710.4 163.8M783.4 142.3Q777.3 142.3 772.4 146.0M592.1 130.8Q589.4 125.4 586.7 119.9M895.1 243.0Q900.6 247.2 904.9 252.6M450.1 281.1Q446.3 287.2 441.2 292.2M519.1 233.8Q525.2 232.5 531.2 231.0M482.2 117.9Q476.9 112.6 471.4 107.4M561.7 44.4Q553.9 43.2 546.2 42.5M819.5 240.4Q821.5 247.8 822.3 255.5M604.7 120.4Q595.7 121.4 586.7 119.9M781.0 76.0Q789.3 81.2 798.6 84.2M523.5 132.2Q530.1 132.4 536.3 130.3M672.3 123.1Q666.8 119.4 664.2 113.4M301.8 201.9Q304.7 209.8 308.5 217.3M815.8 193.8Q823.5 196.7 829.0 202.8M689.7 244.9Q697.6 244.3 705.6 244.3M783.2 41.9Q786.8 46.0 787.9 51.4M326.7 20.1Q321.3 19.4 317.8 15.4M878.5 194.4Q885.3 191.8 892.6 192.6M859.2 166.4Q853.0 168.8 846.4 169.9M635.5 41.5Q637.3 36.1 639.8 31.0M905.4 241.4Q900.1 241.0 895.1 243.0M927.7 71.9Q928.0 80.1 926.3 88.1M668.3 292.5Q664.6 296.6 659.8 299.4M640.1 0.7Q638.5 8.4 633.5 14.4M316.4 115.6Q308.4 115.6 300.8 117.7M424.1 249.0Q423.6 257.8 425.7 266.3M605.6 33.6Q606.5 39.5 607.8 45.3M674.7 63.4Q682.2 59.1 690.4 56.4M564.9 153.2Q558.8 157.6 554.4 163.7M726.1 130.0Q716.5 127.5 706.8 125.5M727.8 101.7Q721.5 97.2 714.4 94.1M218.9 44.6Q211.9 43.0 204.8 44.7M795.1 140.4Q796.2 130.6 795.0 120.8M455.7 108.2Q453.6 117.2 449.6 125.7M918.2 103.5Q921.1 95.2 926.3 88.1M659.6 131.5Q654.3 131.7 649.9 128.9M417.6 230.3Q415.1 223.0 411.9 216.1M762.4 83.4Q764.6 88.2 765.4 93.3M766.2 112.1Q771.9 113.9 777.7 112.4M674.1 159.4Q666.7 159.1 660.4 155.2M602.6 79.9Q608.8 79.6 614.9 78.9M743.0 258.3Q741.8 253.4 739.9 248.7M602.6 79.9Q596.3 77.9 591.8 73.1M608.7 18.4Q607.9 12.8 610.6 7.9M694.9 -3.3Q695.9 3.3 694.7 10.0M745.8 116.1Q749.2 121.6 751.4 127.6M861.8 257.9Q868.1 253.4 874.8 249.4M421.2 6.8Q420.7 1.1 419.5 -4.4M288.4 107.9Q297.6 108.8 306.8 108.9M504.2 290.1Q510.6 288.5 516.1 285.0M414.1 296.5Q404.8 291.3 396.3 284.8M433.0 81.5Q429.9 75.2 424.2 71.1M459.3 135.1Q454.9 129.9 449.6 125.7M434.3 219.1Q442.7 226.3 448.2 235.9M516.1 285.0Q509.4 282.2 504.5 276.7M366.6 284.6Q364.3 278.9 359.9 274.6M364.6 229.2Q373.3 230.1 382.1 230.2M729.4 229.8Q724.3 225.8 718.5 222.7M778.9 21.2Q777.9 26.6 778.0 32.0M588.8 192.3Q579.0 189.6 569.3 186.4M490.1 252.5Q482.3 246.8 474.0 241.8M551.1 255.3Q551.2 262.5 549.9 269.6M626.5 34.4Q628.0 28.8 631.6 24.3M662.1 186.0Q659.2 181.3 659.6 175.8M537.1 197.4Q530.5 195.1 523.5 194.2M660.4 155.2Q657.6 160.7 653.8 165.6M908.6 160.8Q913.5 158.3 917.1 154.1M613.1 257.6Q616.3 252.2 621.3 248.3M791.9 32.7Q789.3 27.6 789.0 21.8M483.0 130.4Q484.1 124.0 482.2 117.9M623.5 235.4Q616.5 241.1 609.0 246.1M454.4 292.3Q447.8 292.0 441.2 292.2M219.6 264.1Q212.8 260.3 205.4 258.0M666.8 251.9Q662.4 244.9 655.8 239.7M844.5 140.6Q839.6 143.5 836.9 148.4M842.4 77.6Q847.7 78.0 853.0 77.8M530.5 182.4Q535.9 181.7 541.3 181.9M393.6 65.8Q399.7 64.6 405.7 63.0M780.3 211.3Q783.9 216.0 789.0 218.9M385.5 204.2Q391.5 212.2 400.0 217.5M722.3 257.4Q727.4 259.5 732.9 259.5M359.6 79.9Q361.3 74.0 363.2 68.2M201.0 83.1Q199.3 91.6 194.5 98.9M379.2 282.4Q373.2 285.1 366.6 284.6M488.7 206.5Q494.5 213.8 499.2 221.8M417.6 230.3Q413.8 236.8 409.8 243.1M884.6 146.1Q891.4 143.6 897.8 140.3M695.1 44.6Q702.7 47.3 710.8 46.5M702.5 231.0Q712.8 232.3 721.9 237.4M806.5 246.9Q799.3 241.2 794.5 233.3M734.7 177.6Q735.1 187.5 733.6 197.3M264.5 280.1Q254.9 283.0 245.1 284.7M460.0 307.4Q457.0 299.9 454.4 292.3M621.5 47.8Q625.7 54.0 628.4 61.0M572.0 125.5Q576.3 128.8 581.7 129.6M813.5 154.4Q821.6 154.3 829.2 157.3M488.7 206.5Q499.4 204.8 510.0 203.2M683.0 77.2Q690.5 76.4 698.1 75.6M876.1 108.8Q878.6 117.6 881.0 126.4M898.9 69.1Q896.5 76.7 897.7 84.5M672.0 146.6Q666.0 146.4 660.3 144.4M650.2 39.1Q645.1 34.9 639.8 31.0M434.7 278.6Q436.3 286.2 441.2 292.2M531.4 78.2Q536.6 77.3 541.8 76.7M566.9 82.4Q558.2 84.4 549.3 85.7M572.8 276.0Q566.4 274.5 560.0 276.4M217.1 87.5Q212.5 80.3 211.4 71.8M685.3 231.5Q683.0 238.4 678.2 243.7M829.0 202.8Q835.9 195.8 841.0 187.3M751.3 246.6Q751.3 253.3 752.9 259.7M345.6 63.6Q348.7 54.9 353.2 47.0M423.5 208.5Q432.3 210.9 441.2 209.4M329.5 71.2Q334.3 73.9 339.2 76.3M654.9 226.9Q651.4 230.8 647.1 233.8M814.7 264.5Q809.5 271.6 806.0 279.6M814.7 264.5Q819.0 260.5 822.3 255.5M725.4 215.2Q723.4 206.1 720.0 197.5M194.5 98.9Q186.5 103.9 179.9 110.5M482.4 93.5Q479.3 87.6 474.9 82.6M841.4 29.1Q834.7 21.4 828.0 13.8M866.4 128.7Q874.0 129.1 881.0 126.4M174.4 122.9Q175.6 116.0 179.9 110.5M368.7 241.5Q370.0 247.9 373.1 253.5M144.0 121.2Q146.6 131.0 148.1 141.0M327.8 260.3Q329.1 266.4 331.4 272.2M579.0 239.6Q579.6 244.8 580.3 250.0M760.5 56.2Q758.0 46.6 757.8 36.7M823.2 169.1Q814.7 166.8 806.2 164.9M908.1 95.4Q904.3 88.6 897.7 84.5M901.1 127.2Q899.4 122.2 900.1 117.0M836.6 8.2Q840.3 18.4 841.4 29.1M880.9 220.0Q871.8 223.5 863.1 228.0M557.8 245.8Q553.4 249.9 551.1 255.3M910.2 75.4Q910.5 68.8 907.1 63.1M254.2 26.4Q244.5 32.4 233.6 35.3M913.4 297.9Q905.0 298.0 896.8 296.1M474.0 241.8Q464.5 243.9 454.9 245.4M668.3 292.5Q664.1 288.5 661.7 283.2M552.4 183.6Q558.3 179.8 564.7 177.0M495.1 136.2Q503.9 144.2 509.9 154.5M455.7 108.2Q463.5 107.2 471.4 107.4M800.1 22.5Q794.5 23.8 789.0 21.8M687.3 261.9Q688.0 253.3 689.7 244.9M252.7 11.5Q261.3 10.0 269.8 8.5M855.6 186.1Q848.4 187.4 841.0 187.3M726.7 3.2Q721.3 3.2 716.1 1.6M702.3 180.7Q696.2 180.0 690.8 177.3M471.2 124.0Q465.9 120.7 459.8 119.4M621.5 47.8Q624.2 41.2 626.5 34.4M856.4 149.4Q860.4 145.2 862.6 139.8M229.5 102.7Q237.3 103.2 244.0 107.1M567.5 136.4Q565.4 144.7 564.9 153.2M690.4 56.4Q688.2 50.6 683.1 47.1M823.6 231.1Q821.8 235.9 819.5 240.4M732.3 83.5Q733.2 89.2 737.1 93.5M671.0 53.9Q676.6 49.7 683.1 47.1M836.2 107.7Q842.8 103.9 848.1 98.4M432.8 3.8Q437.6 6.7 443.1 7.4M586.7 119.9Q581.6 117.3 576.2 115.3M504.9 97.7Q512.4 102.1 520.3 106.0M699.6 252.7Q695.0 248.3 689.7 244.9M880.4 99.6Q876.3 93.4 875.5 86.0M504.5 276.7Q509.9 273.8 516.1 273.0M523.5 132.2Q523.1 137.6 523.6 143.0M912.2 130.6Q918.0 133.3 921.1 138.9M471.2 220.2Q463.8 214.7 455.2 211.4M424.1 249.0Q434.2 252.6 444.8 253.0M218.9 44.6Q226.2 39.9 233.6 35.3M547.1 290.6Q542.9 295.8 542.1 302.4M849.9 295.6Q858.9 297.2 867.8 295.1M786.4 284.7Q793.8 290.2 802.8 292.5M629.3 278.5Q622.6 286.7 613.9 292.7M861.2 279.9Q865.2 276.1 868.2 271.5M287.9 7.1Q295.8 8.7 303.4 11.7M674.7 63.4Q678.1 54.8 683.1 47.1M287.9 7.1Q286.7 0.7 285.1 -5.7M765.3 259.2Q759.1 257.9 752.9 259.7M791.3 67.0Q785.1 70.3 781.0 76.0M672.0 146.6Q676.8 139.0 684.0 133.6M399.7 25.3Q397.2 30.8 395.7 36.6M547.1 290.6Q553.6 283.6 560.0 276.4M197.0 290.7Q199.4 299.7 201.0 308.9M696.5 86.2Q699.1 90.8 703.7 93.3M539.3 254.3Q530.9 256.6 523.8 261.6M881.4 17.9Q889.0 15.0 897.1 15.9M718.1 106.4Q715.0 100.6 714.4 94.1M605.8 299.5Q609.2 291.7 609.4 283.2M709.8 207.0Q718.2 209.9 725.4 215.2M799.1 181.1Q801.8 172.6 806.2 164.9M822.1 131.4Q819.9 126.7 818.5 121.7M892.2 -7.4Q887.9 -0.2 885.9 7.9M881.9 301.1Q874.3 299.4 867.8 295.1M789.2 204.1Q782.5 198.3 775.7 192.6M468.5 169.6Q461.7 175.8 453.3 179.6M593.3 45.5Q600.5 45.2 607.8 45.3M548.6 118.0Q540.9 115.5 532.9 114.0M841.2 120.5Q835.8 119.1 830.4 120.5M387.7 271.7Q391.8 265.2 393.9 257.7M747.9 101.1Q741.3 103.3 736.7 108.6M844.5 140.6Q839.5 139.0 834.4 138.3M471.2 124.0Q471.8 132.8 471.2 141.6M699.6 252.7Q692.5 256.0 687.3 261.9M425.9 177.4Q432.4 178.3 438.4 181.0M565.8 113.0Q570.5 109.1 572.8 103.4M685.5 20.4Q692.2 20.1 698.8 21.2M536.6 141.9Q536.0 136.1 536.3 130.3M572.0 125.5Q565.3 126.7 559.4 130.2M730.1 274.7Q732.4 267.3 732.9 259.5M219.6 264.1Q226.5 268.1 231.5 274.3M674.6 26.9Q670.9 18.7 668.4 10.2M856.4 149.4Q850.3 145.2 844.5 140.6M872.5 24.9Q866.1 18.5 861.4 10.8M629.7 108.5Q624.9 114.6 621.9 121.8M434.3 219.1Q438.9 215.1 441.2 209.4M885.9 38.5Q893.0 39.7 898.7 44.0M667.4 169.0Q662.9 171.7 659.6 175.8M913.3 113.2Q918.2 116.0 920.3 121.3M300.6 33.8Q293.6 32.6 287.3 29.5M439.0 160.4Q429.9 162.6 420.8 164.2M507.9 110.2Q514.7 114.5 522.6 115.9M718.1 37.3Q711.7 37.6 705.4 36.4M385.2 85.6Q388.6 80.6 393.2 76.8M394.8 10.2Q399.6 5.5 405.0 1.5M602.6 79.9Q603.4 73.6 602.8 67.3M409.8 11.6Q404.5 18.2 399.7 25.3M717.0 187.3Q714.6 181.3 712.7 175.1M616.4 111.8Q611.4 117.3 604.7 120.4M715.3 267.9Q710.3 264.7 704.4 264.8M738.3 221.4Q736.9 230.0 736.8 238.6M841.0 223.2Q834.0 219.6 829.3 213.2M582.8 11.0Q588.1 18.2 592.5 26.0M848.1 98.4Q855.3 93.8 863.3 91.1M847.9 277.6Q843.4 279.9 839.6 283.2M767.3 270.9Q771.4 267.7 774.5 263.6M321.5 81.0Q316.8 86.4 310.6 90.2M571.0 21.6Q570.1 28.4 567.7 34.8M233.6 35.3Q225.0 31.7 216.2 28.5M374.7 80.4Q367.2 80.2 359.6 79.9M847.9 277.6Q846.7 272.3 843.4 268.0M317.7 204.0Q313.5 210.9 308.5 217.3M552.3 53.5Q543.7 56.5 535.8 61.1M713.1 23.2Q708.0 29.1 705.4 36.4M813.8 204.4Q816.3 199.4 815.8 193.8M815.8 15.6Q821.8 14.0 828.0 13.8M613.1 257.6Q611.7 251.6 609.0 246.1M750.7 62.7Q751.2 55.6 749.4 48.7M549.2 134.8Q542.9 132.0 536.3 130.3M861.8 257.9Q859.8 264.2 854.6 268.4M909.1 51.7Q907.0 57.2 907.1 63.1M415.6 64.5Q415.6 72.7 414.7 80.8M355.2 258.6Q361.1 263.4 368.7 264.5M891.3 53.2Q884.6 52.8 878.1 51.8M690.4 220.4Q699.5 218.9 708.5 220.4M600.4 168.9Q601.3 163.5 604.5 159.1M720.4 61.7Q711.0 64.2 701.2 64.3M910.8 2.5Q903.2 2.6 896.4 6.0M813.5 154.4Q806.0 155.3 799.0 152.5M666.8 251.9Q668.8 258.5 669.4 265.3M842.5 257.7Q842.1 262.9 843.4 268.0M393.6 65.8Q388.0 66.9 382.6 69.0M806.1 92.8Q798.6 100.4 789.0 105.1M326.7 20.1Q331.9 27.3 335.2 35.5M519.9 248.4Q511.5 252.8 504.2 259.0M412.6 255.6Q414.1 263.2 413.6 270.8M924.1 197.6Q917.3 198.2 910.9 195.9M729.2 289.4Q737.3 290.4 745.0 293.2M349.7 287.2Q343.0 285.5 336.4 283.6M884.4 167.5Q878.4 164.4 871.6 163.7M485.2 144.9Q479.6 151.3 471.8 154.7M561.0 212.4Q552.8 211.8 544.7 211.0M327.8 260.3Q329.5 250.2 333.6 240.8M783.4 142.3Q782.3 133.8 778.9 126.0M789.0 21.8Q795.8 17.2 802.6 12.5M762.4 83.4Q767.3 86.4 773.1 86.6M754.8 26.1Q748.6 20.0 744.9 12.1M601.2 103.2Q597.6 95.4 595.1 87.2M303.9 236.5Q312.5 236.6 320.3 240.4M749.9 225.9Q744.5 222.6 738.3 221.4M819.5 240.4Q814.4 237.8 810.5 233.6M357.1 247.0Q362.2 242.8 368.7 241.5M889.3 254.2Q888.6 259.8 890.9 265.0M231.3 86.2Q224.2 86.5 217.1 87.5M469.8 277.6Q460.2 280.8 450.1 281.1M516.1 285.0Q523.5 288.1 531.5 288.9M670.3 236.5Q663.3 239.4 655.8 239.7M333.7 93.7Q327.4 87.5 321.5 81.0M839.0 160.9Q843.8 158.3 849.2 158.0M886.1 80.7Q880.2 82.0 875.5 86.0M853.9 132.3Q859.9 129.6 866.4 128.7M720.4 61.7Q729.7 61.6 739.0 62.2M809.7 49.7Q807.1 57.5 801.8 63.6M856.4 149.4Q853.9 141.0 853.9 132.3M567.5 136.4Q561.7 139.5 558.3 145.3M586.2 140.9Q580.2 143.8 574.9 147.9M558.5 71.7Q555.1 79.5 549.3 85.7M613.6 154.7Q617.8 150.5 620.2 145.1M425.2 193.8Q417.8 188.3 411.0 181.9M927.7 71.9Q923.0 79.6 916.2 85.4M655.8 239.7Q652.2 235.7 647.1 233.8M797.7 46.7Q804.0 47.2 809.7 49.7M740.7 135.9Q744.0 141.9 746.9 148.2M808.7 107.7Q816.2 111.2 824.5 111.3M895.2 171.1Q890.1 175.3 886.8 181.0M918.2 103.5Q915.5 94.6 916.2 85.4M822.2 146.3Q829.6 147.2 836.9 148.4M813.5 154.4Q816.9 149.4 822.2 146.3M729.8 116.2Q734.7 118.7 737.7 123.3M888.0 227.6Q885.0 223.3 880.9 220.0M700.7 170.1Q692.4 166.5 683.4 166.4M788.4 187.8Q793.0 183.2 799.1 181.1M820.5 6.2Q828.2 1.5 835.8 -3.3M791.9 32.7Q793.1 40.4 797.7 46.7M789.2 204.1Q788.5 196.0 788.4 187.8M628.4 61.0Q634.3 57.4 637.8 51.4M601.2 103.2Q601.7 112.0 604.7 120.4M848.1 98.4Q840.7 97.0 833.1 97.5M625.2 8.3Q618.0 6.6 610.6 7.9M564.9 153.2Q571.4 156.4 578.0 159.3M827.9 41.9Q820.2 39.8 813.2 35.9M873.5 6.8Q879.6 8.5 885.9 7.9M717.0 187.3Q710.0 183.1 702.3 180.7M439.0 160.4Q441.0 166.3 446.3 169.8M531.4 78.2Q525.0 84.1 520.0 91.2M590.0 181.7Q589.3 176.8 587.7 172.0M482.6 162.6Q476.0 160.3 471.8 154.7M907.1 63.1Q915.4 60.5 924.0 60.8M558.9 301.8Q562.3 293.8 565.1 285.5M438.4 181.0Q446.0 182.3 453.3 179.6M441.1 194.9Q447.3 187.4 453.3 179.6M888.0 227.6Q895.3 224.2 903.1 222.5M872.5 24.9Q873.9 33.0 873.0 41.1M915.0 254.3Q921.2 259.3 925.6 265.9M646.0 211.0Q650.3 207.2 655.9 205.4M345.6 63.6Q343.4 70.5 339.2 76.3M722.3 257.4Q717.5 261.8 715.3 267.9M483.0 130.4Q490.3 122.9 496.3 114.3M329.5 71.2Q326.2 76.6 321.5 81.0M523.8 261.6Q514.0 260.0 504.2 259.0M450.9 224.0Q455.6 229.0 461.7 232.2M839.0 160.9Q830.3 163.5 823.2 169.1M673.3 101.2Q671.1 96.2 666.2 93.8M672.9 38.4Q667.4 37.2 662.1 35.0M629.7 108.5Q625.0 104.5 622.2 99.1M582.8 11.0Q585.6 4.9 585.7 -1.8M461.7 232.2Q454.5 232.4 448.2 235.9M577.2 170.3Q573.8 178.6 569.3 186.4M783.2 41.9Q787.2 37.0 791.9 32.7M808.7 107.7Q813.4 114.9 818.5 121.7M720.4 61.7Q728.1 56.4 736.1 51.6M820.5 6.2Q814.8 5.2 809.3 3.4M687.3 261.9Q678.1 262.2 669.4 265.3M861.5 60.8Q861.8 55.6 863.3 50.6M638.5 97.8Q644.0 93.9 649.4 89.9M654.9 226.9Q648.8 223.9 642.0 224.3M919.2 229.2Q923.5 232.7 928.5 234.7M720.8 161.4Q715.4 161.7 710.4 163.8M695.1 44.6Q702.9 49.7 708.6 57.1M619.2 217.2Q624.8 223.1 630.9 228.6M664.1 46.0Q657.8 41.3 650.2 39.1M572.0 125.5Q572.3 119.7 576.2 115.3M613.6 154.7Q605.3 155.0 597.8 151.5M910.2 75.4Q919.0 73.9 927.7 71.9M647.1 233.8Q644.5 229.1 642.0 224.3M315.9 4.7Q317.7 9.9 317.8 15.4M595.2 256.4Q598.1 261.0 603.4 262.6M659.6 131.5Q662.7 122.6 664.2 113.4M850.2 229.2Q849.7 222.3 848.1 215.6M763.2 195.0Q757.1 194.1 751.4 191.5M572.1 265.5Q579.0 263.7 585.7 261.2M674.4 -0.2Q665.4 0.5 656.7 2.8M815.4 284.7Q808.3 287.4 802.8 292.5M726.7 3.2Q731.1 6.5 734.3 11.1M614.2 186.1Q620.6 188.1 625.8 192.4M612.9 172.3Q614.9 163.6 613.6 154.7M735.9 155.6Q728.0 157.6 720.8 161.4M651.0 71.8Q644.8 72.7 638.6 72.8M394.8 10.2Q388.9 18.9 386.3 29.2M287.3 29.5Q292.0 24.9 297.0 20.5M814.7 264.5Q822.0 272.3 828.1 281.1M350.9 12.0Q358.7 13.0 365.1 17.3M668.3 292.5Q671.6 299.3 673.6 306.7M339.1 24.4Q343.5 30.9 349.5 36.0M701.3 191.8Q701.0 198.3 697.7 204.0M708.6 57.1Q715.2 55.3 721.1 51.6M479.0 178.4Q474.0 173.8 468.5 169.6M382.1 230.2Q390.9 223.6 400.0 217.5M660.4 155.2Q653.0 155.7 646.1 153.0M806.6 118.2Q812.2 121.2 818.5 121.7M625.8 192.4Q626.8 200.6 628.6 208.7M364.6 229.2Q354.7 231.0 345.0 233.6M892.6 192.6Q896.6 186.3 900.9 180.3M471.2 220.2Q464.9 225.0 461.7 232.2M891.6 131.6Q895.4 135.5 897.8 140.3M613.6 154.7Q618.1 160.8 625.0 163.9M691.0 31.5Q697.8 35.2 705.4 36.4M548.6 118.0Q543.0 124.7 536.3 130.3M778.8 223.2Q783.7 220.7 789.0 218.9M523.6 204.6Q516.6 205.9 510.0 203.2M630.5 78.8Q628.6 70.0 628.4 61.0M229.5 102.7Q230.0 94.4 231.3 86.2M499.2 221.8Q489.0 223.4 480.2 228.6M674.1 159.4Q673.4 152.9 672.0 146.6M733.6 197.3Q726.8 198.6 720.0 197.5M640.1 0.7Q641.1 8.3 644.8 14.9M905.5 212.7Q910.6 210.2 915.7 207.8M895.6 284.4Q890.5 282.6 885.7 279.9M739.0 62.2Q737.3 57.0 736.1 51.6M382.6 69.0Q385.3 77.1 385.2 85.6M748.8 160.2Q752.4 153.6 757.7 148.2M379.1 185.5Q389.1 189.8 397.9 196.2M417.6 230.3Q421.1 219.5 423.5 208.5M619.2 217.2Q623.7 212.7 628.6 208.7M702.3 180.7Q707.7 178.4 712.7 175.1M839.2 67.5Q833.6 65.3 828.0 62.8M632.6 218.4Q640.1 216.2 646.0 211.0M744.9 12.1Q739.7 10.2 734.3 11.1M706.9 277.9Q699.5 281.4 691.5 283.4M474.0 241.8Q478.0 235.6 480.2 228.6M398.0 51.5Q391.0 46.9 385.8 40.4M929.9 144.1Q930.7 153.8 933.8 163.1M698.8 21.2Q695.0 16.2 694.7 10.0M640.1 0.7Q632.4 4.1 625.2 8.3M646.1 153.0Q635.0 157.4 625.0 163.9M783.9 233.6Q779.0 235.5 773.8 234.6M640.2 262.0Q635.7 264.7 632.3 268.8M591.7 221.9Q585.1 221.6 579.7 217.8M330.9 57.1Q331.6 64.3 329.5 71.2M913.3 113.2Q917.4 109.2 918.2 103.5M315.9 4.7Q310.1 9.1 303.4 11.7M457.8 164.5Q452.4 167.9 446.3 169.8M539.3 254.3Q529.0 253.2 519.9 248.4M613.6 154.7Q621.3 150.7 629.7 148.6M780.6 156.6Q782.9 149.6 783.4 142.3M300.7 80.4Q305.8 85.1 310.6 90.2M910.2 75.4Q914.5 79.6 916.2 85.4M266.6 82.5Q257.2 82.3 247.8 81.6M784.8 -0.2Q789.8 2.2 794.7 4.6M581.7 129.6Q583.6 124.4 586.7 119.9M910.9 195.9Q915.5 187.9 917.5 179.0M576.5 93.8Q570.6 94.4 565.1 96.8M797.7 46.7Q799.0 41.3 803.1 37.6M504.2 259.0Q511.2 265.1 516.1 273.0M910.9 195.9Q903.0 202.3 895.6 209.3M695.0 147.7Q689.0 150.3 683.5 153.7M315.2 101.6Q307.9 98.5 300.0 99.3M779.4 171.3Q785.3 172.9 789.3 177.5M932.8 -3.8Q924.9 0.7 919.4 7.8M839.0 160.9Q834.1 171.2 831.7 182.3M846.4 169.9Q846.9 163.7 849.2 158.0M801.4 270.0Q807.4 265.8 814.7 264.5M337.3 221.2Q341.0 227.5 345.0 233.6M799.4 197.4Q794.4 191.9 788.4 187.8M789.3 177.5Q789.1 182.7 788.4 187.8M487.8 106.1Q485.7 112.3 482.2 117.9M706.9 277.9Q712.4 284.8 714.9 293.2M537.5 280.3Q537.2 273.2 538.0 266.2M571.0 21.6Q565.3 21.9 559.9 20.5M295.2 284.7Q287.1 286.4 278.8 285.1M159.9 22.0Q164.9 16.2 169.1 9.7M706.8 125.5Q698.4 125.5 690.4 123.5M655.8 239.7Q654.9 249.3 656.9 258.7M873.8 61.5Q879.7 65.7 885.9 69.4M356.9 106.9Q351.8 101.8 344.8 99.9M448.0 148.6Q453.4 156.2 457.8 164.5M291.3 220.8Q297.4 211.9 301.8 201.9M918.0 27.4Q921.3 32.1 925.3 36.2M591.8 73.1Q581.8 72.5 572.3 69.4M827.9 41.9Q825.6 46.7 826.1 52.0M730.1 274.7Q722.6 271.5 715.3 267.9M834.4 138.3Q838.5 134.7 842.2 130.7M581.4 83.5Q577.9 88.2 576.5 93.8M802.8 292.5Q804.0 285.9 806.0 279.6M733.9 38.9Q735.8 31.9 740.3 26.2M721.1 51.6Q728.6 51.7 736.1 51.6M374.7 80.4Q380.4 82.0 385.2 85.6M859.0 216.0Q855.5 223.2 850.2 229.2M940.1 226.7Q933.3 229.3 928.5 234.7M548.8 241.3Q552.2 235.6 556.7 230.9M673.3 101.2Q669.8 108.0 664.2 113.4M580.4 205.5Q581.2 211.7 579.7 217.8M824.8 25.5Q827.4 19.9 828.0 13.8M789.0 21.8Q792.5 13.4 794.7 4.6M452.7 194.6Q453.9 187.1 453.3 179.6M627.8 174.9Q620.3 173.5 612.9 172.3M287.5 269.7Q282.7 258.7 281.7 246.8M774.6 182.4Q769.8 189.5 763.2 195.0M849.6 64.4Q855.7 63.0 861.5 60.8M409.8 243.1Q410.5 249.5 412.6 255.6M586.2 140.9Q584.4 135.1 581.7 129.6M590.0 181.7Q594.0 174.4 600.4 168.9M880.3 233.9Q878.0 241.9 874.8 249.4M613.6 154.7Q609.2 157.3 604.5 159.1M405.7 63.0Q405.1 68.2 403.5 73.3M396.6 98.2Q395.1 104.5 393.5 110.7M768.6 41.1Q774.1 37.4 778.0 32.0M689.7 244.9Q683.3 250.3 676.7 255.4M586.5 273.3Q582.3 284.0 576.9 294.1M655.8 239.7Q654.1 233.4 654.9 226.9M577.2 170.3Q570.2 172.2 564.7 177.0M840.9 54.1Q846.0 52.2 851.4 52.5M517.3 185.9Q524.3 185.5 530.5 182.4M848.1 98.4Q850.3 92.9 853.8 88.1M813.8 204.4Q821.3 203.2 829.0 202.8M827.9 41.9Q818.2 44.3 809.7 49.7M859.0 216.0Q853.6 214.8 848.1 215.6M561.0 212.4Q562.5 204.5 567.7 198.4M252.7 11.5Q250.7 4.0 246.1 -2.3M403.1 85.4Q397.7 81.6 393.2 76.8M450.9 224.0Q461.2 223.0 471.2 220.2M201.0 83.1Q209.4 84.2 217.1 87.5M510.0 203.2Q514.0 208.7 515.3 215.3M659.6 131.5Q654.9 135.8 650.9 140.9M523.8 261.6Q518.6 266.4 516.1 273.0M629.5 128.7Q623.3 136.0 620.2 145.1M549.3 85.7Q546.5 80.4 541.8 76.7M469.5 262.6Q470.6 270.1 469.8 277.6M407.5 46.1Q403.4 50.0 398.0 51.5M926.4 129.8Q923.0 125.8 920.3 121.3M847.9 277.6Q849.7 271.9 854.6 268.4M701.2 64.3Q693.2 66.1 685.0 66.0M934.1 50.6Q931.2 42.5 925.3 36.2M841.2 120.5Q846.2 127.8 853.9 132.3M829.3 213.2Q820.6 217.3 811.8 220.9M615.1 206.4Q615.9 212.3 619.2 217.2M373.9 41.8Q372.4 49.5 373.9 57.2M256.7 57.7Q266.2 55.5 274.0 49.8M561.0 212.4Q566.7 218.9 572.4 225.4M909.1 51.7Q903.4 48.5 898.7 44.0M854.2 40.6Q858.5 35.7 864.7 33.8M716.3 281.6Q715.2 287.4 714.9 293.2M471.2 220.2Q476.5 223.5 480.2 228.6M736.7 108.6Q731.4 106.4 727.8 101.7M831.7 182.3Q826.5 176.3 823.2 169.1M581.7 129.6Q577.4 123.1 576.2 115.3M648.1 24.7Q639.9 22.8 631.6 24.3M485.2 304.0Q489.0 299.1 492.8 294.2M445.5 96.4Q453.2 95.0 460.8 97.0M602.0 0.2Q606.3 4.0 610.6 7.9M627.8 174.9Q633.4 182.2 641.6 186.4M778.9 21.2Q784.0 20.2 789.0 21.8M851.1 4.6Q844.0 -0.5 835.8 -3.3M523.8 261.6Q531.3 262.7 538.0 266.2M737.4 207.7Q735.4 202.5 733.6 197.3M879.7 270.7Q883.8 274.6 885.7 279.9M592.5 26.0Q585.9 29.5 580.6 34.8M912.2 41.6Q914.6 34.3 918.0 27.4M754.3 181.4Q753.6 186.7 751.4 191.5M228.1 22.1Q224.8 16.3 224.3 9.6M886.1 80.7Q886.9 75.0 885.9 69.4M780.3 211.3Q778.1 217.1 778.8 223.2M755.0 277.6Q746.5 281.7 737.1 282.3M588.8 192.3Q598.0 196.4 605.5 203.1M834.4 138.3Q827.6 141.2 822.2 146.3M550.9 97.1Q558.0 97.4 565.1 96.8M593.9 288.5Q585.2 290.9 576.9 294.1M193.3 134.6Q183.0 130.2 174.4 122.9M617.1 131.1Q618.1 125.7 621.9 121.8M788.7 243.7Q791.0 238.2 794.5 233.3M272.6 22.9Q272.0 15.6 269.8 8.5M729.2 289.4Q728.8 294.4 727.5 299.3M685.5 20.4Q690.9 15.9 694.7 10.0M924.0 60.8Q923.3 54.5 921.0 48.5M591.7 221.9Q599.6 221.0 607.5 221.5M860.7 244.3Q867.7 246.9 874.8 249.4M890.9 265.0Q887.2 272.1 885.7 279.9M204.1 274.8Q194.2 276.9 184.8 280.8M414.3 283.0Q405.2 282.2 396.3 284.8M382.1 230.2Q390.2 234.2 398.4 237.8M497.9 156.8Q495.2 163.6 492.4 170.4M762.1 232.7Q768.0 233.6 773.8 234.6M778.9 21.2Q781.5 16.8 783.1 11.9M185.4 89.6Q183.9 100.4 179.9 110.5M794.5 233.3Q802.5 235.4 810.5 233.6M729.4 229.8Q734.0 225.8 738.3 221.4M928.5 112.6Q932.1 116.2 935.2 120.2M596.5 9.7Q591.6 3.5 585.7 -1.8M740.7 135.9Q737.7 130.0 737.7 123.3M303.4 11.7Q310.4 14.4 317.8 15.4M895.2 171.1Q902.5 166.8 908.6 160.8M836.2 107.7Q840.5 113.4 841.2 120.5M667.9 137.2Q670.2 130.2 672.3 123.1M537.1 197.4Q532.1 190.6 530.5 182.4M798.0 213.2Q804.8 217.2 811.8 220.9M758.7 206.5Q759.5 213.2 762.3 219.4M623.5 235.4Q621.5 226.3 619.2 217.2M908.2 142.9Q904.3 135.2 901.1 127.2M878.5 194.4Q883.1 197.0 886.6 201.0M706.1 1.2Q706.0 7.3 705.5 13.3M893.5 109.5Q896.0 114.0 900.1 117.0M745.8 116.1Q740.8 112.9 736.7 108.6M778.9 276.4Q777.9 269.6 774.5 263.6M758.7 206.5Q753.5 203.0 747.3 202.4M926.4 129.8Q930.9 125.1 935.2 120.2M158.3 130.2Q153.3 135.6 148.1 141.0M629.5 128.7Q624.6 126.4 621.9 121.8M613.1 257.6Q621.5 258.6 629.9 257.1M242.2 20.7Q234.3 13.5 224.3 9.6M889.3 254.2Q897.3 255.3 904.9 252.6M809.3 3.4Q806.2 8.2 802.6 12.5M467.8 203.9Q468.7 212.2 471.2 220.2M710.2 150.2Q715.4 150.8 720.7 149.9M726.1 130.0Q732.8 134.3 740.7 135.9M145.5 153.9Q145.8 147.2 148.1 141.0M758.3 135.6Q756.7 141.9 757.7 148.2M855.6 186.1Q856.8 192.6 857.0 199.2M713.0 140.5Q707.0 136.0 699.6 134.5M414.1 296.5Q421.8 298.1 429.5 296.3M252.7 11.5Q251.7 19.1 254.2 26.4M841.4 29.1Q842.0 35.8 839.3 42.1M873.0 211.7Q872.3 205.3 868.0 200.4M313.6 69.3Q306.1 73.6 300.7 80.4M425.7 266.3Q418.8 261.4 412.6 255.6M788.7 243.7Q786.3 238.7 783.9 233.6M355.2 258.6Q357.2 253.0 357.1 247.0M204.1 274.8Q210.6 282.8 219.6 287.8M524.2 300.4Q529.4 295.6 531.5 288.9M924.0 60.8Q932.8 59.2 941.5 61.2M349.7 76.1Q349.6 83.4 351.8 90.5M326.7 20.1Q318.6 22.0 310.3 22.8M629.3 278.5Q619.3 280.9 609.4 283.2M424.1 249.0Q421.6 239.4 417.6 230.3M603.2 193.1Q608.2 188.8 614.2 186.1M702.5 231.0Q702.6 238.0 705.6 244.3M685.5 20.4Q687.5 26.3 691.0 31.5M927.0 281.1Q931.3 277.8 934.9 273.7M560.7 266.2Q566.4 266.4 572.1 265.5M530.5 182.4Q528.4 189.1 523.5 194.2M356.9 106.9Q360.4 102.8 360.1 97.4M758.3 135.6Q752.2 141.6 746.9 148.2M847.1 246.2Q843.1 241.1 840.1 235.3M642.2 117.1Q647.6 122.0 649.9 128.9M336.1 106.2Q341.3 104.2 344.8 99.9M394.8 10.2Q389.6 6.7 387.5 0.8M539.3 254.3Q545.1 255.8 551.1 255.3M655.2 101.5Q661.0 106.4 664.2 113.4M660.4 155.2Q665.5 161.2 667.4 169.0M441.1 194.9Q439.5 188.0 438.4 181.0M927.0 281.1Q925.3 273.6 925.6 265.9M613.1 257.6Q611.7 264.5 609.6 271.2M854.6 268.4Q856.8 274.8 861.2 279.9M566.2 253.8Q573.3 247.4 579.0 239.6M684.0 133.6Q677.6 129.0 672.3 123.1M537.3 239.4Q539.4 234.7 542.4 230.5M698.1 75.6Q696.0 80.7 696.5 86.2M748.6 89.1Q757.0 91.1 765.4 93.3M616.4 111.8Q620.3 116.1 621.9 121.8M842.4 77.6Q849.3 81.5 853.8 88.1M593.9 288.5Q589.9 294.9 588.7 302.4M528.1 152.5Q533.6 148.2 536.6 141.9M577.2 170.3Q584.7 174.8 590.0 181.7M839.6 283.2Q833.6 276.0 830.5 267.2M546.8 221.4Q538.2 224.9 531.2 231.0M801.4 270.0Q799.1 265.4 795.9 261.3M567.7 34.8Q563.8 27.6 559.9 20.5M737.4 207.7Q743.3 209.0 748.1 212.7M809.6 25.6Q806.2 31.5 803.1 37.6M879.7 270.7Q874.1 272.6 868.2 271.5M572.0 125.5Q569.2 119.1 565.8 113.0M889.6 120.5Q882.3 115.3 876.1 108.8M769.0 135.1Q764.5 142.6 757.7 148.2M444.8 253.0Q449.2 248.4 454.9 245.4M427.4 29.1Q421.8 25.6 417.7 20.6M459.3 135.1Q453.4 137.8 446.9 137.2M701.2 64.3Q698.4 69.6 698.1 75.6M913.3 113.2Q912.6 121.9 912.2 130.6M595.2 256.4Q597.2 263.3 596.4 270.4M174.4 122.9Q167.3 120.5 160.7 116.8M927.0 281.1Q931.9 286.0 935.7 291.8M264.5 280.1Q271.7 282.4 278.8 285.1M880.4 99.6Q888.0 103.1 893.5 109.5M643.4 286.5Q652.2 283.0 661.7 283.2M919.4 217.2Q927.0 211.9 936.2 210.2M648.1 24.7Q644.2 28.2 639.8 31.0M327.8 260.3Q323.6 250.5 320.3 240.4M488.7 206.5Q478.1 206.4 467.8 203.9M555.2 107.4Q560.0 102.0 565.1 96.8M919.4 217.2Q925.1 217.8 930.9 218.9M345.0 233.6Q338.7 236.2 333.6 240.8M591.1 98.8Q586.1 102.2 582.6 107.1M768.6 41.1Q771.4 45.9 771.8 51.5M478.6 293.5Q472.9 286.2 469.8 277.6M788.7 243.7Q780.8 239.9 773.8 234.6M919.2 229.2Q922.6 237.7 922.2 246.9M179.5 18.1Q175.5 12.4 169.1 9.7M735.9 155.6Q728.6 151.7 720.7 149.9M801.3 223.1Q798.6 218.5 798.0 213.2M643.2 60.9Q640.1 66.6 638.6 72.8M595.4 211.4Q587.5 209.4 580.4 205.5M609.0 246.1Q606.7 254.5 603.4 262.6M936.2 210.2Q934.4 215.1 930.9 218.9M913.4 268.5Q921.4 273.5 927.0 281.1M351.2 25.3Q350.4 30.6 349.5 36.0M545.8 151.3Q549.0 158.3 554.4 163.7M488.7 206.5Q486.0 211.7 485.0 217.5M636.5 198.8Q640.5 193.2 641.6 186.4M821.1 298.0Q817.0 291.8 815.4 284.7M912.2 41.6Q905.6 38.3 899.9 33.6M708.8 78.1Q702.8 82.5 696.5 86.2M854.2 40.6Q852.8 46.5 851.4 52.5M504.5 276.7Q494.6 278.1 484.7 279.7M444.8 253.0Q440.5 247.3 435.7 242.0M581.4 83.5Q574.0 84.4 566.9 82.4M423.5 208.5Q419.0 200.8 412.6 194.6"/>
<path fill="none" stroke="#f8d67c" stroke-width="1.250" stroke-linecap="round" d="M767.4 232.5C770.5 224.5 772.5 216.5 770.4 207.9M397.5 77.2C392.9 84.7 387.1 91.3 380.7 97.5M654.8 201.6C644.5 196.2 635.8 189.1 629.1 179.5M787.0 182.5C788.8 174.6 793.8 167.6 793.5 159.2M706.1 269.3C699.0 276.8 689.7 281.6 681.7 288.1M910.6 135.4C918.9 146.2 918.6 161.2 927.9 171.6M518.4 230.6C529.7 236.4 542.4 239.1 552.7 247.0M898.1 74.8C885.8 77.3 873.8 76.9 862.1 71.9M583.7 104.9C578.7 100.7 580.2 93.4 575.9 88.9M552.7 247.0C558.6 251.8 563.0 258.2 568.7 263.3M658.7 257.7C646.7 258.1 636.7 250.6 625.3 248.8M578.4 236.7C579.2 228.7 582.4 221.8 588.1 216.1M709.9 241.9C716.5 235.2 720.1 226.4 725.2 218.7M823.2 150.3C830.6 155.3 839.2 154.2 847.4 154.8M577.2 30.5C572.3 39.2 565.2 46.5 561.5 56.0M606.8 70.9C612.0 74.5 617.3 77.6 624.0 76.7M738.7 236.4C743.7 230.2 744.1 221.5 749.7 215.6M548.3 100.9C547.8 107.9 541.7 111.9 539.0 117.7M770.4 207.9C776.2 199.6 778.2 188.8 787.0 182.5M562.3 18.7C563.8 12.4 570.3 9.6 572.9 4.1M732.7 94.1C736.6 103.4 747.3 107.2 750.9 116.7M662.0 105.7C662.5 112.0 671.2 112.9 671.3 119.5M340.7 26.1C351.1 30.5 360.5 37.1 372.0 38.7M674.4 231.1C673.0 217.7 681.1 205.9 681.1 192.7M583.7 104.9C577.8 105.2 571.9 105.6 566.3 103.5M578.4 236.7C570.9 228.5 560.9 224.2 551.3 219.2M806.2 103.9C813.6 109.6 815.9 119.6 823.5 125.1M706.9 142.8C699.8 137.7 692.5 132.8 687.0 125.8M599.9 238.1C594.9 231.3 593.0 222.8 588.1 216.1M520.8 81.9C530.6 79.2 540.1 82.4 549.6 84.0M823.2 150.3C823.4 160.2 818.8 169.8 821.9 179.8M869.3 293.3C872.5 283.3 867.4 273.7 868.1 263.8M821.9 179.8C830.1 178.5 834.8 188.2 843.1 186.9M819.8 233.7C815.3 226.8 813.4 218.6 808.4 212.0M847.4 154.8C855.6 145.9 865.5 139.6 876.4 134.7M819.8 233.7C817.2 242.2 811.8 249.9 812.0 259.2M688.2 102.5C682.9 108.5 674.3 111.2 671.3 119.5M851.2 278.6C843.8 283.2 834.1 279.1 826.9 284.6M536.1 262.2C540.0 269.8 541.5 277.7 540.1 286.2M688.6 73.6C696.1 73.0 700.9 81.2 708.7 79.7M648.1 125.4C655.6 130.5 657.7 139.4 662.6 146.3M889.0 280.7C893.2 270.5 886.3 259.8 890.6 249.6M734.8 13.9C745.1 15.7 755.2 9.5 765.6 13.0M548.6 135.0C547.5 143.3 556.7 147.6 556.3 155.6M590.7 78.5C594.6 82.9 598.6 87.3 597.9 93.9M741.7 137.4C735.6 134.8 728.8 139.6 722.9 135.6M317.6 279.3C326.6 270.0 338.6 264.6 348.3 256.1M741.7 137.4C747.2 136.0 752.4 132.7 758.4 135.0M910.6 135.4C905.0 124.1 896.8 114.6 888.7 105.1M841.1 45.5C848.2 54.2 856.4 62.1 862.1 71.9M790.9 26.7C780.9 25.1 772.8 19.8 765.6 13.0M549.6 84.0C545.1 79.1 540.7 74.2 535.4 70.1M622.9 52.4C622.1 45.3 617.9 41.3 611.5 39.0M596.4 55.6C590.4 52.7 584.3 56.4 578.3 55.4M662.0 105.7C667.2 101.6 667.8 93.5 674.6 90.6M716.0 62.7C709.8 61.7 705.8 55.2 698.9 55.9M619.5 273.7C623.0 281.5 626.5 289.2 630.9 296.5M672.3 69.7C667.4 72.3 663.9 77.7 657.6 77.8M806.2 103.9C800.3 92.4 791.7 82.7 784.1 72.4M639.9 69.3C645.9 67.7 650.8 63.8 656.3 61.3M841.1 45.5C847.0 41.1 848.9 32.5 856.8 30.1M609.3 157.7C614.6 146.7 625.3 140.7 632.6 131.5M645.9 33.6C653.9 37.0 661.6 40.9 669.0 45.5M688.2 102.5C686.0 95.8 680.7 92.7 674.6 90.6M823.2 150.3C813.5 153.9 803.8 157.6 793.5 159.2M775.8 122.4C771.8 129.1 766.1 133.4 758.4 135.0M747.3 193.4C741.3 203.0 732.6 210.3 725.2 218.7M600.1 133.5C611.1 136.7 621.9 134.9 632.6 131.5M658.7 257.7C663.3 270.1 674.7 277.5 681.7 288.1M927.9 171.6C918.7 169.7 910.5 173.3 902.1 176.2M520.8 81.9C524.4 87.4 527.1 93.4 530.2 99.2M329.6 74.0C337.9 78.2 339.9 88.1 347.3 93.1M472.6 205.7C472.5 193.3 469.9 181.5 464.6 170.3M548.6 135.0C546.3 128.8 543.7 122.7 539.0 117.7M725.1 28.2C721.4 33.8 717.7 39.3 712.8 44.0M548.6 135.0C556.9 136.5 565.2 137.1 573.2 139.7M636.1 8.4C639.5 16.8 643.7 24.8 645.9 33.6M503.3 186.2C511.5 189.0 518.2 195.8 527.7 195.3M485.5 116.5C495.7 127.4 508.8 133.8 522.0 140.2M693.5 217.5C688.0 209.9 685.7 200.7 681.1 192.7M348.3 256.1C365.9 257.6 383.2 261.4 400.8 263.0M566.3 103.5C559.4 98.1 557.4 88.6 549.6 84.0M722.4 166.7C722.3 156.4 719.8 145.9 722.9 135.6M705.3 122.2C710.9 127.0 716.1 132.3 722.9 135.6M488.4 252.1C472.4 249.9 456.5 252.2 440.6 253.1M503.3 186.2C514.3 179.3 523.9 170.4 535.0 163.6M308.4 221.8C320.9 217.9 334.2 223.7 346.7 219.1M848.3 225.3C853.1 215.9 860.4 207.9 863.8 197.7M691.0 40.7C698.6 37.8 700.7 28.7 708.2 25.8M527.7 195.3C534.6 204.2 544.3 210.4 551.3 219.2M741.7 137.4C737.2 148.5 729.7 157.5 722.4 166.7M672.3 69.7C678.0 69.9 684.0 68.7 688.6 73.6M915.8 103.9C918.2 92.4 916.6 80.2 922.5 69.4M819.8 233.7C808.8 233.8 798.8 230.6 789.9 224.1M821.9 179.8C825.4 188.5 829.2 197.2 832.4 206.0M596.4 55.6C600.1 48.9 609.3 47.1 611.5 39.0M557.3 187.1C567.1 181.4 575.1 173.7 581.2 164.1M370.2 286.1C364.9 274.6 356.9 265.2 348.3 256.1M636.9 90.8C631.2 87.5 626.1 83.5 624.0 76.7M548.1 39.1C558.7 39.3 568.3 36.0 577.2 30.5M808.4 212.0C800.3 202.8 794.0 192.4 787.0 182.5M895.0 28.1C888.8 24.1 883.6 18.4 876.5 15.6M642.4 50.1C644.2 44.7 642.4 38.6 645.9 33.6M793.0 136.7C781.4 136.6 770.0 134.3 758.4 135.0M595.7 268.0C606.3 262.6 615.9 255.8 625.3 248.8M662.0 105.7C657.8 96.8 661.9 86.6 657.6 77.8M608.2 203.3C614.7 208.6 615.1 216.5 617.0 223.8M636.1 8.4C630.1 13.3 624.7 18.5 623.3 26.6M629.1 179.5C630.4 187.2 632.8 194.9 630.4 202.8M308.4 221.8C322.2 232.6 333.2 246.8 348.3 256.1M606.8 70.9C601.8 74.1 595.9 75.5 590.7 78.5M898.1 74.8C888.3 82.4 875.1 84.3 866.7 94.1M910.6 135.4C911.1 149.7 906.7 162.9 902.1 176.2M596.4 55.6C605.2 54.1 614.1 53.2 622.9 52.4M619.5 273.7C611.6 271.7 604.3 267.1 595.7 268.0M826.9 29.1C837.0 26.3 847.0 26.0 856.8 30.1M890.0 157.9C875.8 156.5 861.5 158.1 847.4 154.8M575.9 88.9C567.6 84.6 558.5 84.9 549.6 84.0M527.7 195.3C531.8 185.1 533.2 174.3 535.0 163.6M581.2 164.1C573.1 160.8 565.4 156.0 556.3 155.6M733.9 267.5C728.8 256.2 717.1 251.1 709.9 241.9M789.9 224.1C797.9 222.9 802.0 215.7 808.4 212.0M678.9 161.5C686.3 152.4 699.1 151.2 706.9 142.8M789.9 224.1C798.6 235.0 803.9 247.9 812.0 259.2M681.1 192.7C677.4 184.6 669.0 182.2 662.6 177.4M578.4 236.7C585.3 240.3 592.5 241.2 599.9 238.1M662.6 146.3C659.3 156.7 665.7 167.0 662.6 177.4M678.9 161.5C682.6 149.8 686.4 138.2 687.0 125.8M609.3 157.7C600.4 161.9 590.4 161.0 581.2 164.1M806.2 103.9C795.3 108.8 786.4 117.0 775.8 122.4M847.4 154.8C840.3 144.3 829.4 136.7 823.5 125.1M793.0 136.7C803.9 134.8 812.9 127.8 823.5 125.1M340.7 26.1C331.4 33.8 327.1 46.2 316.4 52.7M617.5 96.1C612.5 105.6 605.1 112.7 595.4 117.4M754.2 255.6C749.2 262.6 739.3 261.1 733.9 267.5M596.4 55.6C597.4 62.4 603.2 66.0 606.8 70.9M898.1 74.8C906.2 72.7 913.8 68.4 922.5 69.4M600.1 133.5C595.6 144.8 588.4 154.5 581.2 164.1M646.2 162.3C644.8 150.6 637.4 141.6 632.6 131.5M681.7 288.1C689.9 290.9 698.3 292.7 706.9 293.3M674.6 90.6C667.0 88.9 663.7 81.5 657.6 77.8M882.3 57.7C876.4 63.6 870.8 69.9 862.1 71.9M718.1 193.0C709.8 189.0 705.6 179.9 697.1 176.0M826.9 284.6C826.7 276.4 828.5 268.9 833.4 262.2M898.1 74.8C896.0 85.2 894.7 95.8 888.7 105.1M672.3 69.7C667.6 62.1 671.7 53.3 669.0 45.5M888.7 105.1C885.8 115.4 878.6 124.1 876.4 134.7M647.3 282.1C642.3 287.5 635.8 291.2 630.9 296.5M662.0 105.7C652.9 106.0 644.9 112.5 635.4 110.6M372.0 38.7C384.1 43.0 395.0 50.6 408.1 51.8M617.5 96.1C622.1 90.5 619.0 82.2 624.0 76.7M716.0 62.7C723.7 67.2 732.4 69.3 739.8 74.2M750.9 116.7C753.2 122.9 756.3 128.7 758.4 135.0M804.9 64.3C813.9 66.9 823.1 67.8 832.2 69.7M527.7 195.3C522.6 206.5 523.7 219.4 518.4 230.6M599.9 238.1C605.0 232.6 611.2 228.5 617.0 223.8M536.1 262.2C542.8 258.4 548.6 253.7 552.7 247.0M592.5 186.5C599.7 177.8 602.1 166.4 609.3 157.7M851.2 278.6C857.0 273.8 863.0 269.4 868.1 263.8M732.7 94.1C725.0 88.8 717.7 82.9 708.7 79.7M832.2 69.7C838.5 74.2 842.3 80.6 845.2 87.6M688.6 73.6C693.9 68.8 694.7 61.4 698.9 55.9M566.3 103.5C571.9 100.2 575.1 95.3 575.9 88.9M686.9 250.3C694.7 247.8 701.3 242.1 709.9 241.9M915.8 103.9C912.5 92.6 902.9 85.1 898.1 74.8M889.0 280.7C895.2 272.2 906.9 272.5 913.9 265.2M581.2 164.1C576.1 156.8 579.1 146.8 573.2 139.7M420.2 88.1C415.8 76.1 412.0 63.9 408.1 51.8M913.9 265.2C904.5 262.5 897.6 255.9 890.6 249.6M629.1 179.5C616.2 178.1 604.6 183.7 592.5 186.5M592.5 186.5C590.8 196.3 591.3 206.5 588.1 216.1M747.3 193.4C745.5 181.4 750.4 169.6 748.0 157.7M706.9 142.8C707.3 135.9 707.1 129.0 705.3 122.2M770.2 166.5C774.0 173.6 781.1 177.4 787.0 182.5M485.5 116.5C498.5 106.2 508.3 92.7 520.8 81.9M691.0 40.7C696.4 32.8 697.6 24.1 695.4 14.8M622.9 52.4C626.2 43.8 624.9 35.2 623.3 26.6M687.0 125.8C679.9 133.9 671.4 140.2 662.6 146.3M924.7 38.8C927.1 49.2 924.7 59.3 922.5 69.4M747.3 193.4C740.8 182.9 732.5 173.9 722.4 166.7M488.4 252.1C497.1 243.1 508.3 237.7 518.4 230.6M306.9 88.9C307.3 76.1 310.0 64.0 316.4 52.7M669.0 45.5C678.2 51.2 688.1 54.9 698.9 55.9M577.2 30.5C574.0 22.0 577.0 12.5 572.9 4.1M551.3 219.2C563.7 219.6 575.5 213.2 588.1 216.1M371.6 73.6C368.5 64.7 359.8 61.2 353.9 54.9M789.9 224.1C783.7 218.4 776.0 214.4 770.4 207.9M910.6 135.4C917.6 132.6 922.8 126.7 930.1 124.3M862.1 71.9C861.4 79.8 863.8 87.0 866.7 94.1M832.2 69.7C842.4 67.5 852.5 67.5 862.1 71.9M879.2 178.9C875.0 185.9 868.3 191.0 863.8 197.7M583.7 104.9C575.2 108.2 573.8 118.6 566.1 122.6M595.7 268.0C587.2 263.5 578.1 262.5 568.7 263.3M678.9 161.5C683.2 171.6 677.8 182.5 681.1 192.7M849.7 247.8C856.6 241.6 866.6 240.1 872.7 232.7M895.0 28.1C897.1 19.2 893.4 9.9 896.3 1.0M757.6 88.1C765.5 89.8 773.8 89.7 781.2 93.9M636.1 8.4C627.7 8.4 619.9 6.3 612.6 2.4M488.4 252.1C484.0 236.3 479.5 220.6 472.6 205.7M636.1 8.4C641.8 11.4 647.5 12.4 653.3 8.5M884.7 210.4C894.3 204.3 906.6 206.1 916.2 199.8M548.6 135.0C547.1 146.0 539.2 153.9 535.0 163.6M795.2 288.6C797.7 277.1 803.5 267.4 812.0 259.2M646.2 162.3C651.0 156.3 656.3 150.8 662.6 146.3M658.7 257.7C661.9 247.6 670.3 240.7 674.4 231.1M622.9 52.4C624.3 60.4 620.8 68.7 624.0 76.7M549.6 84.0C547.3 74.9 549.9 65.1 544.8 56.6M681.1 192.7C687.4 188.1 691.2 181.0 697.1 176.0M371.6 73.6C364.1 80.9 354.6 85.6 347.3 93.1M658.7 257.7C653.7 245.2 644.4 235.2 639.1 222.9M578.3 55.4C574.4 47.2 573.6 39.0 577.2 30.5M518.4 230.6C529.0 225.7 540.4 223.2 551.3 219.2M678.9 161.5C672.3 165.6 668.7 172.8 662.6 177.4M889.0 280.7C881.1 282.8 876.2 289.6 869.3 293.3M734.8 13.9C733.0 19.7 730.7 25.1 725.1 28.2M595.4 117.4C589.0 125.9 580.2 131.9 573.2 139.7M849.7 247.8C853.7 255.6 860.0 260.8 868.1 263.8M790.9 26.7C802.7 31.2 814.9 28.2 826.9 29.1M485.5 116.5C497.4 113.9 508.6 120.5 520.4 119.0M718.1 193.0C719.1 184.2 721.8 175.6 722.4 166.7M669.0 45.5C662.5 48.9 660.7 56.1 656.3 61.3M440.6 253.1C426.5 253.1 414.5 261.4 400.8 263.0M688.2 102.5C679.4 103.2 670.3 101.4 662.0 105.7M688.2 102.5C695.4 95.2 702.6 87.9 708.7 79.7M757.6 88.1C758.8 98.5 751.9 106.9 750.9 116.7M854.7 116.4C843.4 116.1 833.3 119.7 823.5 125.1M665.7 26.8C659.1 28.8 653.5 34.0 645.9 33.6M806.2 103.9C815.1 92.6 821.3 79.3 832.2 69.7M747.3 193.4C737.5 195.8 727.8 193.8 718.1 193.0M647.3 282.1C637.2 282.0 629.0 275.9 619.5 273.7M380.9 231.6C387.7 242.0 394.9 252.0 400.8 263.0M770.2 166.5C777.1 161.4 786.4 163.8 793.5 159.2M849.7 247.8C850.8 240.2 851.1 232.7 848.3 225.3M916.2 199.8C916.9 208.5 923.1 215.7 923.6 224.5M755.7 36.8C767.2 32.7 779.0 29.6 790.9 26.7M725.2 115.4C725.3 122.2 725.7 129.1 722.9 135.6M755.7 36.8C761.5 29.9 759.4 19.8 765.6 13.0M709.7 99.7C714.4 105.4 718.7 111.5 725.2 115.4M317.6 279.3C334.9 283.1 353.1 280.5 370.2 286.1M915.8 103.9C922.0 109.7 926.3 116.8 930.1 124.3M693.5 217.5C684.9 219.0 679.8 225.2 674.4 231.1M639.9 69.3C635.2 73.0 629.6 74.9 624.0 76.7M645.9 33.6C638.4 31.2 630.6 29.6 623.3 26.6M889.0 280.7C879.9 277.7 873.7 271.1 868.1 263.8M804.9 64.3C801.3 51.4 793.0 40.2 790.9 26.7M592.4 23.3C598.0 29.4 605.7 33.1 611.5 39.0M639.1 222.9C631.8 225.6 624.2 219.8 617.0 223.8M741.7 137.4C745.2 130.7 745.3 122.5 750.9 116.7M520.8 81.9C525.3 77.6 528.6 71.6 535.4 70.1M882.3 57.7C891.0 59.0 899.1 57.8 906.5 52.8M596.4 55.6C591.8 45.9 581.0 40.9 577.2 30.5M748.0 157.7C747.9 148.5 756.3 143.2 758.4 135.0M613.1 121.3C606.4 123.4 600.7 121.3 595.4 117.4M695.4 14.8C698.1 20.3 704.1 21.9 708.2 25.8M679.3 1.8C670.9 5.2 662.2 7.1 653.3 8.5M733.9 267.5C724.0 275.2 716.8 285.7 706.9 293.3M923.6 224.5C916.0 222.8 908.7 229.0 901.1 225.3M440.6 253.1C448.9 235.7 464.7 223.4 472.6 205.7M804.9 64.3C805.6 77.5 805.6 90.7 806.2 103.9M747.3 193.4C754.9 184.4 763.7 176.4 770.2 166.5M749.7 215.6C741.7 217.6 733.2 216.3 725.2 218.7M530.2 99.2C535.7 104.2 536.6 111.3 539.0 117.7M654.8 201.6C664.4 209.4 666.6 222.1 674.4 231.1M636.9 90.8C641.8 83.3 650.0 81.0 657.6 77.8M639.9 69.3C644.3 75.3 652.2 73.9 657.6 77.8M708.7 79.7C708.7 72.9 715.3 69.1 716.0 62.7M592.5 186.5C580.8 189.6 569.0 184.8 557.3 187.1M340.7 26.1C343.0 36.6 352.8 43.8 353.9 54.9M289.1 30.0C284.7 42.0 284.4 55.2 278.3 66.7M913.9 265.2C906.6 252.9 903.8 239.1 901.1 225.3M739.8 74.2C744.5 69.4 747.4 63.4 751.5 58.2M856.8 30.1C863.6 25.6 871.7 22.8 876.5 15.6M795.2 288.6C782.1 284.9 768.4 287.2 755.2 285.0M879.2 178.9C887.0 179.2 894.9 180.7 902.1 176.2M289.1 30.0C277.8 23.5 265.3 20.2 253.2 16.1M778.2 259.3C772.4 251.3 769.8 241.9 767.4 232.5M575.9 88.9C571.5 77.7 568.3 66.1 561.5 56.0M317.6 279.3C316.3 259.8 313.7 240.6 308.4 221.8M884.7 210.4C880.6 217.8 874.0 223.9 872.7 232.7M672.3 69.7C682.5 67.7 689.9 60.3 698.9 55.9M603.5 296.3C612.6 295.0 621.8 293.1 630.9 296.5M895.0 28.1C890.9 38.0 883.7 46.6 882.3 57.7M583.7 104.9C587.6 109.1 591.9 112.9 595.4 117.4M849.7 247.8C848.4 258.2 853.8 268.2 851.2 278.6M747.3 193.4C759.5 186.2 773.7 186.1 787.0 182.5M578.3 55.4C572.6 54.0 567.0 52.7 561.5 56.0M380.9 231.6C369.8 239.4 357.5 245.8 348.3 256.1M819.8 233.7C825.7 225.2 825.7 214.1 832.4 206.0M281.2 109.1C276.5 95.2 276.0 81.1 278.3 66.7M924.7 38.8C913.5 39.0 905.1 31.3 895.0 28.1M372.0 38.7C368.6 47.0 357.7 46.9 353.9 54.9M549.6 84.0C553.1 74.4 559.5 66.1 561.5 56.0M823.5 125.1C828.6 111.3 838.8 100.5 845.2 87.6M770.4 207.9C783.2 208.1 795.4 213.7 808.4 212.0M575.9 88.9C579.8 84.0 585.3 81.3 590.7 78.5M821.9 179.8C816.2 190.0 810.0 200.1 808.4 212.0M706.1 269.3C715.3 266.7 724.5 265.8 733.9 267.5M578.3 55.4C580.2 64.3 583.3 72.6 590.7 78.5M636.9 90.8C634.3 97.3 633.4 103.8 635.4 110.6M289.1 30.0C296.2 26.4 304.6 25.3 310.6 19.3M748.0 157.7C738.8 158.7 730.7 163.0 722.4 166.7M882.3 57.7C872.9 49.4 866.0 38.7 856.8 30.1M789.9 224.1C789.7 237.1 783.3 248.0 778.2 259.3M556.3 155.6C561.3 149.7 569.1 146.7 573.2 139.7M592.5 186.5C591.1 177.8 583.7 172.2 581.2 164.1M647.3 282.1C641.7 269.9 631.7 260.5 625.3 248.8M672.3 69.7C665.8 69.1 661.2 65.0 656.3 61.3M648.1 125.4C644.5 119.9 636.9 117.9 635.4 110.6M706.9 142.8C700.7 153.0 696.8 163.9 697.1 176.0M706.1 269.3C707.7 260.2 707.8 250.9 709.9 241.9M253.2 16.1C250.1 35.8 247.3 55.4 243.0 74.9M430.9 287.8C432.3 275.7 438.4 265.0 440.6 253.1M632.6 131.5C630.3 124.1 634.7 117.6 635.4 110.6M823.2 150.3C827.1 142.0 823.1 133.5 823.5 125.1M592.5 186.5C596.9 192.9 603.1 197.6 608.2 203.3M708.7 79.7C702.5 73.0 701.9 64.0 698.9 55.9M674.4 231.1C662.9 227.1 651.1 224.5 639.1 222.9M688.2 102.5C684.2 110.1 686.2 118.0 687.0 125.8M253.2 16.1C264.2 31.7 273.2 48.3 278.3 66.7M793.0 136.7C791.9 144.2 792.9 151.7 793.5 159.2M578.5 285.4C586.6 281.8 590.2 274.0 595.7 268.0M821.9 179.8C810.3 181.2 798.8 184.6 787.0 182.5M832.4 206.0C824.2 207.4 816.7 211.2 808.4 212.0M608.2 203.3C615.6 203.1 623.0 203.8 630.4 202.8M688.6 73.6C684.6 79.8 678.8 84.5 674.6 90.6M706.9 142.8C710.8 137.3 717.2 137.1 722.9 135.6M253.2 16.1C233.6 16.7 214.1 17.9 194.9 22.0M890.0 157.9C883.8 151.1 880.3 142.8 876.4 134.7M916.7 15.0C907.9 13.2 904.7 3.4 896.3 1.0M821.9 179.8C831.3 172.4 840.0 164.2 847.4 154.8M566.3 103.5C569.1 109.9 562.4 116.2 566.1 122.6M622.9 52.4C629.5 57.1 636.2 61.7 639.9 69.3M732.7 94.1C725.2 96.9 717.9 100.1 709.7 99.7M665.7 26.8C660.1 21.6 660.7 12.3 653.3 8.5M592.4 23.3C583.2 19.7 582.0 7.9 572.9 4.1M603.5 296.3C598.1 287.7 595.6 278.2 595.7 268.0M609.3 157.7C621.8 158.1 633.8 161.9 646.2 162.3M884.7 210.4C892.7 200.1 895.4 187.1 902.1 176.2M566.1 122.6C576.4 123.9 586.0 121.3 595.4 117.4M890.0 157.9C895.1 148.8 902.0 141.3 910.6 135.4M588.1 216.1C597.1 221.1 606.7 223.7 617.0 223.8M578.4 236.7C583.4 247.6 590.4 257.3 595.7 268.0M596.4 55.6C595.3 63.5 591.1 70.5 590.7 78.5M819.8 233.7C826.5 242.2 827.3 253.4 833.4 262.2M732.5 57.2C726.3 52.1 719.6 48.1 712.8 44.0M394.7 29.8C401.9 35.4 406.4 42.7 408.1 51.8M394.7 29.8C404.6 29.7 414.6 27.1 424.4 30.8M370.2 286.1C378.5 275.9 389.2 268.8 400.8 263.0M606.8 70.9C607.5 80.5 615.9 86.9 617.5 96.1M617.5 96.1C622.1 102.7 629.6 105.5 635.4 110.6M691.0 40.7C684.1 44.3 676.0 42.5 669.0 45.5M636.9 90.8C645.0 96.3 654.9 98.7 662.0 105.7M566.1 122.6C561.8 128.9 554.5 130.9 548.6 135.0M578.5 285.4C576.7 277.4 571.6 270.8 568.7 263.3M603.5 296.3C606.5 287.2 612.5 280.1 619.5 273.7M910.6 135.4C899.2 138.5 887.9 131.6 876.4 134.7M371.6 73.6C384.7 67.8 397.7 61.9 408.1 51.8M596.4 55.6C597.1 44.6 593.3 34.1 592.4 23.3M472.6 205.7C488.1 213.6 504.5 219.9 518.4 230.6M854.7 116.4C850.0 128.8 847.9 141.6 847.4 154.8M535.0 163.6C542.7 162.6 549.9 160.2 556.3 155.6M316.4 52.7C328.7 56.0 341.4 55.2 353.9 54.9M648.1 125.4C655.4 120.7 659.5 113.8 662.0 105.7M845.2 87.6C853.1 84.8 856.5 77.2 862.1 71.9M592.4 23.3C602.5 26.3 612.9 26.1 623.3 26.6M927.9 171.6C924.1 181.0 920.7 190.6 916.2 199.8M795.2 288.6C788.5 279.5 781.0 270.8 778.2 259.3M603.5 296.3C594.6 294.0 586.8 289.1 578.5 285.4M548.3 100.9C548.8 95.3 550.1 89.7 549.6 84.0M734.8 13.9C743.6 19.9 750.0 28.1 755.7 36.8M854.7 116.4C858.6 108.9 864.0 102.2 866.7 94.1M778.2 259.3C789.5 256.0 800.7 259.2 812.0 259.2M394.7 29.8C388.0 35.0 379.3 35.1 372.0 38.7M600.1 133.5C590.5 133.0 582.4 138.6 573.2 139.7M316.4 52.7C304.8 60.5 290.4 60.5 278.3 66.7M854.7 116.4C850.8 107.0 848.2 97.3 845.2 87.6M775.8 122.4C775.3 112.4 778.6 103.2 781.2 93.9M530.2 99.2C525.8 105.3 522.1 111.6 520.4 119.0M371.6 73.6C369.1 61.9 370.1 50.3 372.0 38.7M617.5 96.1C610.8 96.7 604.2 96.6 597.9 93.9M895.0 28.1C899.9 35.9 901.6 45.1 906.5 52.8M606.8 70.9C603.0 78.2 600.3 86.0 597.9 93.9M535.0 163.6C527.4 157.6 529.8 146.1 522.0 140.2M646.2 162.3C650.1 169.0 657.1 172.4 662.6 177.4M485.5 116.5C476.5 133.6 473.1 152.9 464.6 170.3M688.2 102.5C694.8 97.7 702.9 104.2 709.7 99.7M884.7 210.4C879.3 203.5 868.7 205.3 863.8 197.7M848.3 225.3C843.1 218.8 839.8 210.8 832.4 206.0M629.1 179.5C640.5 182.1 651.2 174.2 662.6 177.4M340.7 26.1C346.1 17.6 357.5 17.1 363.4 9.2M784.1 72.4C774.3 65.3 763.8 59.6 751.5 58.2M747.3 193.4C745.2 201.1 750.9 208.0 749.7 215.6M710.8 7.0C705.3 9.0 698.9 8.9 695.4 14.8M595.4 117.4C597.3 109.7 598.2 101.8 597.9 93.9M848.3 225.3C857.1 225.7 865.6 226.7 872.7 232.7M804.9 64.3C810.0 51.2 816.9 39.2 826.9 29.1M890.0 157.9C896.3 162.5 895.6 171.7 902.1 176.2M832.4 206.0C843.9 207.1 852.5 197.6 863.8 197.7M654.8 201.6C662.7 196.0 673.1 198.1 681.1 192.7M755.7 36.8C754.8 44.0 749.9 50.4 751.5 58.2M733.9 267.5C737.9 257.5 736.6 246.7 738.7 236.4M913.9 265.2C917.6 275.3 915.8 286.5 919.9 296.5M843.1 186.9C839.8 193.4 833.3 198.2 832.4 206.0M281.2 109.1C266.5 99.9 256.7 85.2 243.0 74.9M847.4 154.8C843.1 165.1 840.7 175.7 843.1 186.9M316.4 52.7C314.4 41.6 312.8 30.4 310.6 19.3M767.4 232.5C759.4 229.0 754.0 222.9 749.7 215.6M738.7 236.4C728.7 236.0 720.1 242.8 709.9 241.9M725.1 28.2C719.6 26.3 713.8 26.9 708.2 25.8M617.5 96.1C615.9 104.5 611.8 112.4 613.1 121.3M706.1 269.3C700.8 261.9 693.1 256.8 686.9 250.3M578.4 236.7C568.6 237.2 561.2 243.4 552.7 247.0M642.4 50.1C650.7 45.3 659.6 44.1 669.0 45.5M712.8 44.0C710.5 50.7 704.3 52.9 698.9 55.9M397.5 77.2C401.2 68.8 403.4 59.7 408.1 51.8M629.1 179.5C635.9 174.8 642.0 169.5 646.2 162.3M686.9 250.3C683.7 243.3 679.3 237.0 674.4 231.1M363.4 9.2C372.1 3.8 381.7 1.8 391.9 2.2M540.1 286.2C551.5 280.9 559.3 271.2 568.7 263.3M732.5 57.2C727.1 59.4 721.0 59.3 716.0 62.7M636.9 90.8C629.5 89.0 623.6 93.1 617.5 96.1M804.9 64.3C794.6 58.2 783.3 54.7 772.0 51.4M608.2 203.3C602.2 208.7 596.8 214.9 588.1 216.1M306.9 88.9C316.0 86.1 321.4 78.0 329.6 74.0M913.9 265.2C920.8 252.5 918.8 237.7 923.6 224.5M540.1 286.2C552.8 282.2 565.8 288.4 578.5 285.4M879.2 178.9C867.5 182.9 854.7 182.2 843.1 186.9M535.4 70.1C540.2 66.8 543.5 62.4 544.8 56.6M687.0 125.8C693.4 126.1 699.3 123.7 705.3 122.2M757.6 88.1C754.1 80.4 747.0 77.2 739.8 74.2M503.3 186.2C493.4 193.2 483.4 200.1 472.6 205.7M413.8 202.5C433.3 205.0 453.0 204.9 472.6 205.7M236.1 281.5C220.3 285.8 203.4 285.7 188.5 293.6M804.9 64.3C797.0 64.4 792.0 72.3 784.1 72.4M895.0 28.1C882.2 26.2 869.4 27.1 856.8 30.1M741.7 137.4C733.6 132.0 733.0 121.0 725.2 115.4M575.9 88.9C576.2 77.7 574.6 66.3 578.3 55.4M592.4 23.3C601.4 18.5 607.8 11.2 612.6 2.4M725.2 115.4C733.9 112.3 742.4 114.7 750.9 116.7M672.3 69.7C676.0 76.4 674.5 83.6 674.6 90.6M665.7 26.8C668.1 17.3 672.1 8.7 679.3 1.8M706.1 269.3C707.4 277.3 709.1 285.2 706.9 293.3M551.3 219.2C551.6 228.5 550.1 237.9 552.7 247.0M557.3 187.1C546.6 186.9 537.2 191.1 527.7 195.3M841.1 45.5C837.4 39.1 831.9 34.3 826.9 29.1"/>
<path fill="none" stroke="#f3bf55" stroke-width="2.300" stroke-linejoin="round" d="M366.0 55.0Q349.1 49.0 340.2 47.3Q331.3 45.7 323.3 41.3Q315.3 37.0 310.3 31.5Q305.3 26.1 301.8 19.7Q298.4 13.2 295.2 6.6L292.0 0.0M366.0 55.0Q350.1 57.3 342.1 57.6Q334.1 57.9 326.0 57.2Q318.0 56.5 310.0 56.1Q302.0 55.8 294.0 56.8Q286.0 57.9 278.0 58.2Q270.0 58.5 262.0 58.5Q254.0 58.5 247.5 58.7Q240.9 58.9 234.5 58.0Q228.0 57.0 221.1 55.3Q214.2 53.7 207.1 53.3L200.0 53.0M254.0 58.5Q245.2 73.4 239.4 79.8Q233.6 86.1 226.6 91.5Q219.5 96.8 215.3 104.4Q211.0 112.0 207.2 117.1Q203.3 122.2 196.9 124.4Q190.5 126.6 186.7 131.8L183.0 137.0M254.0 58.5Q263.9 44.1 269.3 37.2Q274.6 30.3 278.0 22.1Q281.3 13.8 286.6 6.9L292.0 0.0M366.0 55.0Q355.5 68.8 349.6 74.9Q343.7 81.1 337.7 87.3Q331.7 93.4 324.8 98.7Q318.0 104.0 310.5 106.9Q302.9 109.7 295.0 110.9L287.0 112.0M287.0 112.0Q271.8 112.0 264.2 111.1Q256.6 110.2 249.0 110.2Q241.4 110.3 233.8 111.8Q226.2 113.4 218.6 112.7L211.0 112.0M366.0 55.0Q381.4 63.9 390.3 65.3Q399.3 66.6 406.6 71.8Q414.0 77.1 422.5 79.5L431.0 82.0M366.0 55.0Q369.2 37.7 370.2 28.9Q371.2 20.1 374.6 11.8L378.0 3.6M366.0 55.0Q368.1 71.3 367.4 79.5Q366.6 87.7 366.3 95.8L366.0 104.0M366.0 55.0Q360.1 41.8 358.2 34.9Q356.4 28.0 354.9 20.9Q353.5 13.9 351.8 6.9L350.0 0.0M318.0 104.0Q320.1 87.1 319.4 78.8Q318.7 70.4 318.5 62.0Q318.4 53.7 316.8 45.3L315.3 37.0M455.0 96.0Q469.2 88.7 476.8 87.0Q484.5 85.3 492.6 85.1Q500.7 84.9 507.9 81.4Q515.0 78.0 520.8 80.4Q526.6 82.9 532.3 85.4Q538.0 88.0 546.4 91.0Q554.8 94.1 562.4 98.8L570.0 103.5M455.0 96.0Q469.8 99.8 476.8 102.5Q483.9 105.1 490.2 109.7Q496.5 114.3 503.8 116.5Q511.0 118.8 518.0 122.0Q525.0 125.2 532.7 125.4Q540.5 125.7 547.7 127.9Q555.0 130.0 561.4 130.8Q567.7 131.6 573.9 129.8Q580.0 128.0 584.5 126.8Q589.0 125.7 593.5 126.8Q598.0 128.0 605.3 126.7Q612.6 125.3 618.9 121.6Q625.3 117.8 632.3 114.9Q639.2 112.0 645.6 108.0Q652.0 104.0 657.9 101.9Q663.9 99.8 669.9 98.4Q676.0 97.1 682.3 96.7L688.6 96.4M511.0 118.8Q519.5 108.1 524.5 103.4Q529.5 98.7 533.7 93.3Q538.0 88.0 544.9 87.6Q551.7 87.2 558.3 85.5Q564.9 83.7 571.4 81.8L578.0 80.0M455.0 96.0Q465.3 108.3 468.8 115.5Q472.4 122.8 477.1 129.2Q481.8 135.7 486.9 141.9Q492.0 148.0 497.7 154.0Q503.5 160.0 509.2 166.0Q515.0 172.0 519.5 179.0Q524.1 186.0 529.7 192.2Q535.4 198.3 540.2 205.2Q545.0 212.0 548.6 216.9Q552.2 221.8 557.4 225.1Q562.6 228.4 566.3 233.2Q570.0 238.0 578.1 236.7Q586.2 235.5 594.3 233.6Q602.4 231.8 610.6 231.9Q618.9 231.9 627.2 232.9Q635.6 233.8 643.7 232.9Q651.9 232.0 660.0 230.0Q668.0 228.0 673.3 225.9Q678.7 223.8 684.3 222.9Q690.0 222.0 698.1 218.5Q706.3 215.1 715.3 214.2Q724.3 213.4 732.0 208.5Q739.7 203.6 748.3 201.7L757.0 199.8M511.0 118.8Q499.0 131.8 495.5 139.9Q492.0 148.0 489.9 155.8Q487.9 163.7 488.4 171.9Q488.9 180.1 486.6 187.9Q484.3 195.7 483.5 203.7Q482.7 211.8 481.3 219.7Q479.9 227.6 479.5 235.7L479.0 243.8M455.0 96.0Q453.7 111.1 455.9 118.4Q458.2 125.6 460.3 132.9Q462.3 140.1 461.7 147.7Q461.1 155.2 462.0 162.6Q463.0 170.0 462.0 177.5Q461.0 184.9 461.5 192.5Q462.0 200.0 463.7 207.8Q465.3 215.5 469.4 222.3Q473.4 229.1 476.2 236.4L479.0 243.8M463.0 170.0Q480.3 170.8 489.0 172.0Q497.6 173.2 506.3 172.6L515.0 172.0M463.0 170.0Q449.7 181.5 442.5 186.5Q435.2 191.6 428.6 197.3L421.9 203.0M479.0 243.8Q466.1 231.7 458.2 227.6Q450.4 223.4 443.0 218.7Q435.7 213.9 428.8 208.4Q421.9 203.0 414.7 203.0Q407.6 202.9 400.9 199.7Q394.3 196.6 387.1 196.3L380.0 196.0M421.9 203.0Q405.4 208.2 396.6 209.0Q387.9 209.8 379.5 212.2Q371.2 214.6 363.1 217.8Q355.0 221.0 348.3 218.2Q341.5 215.3 335.9 210.3Q330.2 205.3 323.7 202.2Q317.1 199.1 309.7 197.5Q302.3 195.9 296.2 191.9L290.0 188.0M355.0 221.0Q345.3 233.2 341.1 239.9Q336.9 246.6 331.3 252.1Q325.7 257.7 321.2 264.1Q316.8 270.5 311.8 276.6Q306.9 282.7 301.4 288.3L296.0 294.0M355.0 221.0Q360.7 234.7 363.9 241.3Q367.1 248.0 369.5 255.0Q372.0 262.0 374.4 268.1Q376.8 274.2 377.1 280.9Q377.4 287.5 379.2 293.7L381.0 300.0M296.0 294.0Q280.4 285.9 272.3 282.2Q264.2 278.6 257.1 273.3Q250.0 268.0 241.7 268.2Q233.5 268.4 225.2 268.5Q216.9 268.6 209.0 272.1Q201.1 275.7 192.6 273.9Q184.2 272.2 176.1 274.1L168.0 276.0M296.0 294.0Q290.3 282.2 286.9 276.5Q283.5 270.8 281.8 264.4L280.0 258.0M296.0 294.0Q313.1 295.2 321.6 293.6Q330.0 292.0 338.5 293.4Q347.0 294.7 355.6 295.6Q364.1 296.5 372.6 298.3Q381.0 300.0 388.1 295.7Q395.2 291.4 402.2 287.0Q409.2 282.5 417.1 279.7Q424.9 276.9 432.5 273.4Q440.0 270.0 445.8 264.6Q451.6 259.2 459.0 256.1Q466.3 253.0 472.7 248.4L479.0 243.8M296.0 294.0Q280.0 297.9 271.8 297.5Q263.7 297.2 255.5 297.3Q247.4 297.3 239.2 296.8Q231.0 296.3 223.0 298.2L215.0 300.0M296.0 294.0Q295.7 298.5 297.8 299.3L300.0 300.0M168.0 276.0Q176.6 288.3 181.2 294.1L185.9 300.0M479.0 243.8Q492.0 236.9 498.4 233.3Q504.8 229.7 511.3 226.3Q517.8 223.0 524.3 219.7Q530.9 216.4 537.9 214.2L545.0 212.0M479.0 243.8Q472.5 257.6 471.0 265.3Q469.6 273.0 464.8 279.2Q460.0 285.5 457.5 292.8L455.0 300.0M479.0 243.8Q492.6 253.1 499.5 257.7Q506.3 262.2 513.7 265.9Q521.1 269.5 528.6 273.0Q536.0 276.5 542.7 281.3Q549.4 286.1 557.2 289.1Q565.0 292.0 572.5 293.2Q579.9 294.4 587.5 294.2Q595.1 293.9 602.5 296.3Q609.8 298.6 617.5 298.0Q625.1 297.4 632.6 298.7L640.0 300.0M479.0 243.8Q494.1 241.4 501.6 240.7Q509.2 240.0 516.9 240.4Q524.5 240.9 532.0 239.8Q539.6 238.8 547.3 240.3Q555.0 241.8 562.5 239.9L570.0 238.0M440.0 270.0Q434.1 280.5 430.0 285.0Q425.9 289.5 423.0 294.7L420.0 300.0M440.0 270.0Q448.1 284.7 451.5 292.4L455.0 300.0M421.9 203.0Q424.9 220.2 428.5 228.2Q432.1 236.2 433.1 244.9Q434.1 253.6 437.0 261.8L440.0 270.0M570.0 103.5Q571.7 91.0 574.8 85.5Q578.0 80.0 582.1 73.5Q586.3 67.0 588.1 59.5Q590.0 52.0 585.1 45.7Q580.3 39.5 578.0 31.9Q575.7 24.3 580.0 18.4Q584.2 12.4 588.1 6.2L592.0 0.0M570.0 103.5Q561.5 116.2 558.2 123.1L555.0 130.0M570.0 103.5Q579.2 111.8 584.2 115.6Q589.1 119.4 593.5 123.7Q598.0 128.0 603.0 134.9Q607.9 141.8 614.8 146.8Q621.8 151.9 627.0 158.5Q632.2 165.2 636.9 172.3Q641.6 179.5 648.3 184.7Q655.0 190.0 656.1 196.7Q657.2 203.4 659.7 209.6Q662.2 215.8 665.1 221.9Q668.0 228.0 668.5 235.6Q669.0 243.1 670.5 250.6L672.0 258.0M570.0 103.5Q584.2 105.8 591.1 107.3Q598.1 108.9 604.4 113.0Q610.8 117.0 618.0 117.4L625.3 117.8M578.0 80.0Q594.4 76.0 601.9 72.1Q609.4 68.1 617.2 65.0Q625.0 62.0 631.8 60.6Q638.5 59.2 645.2 60.6Q652.0 62.0 659.5 64.6Q667.0 67.2 673.7 71.4L680.4 75.7M590.0 52.0Q594.6 38.5 598.2 32.3Q601.9 26.0 603.4 19.0Q605.0 12.0 601.3 9.5Q597.5 7.1 594.8 3.5L592.0 0.0M605.0 12.0Q623.1 13.2 631.6 16.6Q640.0 20.0 647.3 23.6Q654.6 27.2 660.6 32.6Q666.6 37.9 672.8 43.1Q679.0 48.2 685.2 53.3L691.4 58.4M575.7 24.3Q591.4 20.8 598.2 16.4L605.0 12.0M625.0 62.0Q632.8 49.0 633.9 41.5Q635.0 34.0 637.5 27.0L640.0 20.0M625.3 117.8Q631.6 132.1 634.6 139.3Q637.7 146.5 641.5 153.3Q645.4 160.2 648.3 167.4Q651.2 174.7 653.1 182.3L655.0 190.0M655.0 190.0Q667.1 200.2 673.0 205.5Q678.9 210.7 684.4 216.4L690.0 222.0M672.0 258.0Q689.5 261.1 698.5 260.3Q707.5 259.4 716.3 261.2L725.0 263.0M668.0 228.0Q682.5 236.4 689.7 240.7Q696.8 244.9 703.1 250.7Q709.4 256.5 717.2 259.8Q725.0 263.0 727.9 268.9Q730.9 274.8 733.3 280.9Q735.7 287.0 736.9 293.5L738.0 300.0M672.0 258.0Q662.7 273.1 655.6 278.7Q648.5 284.3 644.2 292.2L640.0 300.0M545.0 212.0Q551.2 227.4 551.0 236.0Q550.7 244.6 553.3 252.4Q555.8 260.3 558.2 268.2Q560.6 276.1 562.8 284.1L565.0 292.0M688.6 96.4Q683.4 86.5 681.9 81.1Q680.4 75.7 683.2 71.4Q686.0 67.1 688.7 62.8Q691.4 58.4 696.7 58.6Q701.9 58.8 706.7 56.5Q711.5 54.3 717.8 49.8Q724.1 45.3 730.0 40.3Q736.0 35.3 741.4 29.7Q746.9 24.2 753.7 20.3Q760.5 16.4 768.2 15.9Q775.9 15.3 783.0 12.3Q790.2 9.2 798.0 9.3Q805.8 9.4 812.9 6.1Q820.0 2.9 827.5 1.5L835.0 0.0M691.4 58.4Q696.7 45.4 701.0 39.8Q705.3 34.2 708.6 28.1Q712.0 22.0 717.7 16.5Q723.4 10.9 729.2 5.5L735.0 0.0M711.5 54.3Q713.2 38.2 712.6 30.1L712.0 22.0M711.5 54.3Q726.7 57.0 734.4 57.7Q742.1 58.5 749.5 61.4Q756.8 64.2 764.8 63.6Q772.7 63.1 780.1 65.4Q787.6 67.7 795.3 68.3Q803.0 69.0 805.8 61.7Q808.7 54.4 811.8 47.2Q815.0 40.0 819.5 33.9Q824.0 27.8 825.7 20.3Q827.4 12.9 831.2 6.4L835.0 0.0M803.0 69.0Q817.9 75.2 826.1 75.9Q834.3 76.5 841.9 79.0Q849.6 81.5 857.2 84.1Q864.8 86.8 872.4 89.4Q880.0 92.0 887.6 88.9Q895.2 85.9 901.9 81.3Q908.6 76.8 915.5 72.6Q922.4 68.4 928.7 63.2L935.0 58.0M815.0 40.0Q829.2 34.7 836.0 31.2Q842.7 27.7 850.2 26.2Q857.8 24.7 864.8 21.8Q871.8 18.9 878.9 16.3Q886.0 13.8 893.0 10.9L900.0 8.0M688.6 96.4Q704.0 101.2 712.2 102.0Q720.3 102.8 727.7 106.4Q735.0 110.0 739.7 115.2Q744.5 120.4 747.6 126.7Q750.8 133.1 754.7 138.9Q758.7 144.6 763.1 150.0L767.6 155.4M711.5 54.3Q718.3 67.8 721.2 74.8Q724.1 81.8 727.2 88.7Q730.4 95.5 732.7 102.8L735.0 110.0M688.6 96.4Q693.1 111.8 697.3 118.6Q701.6 125.5 704.8 132.7Q708.0 140.0 715.7 140.9Q723.4 141.9 730.3 145.9Q737.2 150.0 744.7 151.8Q752.2 153.7 759.9 154.5L767.6 155.4M708.0 140.0Q704.9 156.5 702.6 164.6Q700.3 172.7 699.5 181.1Q698.8 189.5 697.4 197.8Q696.1 206.2 693.1 214.1L690.0 222.0M767.6 155.4Q766.2 170.7 764.3 178.1Q762.5 185.5 759.7 192.6Q757.0 199.8 756.1 208.1Q755.1 216.4 754.6 224.7Q754.0 233.0 751.4 241.2Q748.7 249.4 748.5 258.2Q748.3 267.1 744.6 275.0Q740.9 283.0 739.5 291.5L738.0 300.0M754.0 233.0Q765.9 238.1 771.3 241.9Q776.7 245.7 783.0 247.6Q789.3 249.5 796.2 252.6Q803.2 255.8 810.2 258.6Q817.3 261.4 823.7 265.7Q830.0 270.0 836.5 270.2Q843.0 270.5 849.1 272.7Q855.3 275.0 861.6 276.0Q868.0 277.0 876.1 280.6Q884.2 284.1 891.9 288.6L899.5 293.0M757.0 199.8Q769.0 207.3 774.7 211.4Q780.3 215.6 785.2 220.8Q790.0 226.0 788.4 231.8Q786.8 237.7 788.0 243.6L789.3 249.5M790.0 226.0Q807.4 221.8 816.0 219.3Q824.7 216.9 833.5 215.2Q842.3 213.4 851.1 211.7Q859.9 209.9 868.2 206.3L876.5 202.6M767.6 155.4Q779.6 163.6 786.9 164.6Q794.3 165.6 800.4 169.4Q806.5 173.2 813.3 175.6Q820.0 178.0 827.1 180.9Q834.2 183.9 841.2 187.1Q848.3 190.3 855.1 193.8Q862.0 197.3 869.3 199.9Q876.5 202.6 879.5 209.1Q882.5 215.6 886.0 222.0Q889.4 228.3 891.3 235.3Q893.1 242.4 896.5 248.7Q900.0 255.0 901.2 261.3Q902.3 267.7 900.3 274.0Q898.3 280.3 898.9 286.7L899.5 293.0M876.5 202.6Q889.8 210.8 897.1 213.8Q904.4 216.9 910.7 221.6Q916.9 226.4 923.5 230.7L930.0 235.0M767.6 155.4Q779.7 147.3 784.7 141.9Q789.7 136.6 796.2 133.0Q802.6 129.4 807.3 123.7Q812.0 118.0 811.6 109.6Q811.1 101.3 809.4 93.1Q807.7 85.0 805.4 77.0L803.0 69.0M812.0 118.0Q813.4 133.1 813.8 140.7Q814.2 148.2 817.2 155.5Q820.1 162.7 820.0 170.4L820.0 178.0M820.0 178.0Q819.8 193.5 822.5 201.0Q825.2 208.5 826.2 216.1Q827.1 223.8 828.0 231.4Q828.8 239.1 830.0 246.7Q831.1 254.4 830.6 262.2L830.0 270.0M876.5 202.6Q874.8 190.1 875.0 183.8Q875.1 177.5 875.1 171.3Q875.0 165.0 882.6 164.3Q890.2 163.6 897.6 161.8Q905.0 160.0 907.2 151.4Q909.3 142.8 910.8 134.0Q912.3 125.2 914.9 116.7Q917.6 108.3 922.6 100.5Q927.6 92.8 927.8 83.6Q928.0 74.4 931.5 66.2L935.0 58.0M875.0 165.0Q878.1 150.5 876.5 143.1Q874.9 135.7 877.6 128.5Q880.3 121.4 879.1 113.9Q878.0 106.5 879.0 99.3L880.0 92.0M725.0 263.0Q736.1 254.4 739.5 248.0Q742.9 241.6 748.5 237.3L754.0 233.0M760.5 16.4Q748.8 6.6 741.9 3.3L735.0 0.0M803.0 69.0Q811.8 81.9 816.0 88.5Q820.2 95.1 823.1 102.5Q825.9 109.9 829.8 116.6Q833.7 123.3 837.6 130.1Q841.5 136.9 845.8 143.4Q850.0 150.0 853.5 156.5Q857.0 163.0 860.0 169.7Q863.0 176.4 865.8 183.3Q868.6 190.1 872.5 196.4L876.5 202.6M652.0 104.0Q663.0 96.1 666.9 90.6Q670.8 85.0 675.6 80.4L680.4 75.7M652.0 62.0Q665.0 59.5 671.6 59.0Q678.2 58.6 684.8 58.5L691.4 58.4M366 46a9 9 0 1 0 .1 0ZM479 237a6.500 6.500 0 1 0 .1 0Z"/>
<path fill="none" stroke="#fde59b" stroke-width="1.250" stroke-linejoin="round" d="M366.0 55.0Q349.1 49.0 340.2 47.3Q331.3 45.7 323.3 41.3Q315.3 37.0 310.3 31.5Q305.3 26.1 301.8 19.7Q298.4 13.2 295.2 6.6L292.0 0.0M366.0 55.0Q350.1 57.3 342.1 57.6Q334.1 57.9 326.0 57.2Q318.0 56.5 310.0 56.1Q302.0 55.8 294.0 56.8Q286.0 57.9 278.0 58.2Q270.0 58.5 262.0 58.5Q254.0 58.5 247.5 58.7Q240.9 58.9 234.5 58.0Q228.0 57.0 221.1 55.3Q214.2 53.7 207.1 53.3L200.0 53.0M254.0 58.5Q245.2 73.4 239.4 79.8Q233.6 86.1 226.6 91.5Q219.5 96.8 215.3 104.4Q211.0 112.0 207.2 117.1Q203.3 122.2 196.9 124.4Q190.5 126.6 186.7 131.8L183.0 137.0M254.0 58.5Q263.9 44.1 269.3 37.2Q274.6 30.3 278.0 22.1Q281.3 13.8 286.6 6.9L292.0 0.0M366.0 55.0Q355.5 68.8 349.6 74.9Q343.7 81.1 337.7 87.3Q331.7 93.4 324.8 98.7Q318.0 104.0 310.5 106.9Q302.9 109.7 295.0 110.9L287.0 112.0M287.0 112.0Q271.8 112.0 264.2 111.1Q256.6 110.2 249.0 110.2Q241.4 110.3 233.8 111.8Q226.2 113.4 218.6 112.7L211.0 112.0M366.0 55.0Q381.4 63.9 390.3 65.3Q399.3 66.6 406.6 71.8Q414.0 77.1 422.5 79.5L431.0 82.0M366.0 55.0Q369.2 37.7 370.2 28.9Q371.2 20.1 374.6 11.8L378.0 3.6M366.0 55.0Q368.1 71.3 367.4 79.5Q366.6 87.7 366.3 95.8L366.0 104.0M366.0 55.0Q360.1 41.8 358.2 34.9Q356.4 28.0 354.9 20.9Q353.5 13.9 351.8 6.9L350.0 0.0M318.0 104.0Q320.1 87.1 319.4 78.8Q318.7 70.4 318.5 62.0Q318.4 53.7 316.8 45.3L315.3 37.0M455.0 96.0Q469.2 88.7 476.8 87.0Q484.5 85.3 492.6 85.1Q500.7 84.9 507.9 81.4Q515.0 78.0 520.8 80.4Q526.6 82.9 532.3 85.4Q538.0 88.0 546.4 91.0Q554.8 94.1 562.4 98.8L570.0 103.5M455.0 96.0Q469.8 99.8 476.8 102.5Q483.9 105.1 490.2 109.7Q496.5 114.3 503.8 116.5Q511.0 118.8 518.0 122.0Q525.0 125.2 532.7 125.4Q540.5 125.7 547.7 127.9Q555.0 130.0 561.4 130.8Q567.7 131.6 573.9 129.8Q580.0 128.0 584.5 126.8Q589.0 125.7 593.5 126.8Q598.0 128.0 605.3 126.7Q612.6 125.3 618.9 121.6Q625.3 117.8 632.3 114.9Q639.2 112.0 645.6 108.0Q652.0 104.0 657.9 101.9Q663.9 99.8 669.9 98.4Q676.0 97.1 682.3 96.7L688.6 96.4M511.0 118.8Q519.5 108.1 524.5 103.4Q529.5 98.7 533.7 93.3Q538.0 88.0 544.9 87.6Q551.7 87.2 558.3 85.5Q564.9 83.7 571.4 81.8L578.0 80.0M455.0 96.0Q465.3 108.3 468.8 115.5Q472.4 122.8 477.1 129.2Q481.8 135.7 486.9 141.9Q492.0 148.0 497.7 154.0Q503.5 160.0 509.2 166.0Q515.0 172.0 519.5 179.0Q524.1 186.0 529.7 192.2Q535.4 198.3 540.2 205.2Q545.0 212.0 548.6 216.9Q552.2 221.8 557.4 225.1Q562.6 228.4 566.3 233.2Q570.0 238.0 578.1 236.7Q586.2 235.5 594.3 233.6Q602.4 231.8 610.6 231.9Q618.9 231.9 627.2 232.9Q635.6 233.8 643.7 232.9Q651.9 232.0 660.0 230.0Q668.0 228.0 673.3 225.9Q678.7 223.8 684.3 222.9Q690.0 222.0 698.1 218.5Q706.3 215.1 715.3 214.2Q724.3 213.4 732.0 208.5Q739.7 203.6 748.3 201.7L757.0 199.8M511.0 118.8Q499.0 131.8 495.5 139.9Q492.0 148.0 489.9 155.8Q487.9 163.7 488.4 171.9Q488.9 180.1 486.6 187.9Q484.3 195.7 483.5 203.7Q482.7 211.8 481.3 219.7Q479.9 227.6 479.5 235.7L479.0 243.8M455.0 96.0Q453.7 111.1 455.9 118.4Q458.2 125.6 460.3 132.9Q462.3 140.1 461.7 147.7Q461.1 155.2 462.0 162.6Q463.0 170.0 462.0 177.5Q461.0 184.9 461.5 192.5Q462.0 200.0 463.7 207.8Q465.3 215.5 469.4 222.3Q473.4 229.1 476.2 236.4L479.0 243.8M463.0 170.0Q480.3 170.8 489.0 172.0Q497.6 173.2 506.3 172.6L515.0 172.0M463.0 170.0Q449.7 181.5 442.5 186.5Q435.2 191.6 428.6 197.3L421.9 203.0M479.0 243.8Q466.1 231.7 458.2 227.6Q450.4 223.4 443.0 218.7Q435.7 213.9 428.8 208.4Q421.9 203.0 414.7 203.0Q407.6 202.9 400.9 199.7Q394.3 196.6 387.1 196.3L380.0 196.0M421.9 203.0Q405.4 208.2 396.6 209.0Q387.9 209.8 379.5 212.2Q371.2 214.6 363.1 217.8Q355.0 221.0 348.3 218.2Q341.5 215.3 335.9 210.3Q330.2 205.3 323.7 202.2Q317.1 199.1 309.7 197.5Q302.3 195.9 296.2 191.9L290.0 188.0M355.0 221.0Q345.3 233.2 341.1 239.9Q336.9 246.6 331.3 252.1Q325.7 257.7 321.2 264.1Q316.8 270.5 311.8 276.6Q306.9 282.7 301.4 288.3L296.0 294.0M355.0 221.0Q360.7 234.7 363.9 241.3Q367.1 248.0 369.5 255.0Q372.0 262.0 374.4 268.1Q376.8 274.2 377.1 280.9Q377.4 287.5 379.2 293.7L381.0 300.0M296.0 294.0Q280.4 285.9 272.3 282.2Q264.2 278.6 257.1 273.3Q250.0 268.0 241.7 268.2Q233.5 268.4 225.2 268.5Q216.9 268.6 209.0 272.1Q201.1 275.7 192.6 273.9Q184.2 272.2 176.1 274.1L168.0 276.0M296.0 294.0Q290.3 282.2 286.9 276.5Q283.5 270.8 281.8 264.4L280.0 258.0M296.0 294.0Q313.1 295.2 321.6 293.6Q330.0 292.0 338.5 293.4Q347.0 294.7 355.6 295.6Q364.1 296.5 372.6 298.3Q381.0 300.0 388.1 295.7Q395.2 291.4 402.2 287.0Q409.2 282.5 417.1 279.7Q424.9 276.9 432.5 273.4Q440.0 270.0 445.8 264.6Q451.6 259.2 459.0 256.1Q466.3 253.0 472.7 248.4L479.0 243.8M296.0 294.0Q280.0 297.9 271.8 297.5Q263.7 297.2 255.5 297.3Q247.4 297.3 239.2 296.8Q231.0 296.3 223.0 298.2L215.0 300.0M296.0 294.0Q295.7 298.5 297.8 299.3L300.0 300.0M168.0 276.0Q176.6 288.3 181.2 294.1L185.9 300.0M479.0 243.8Q492.0 236.9 498.4 233.3Q504.8 229.7 511.3 226.3Q517.8 223.0 524.3 219.7Q530.9 216.4 537.9 214.2L545.0 212.0M479.0 243.8Q472.5 257.6 471.0 265.3Q469.6 273.0 464.8 279.2Q460.0 285.5 457.5 292.8L455.0 300.0M479.0 243.8Q492.6 253.1 499.5 257.7Q506.3 262.2 513.7 265.9Q521.1 269.5 528.6 273.0Q536.0 276.5 542.7 281.3Q549.4 286.1 557.2 289.1Q565.0 292.0 572.5 293.2Q579.9 294.4 587.5 294.2Q595.1 293.9 602.5 296.3Q609.8 298.6 617.5 298.0Q625.1 297.4 632.6 298.7L640.0 300.0M479.0 243.8Q494.1 241.4 501.6 240.7Q509.2 240.0 516.9 240.4Q524.5 240.9 532.0 239.8Q539.6 238.8 547.3 240.3Q555.0 241.8 562.5 239.9L570.0 238.0M440.0 270.0Q434.1 280.5 430.0 285.0Q425.9 289.5 423.0 294.7L420.0 300.0M440.0 270.0Q448.1 284.7 451.5 292.4L455.0 300.0M421.9 203.0Q424.9 220.2 428.5 228.2Q432.1 236.2 433.1 244.9Q434.1 253.6 437.0 261.8L440.0 270.0M570.0 103.5Q571.7 91.0 574.8 85.5Q578.0 80.0 582.1 73.5Q586.3 67.0 588.1 59.5Q590.0 52.0 585.1 45.7Q580.3 39.5 578.0 31.9Q575.7 24.3 580.0 18.4Q584.2 12.4 588.1 6.2L592.0 0.0M570.0 103.5Q561.5 116.2 558.2 123.1L555.0 130.0M570.0 103.5Q579.2 111.8 584.2 115.6Q589.1 119.4 593.5 123.7Q598.0 128.0 603.0 134.9Q607.9 141.8 614.8 146.8Q621.8 151.9 627.0 158.5Q632.2 165.2 636.9 172.3Q641.6 179.5 648.3 184.7Q655.0 190.0 656.1 196.7Q657.2 203.4 659.7 209.6Q662.2 215.8 665.1 221.9Q668.0 228.0 668.5 235.6Q669.0 243.1 670.5 250.6L672.0 258.0M570.0 103.5Q584.2 105.8 591.1 107.3Q598.1 108.9 604.4 113.0Q610.8 117.0 618.0 117.4L625.3 117.8M578.0 80.0Q594.4 76.0 601.9 72.1Q609.4 68.1 617.2 65.0Q625.0 62.0 631.8 60.6Q638.5 59.2 645.2 60.6Q652.0 62.0 659.5 64.6Q667.0 67.2 673.7 71.4L680.4 75.7M590.0 52.0Q594.6 38.5 598.2 32.3Q601.9 26.0 603.4 19.0Q605.0 12.0 601.3 9.5Q597.5 7.1 594.8 3.5L592.0 0.0M605.0 12.0Q623.1 13.2 631.6 16.6Q640.0 20.0 647.3 23.6Q654.6 27.2 660.6 32.6Q666.6 37.9 672.8 43.1Q679.0 48.2 685.2 53.3L691.4 58.4M575.7 24.3Q591.4 20.8 598.2 16.4L605.0 12.0M625.0 62.0Q632.8 49.0 633.9 41.5Q635.0 34.0 637.5 27.0L640.0 20.0M625.3 117.8Q631.6 132.1 634.6 139.3Q637.7 146.5 641.5 153.3Q645.4 160.2 648.3 167.4Q651.2 174.7 653.1 182.3L655.0 190.0M655.0 190.0Q667.1 200.2 673.0 205.5Q678.9 210.7 684.4 216.4L690.0 222.0M672.0 258.0Q689.5 261.1 698.5 260.3Q707.5 259.4 716.3 261.2L725.0 263.0M668.0 228.0Q682.5 236.4 689.7 240.7Q696.8 244.9 703.1 250.7Q709.4 256.5 717.2 259.8Q725.0 263.0 727.9 268.9Q730.9 274.8 733.3 280.9Q735.7 287.0 736.9 293.5L738.0 300.0M672.0 258.0Q662.7 273.1 655.6 278.7Q648.5 284.3 644.2 292.2L640.0 300.0M545.0 212.0Q551.2 227.4 551.0 236.0Q550.7 244.6 553.3 252.4Q555.8 260.3 558.2 268.2Q560.6 276.1 562.8 284.1L565.0 292.0M688.6 96.4Q683.4 86.5 681.9 81.1Q680.4 75.7 683.2 71.4Q686.0 67.1 688.7 62.8Q691.4 58.4 696.7 58.6Q701.9 58.8 706.7 56.5Q711.5 54.3 717.8 49.8Q724.1 45.3 730.0 40.3Q736.0 35.3 741.4 29.7Q746.9 24.2 753.7 20.3Q760.5 16.4 768.2 15.9Q775.9 15.3 783.0 12.3Q790.2 9.2 798.0 9.3Q805.8 9.4 812.9 6.1Q820.0 2.9 827.5 1.5L835.0 0.0M691.4 58.4Q696.7 45.4 701.0 39.8Q705.3 34.2 708.6 28.1Q712.0 22.0 717.7 16.5Q723.4 10.9 729.2 5.5L735.0 0.0M711.5 54.3Q713.2 38.2 712.6 30.1L712.0 22.0M711.5 54.3Q726.7 57.0 734.4 57.7Q742.1 58.5 749.5 61.4Q756.8 64.2 764.8 63.6Q772.7 63.1 780.1 65.4Q787.6 67.7 795.3 68.3Q803.0 69.0 805.8 61.7Q808.7 54.4 811.8 47.2Q815.0 40.0 819.5 33.9Q824.0 27.8 825.7 20.3Q827.4 12.9 831.2 6.4L835.0 0.0M803.0 69.0Q817.9 75.2 826.1 75.9Q834.3 76.5 841.9 79.0Q849.6 81.5 857.2 84.1Q864.8 86.8 872.4 89.4Q880.0 92.0 887.6 88.9Q895.2 85.9 901.9 81.3Q908.6 76.8 915.5 72.6Q922.4 68.4 928.7 63.2L935.0 58.0M815.0 40.0Q829.2 34.7 836.0 31.2Q842.7 27.7 850.2 26.2Q857.8 24.7 864.8 21.8Q871.8 18.9 878.9 16.3Q886.0 13.8 893.0 10.9L900.0 8.0M688.6 96.4Q704.0 101.2 712.2 102.0Q720.3 102.8 727.7 106.4Q735.0 110.0 739.7 115.2Q744.5 120.4 747.6 126.7Q750.8 133.1 754.7 138.9Q758.7 144.6 763.1 150.0L767.6 155.4M711.5 54.3Q718.3 67.8 721.2 74.8Q724.1 81.8 727.2 88.7Q730.4 95.5 732.7 102.8L735.0 110.0M688.6 96.4Q693.1 111.8 697.3 118.6Q701.6 125.5 704.8 132.7Q708.0 140.0 715.7 140.9Q723.4 141.9 730.3 145.9Q737.2 150.0 744.7 151.8Q752.2 153.7 759.9 154.5L767.6 155.4M708.0 140.0Q704.9 156.5 702.6 164.6Q700.3 172.7 699.5 181.1Q698.8 189.5 697.4 197.8Q696.1 206.2 693.1 214.1L690.0 222.0M767.6 155.4Q766.2 170.7 764.3 178.1Q762.5 185.5 759.7 192.6Q757.0 199.8 756.1 208.1Q755.1 216.4 754.6 224.7Q754.0 233.0 751.4 241.2Q748.7 249.4 748.5 258.2Q748.3 267.1 744.6 275.0Q740.9 283.0 739.5 291.5L738.0 300.0M754.0 233.0Q765.9 238.1 771.3 241.9Q776.7 245.7 783.0 247.6Q789.3 249.5 796.2 252.6Q803.2 255.8 810.2 258.6Q817.3 261.4 823.7 265.7Q830.0 270.0 836.5 270.2Q843.0 270.5 849.1 272.7Q855.3 275.0 861.6 276.0Q868.0 277.0 876.1 280.6Q884.2 284.1 891.9 288.6L899.5 293.0M757.0 199.8Q769.0 207.3 774.7 211.4Q780.3 215.6 785.2 220.8Q790.0 226.0 788.4 231.8Q786.8 237.7 788.0 243.6L789.3 249.5M790.0 226.0Q807.4 221.8 816.0 219.3Q824.7 216.9 833.5 215.2Q842.3 213.4 851.1 211.7Q859.9 209.9 868.2 206.3L876.5 202.6M767.6 155.4Q779.6 163.6 786.9 164.6Q794.3 165.6 800.4 169.4Q806.5 173.2 813.3 175.6Q820.0 178.0 827.1 180.9Q834.2 183.9 841.2 187.1Q848.3 190.3 855.1 193.8Q862.0 197.3 869.3 199.9Q876.5 202.6 879.5 209.1Q882.5 215.6 886.0 222.0Q889.4 228.3 891.3 235.3Q893.1 242.4 896.5 248.7Q900.0 255.0 901.2 261.3Q902.3 267.7 900.3 274.0Q898.3 280.3 898.9 286.7L899.5 293.0M876.5 202.6Q889.8 210.8 897.1 213.8Q904.4 216.9 910.7 221.6Q916.9 226.4 923.5 230.7L930.0 235.0M767.6 155.4Q779.7 147.3 784.7 141.9Q789.7 136.6 796.2 133.0Q802.6 129.4 807.3 123.7Q812.0 118.0 811.6 109.6Q811.1 101.3 809.4 93.1Q807.7 85.0 805.4 77.0L803.0 69.0M812.0 118.0Q813.4 133.1 813.8 140.7Q814.2 148.2 817.2 155.5Q820.1 162.7 820.0 170.4L820.0 178.0M820.0 178.0Q819.8 193.5 822.5 201.0Q825.2 208.5 826.2 216.1Q827.1 223.8 828.0 231.4Q828.8 239.1 830.0 246.7Q831.1 254.4 830.6 262.2L830.0 270.0M876.5 202.6Q874.8 190.1 875.0 183.8Q875.1 177.5 875.1 171.3Q875.0 165.0 882.6 164.3Q890.2 163.6 897.6 161.8Q905.0 160.0 907.2 151.4Q909.3 142.8 910.8 134.0Q912.3 125.2 914.9 116.7Q917.6 108.3 922.6 100.5Q927.6 92.8 927.8 83.6Q928.0 74.4 931.5 66.2L935.0 58.0M875.0 165.0Q878.1 150.5 876.5 143.1Q874.9 135.7 877.6 128.5Q880.3 121.4 879.1 113.9Q878.0 106.5 879.0 99.3L880.0 92.0M725.0 263.0Q736.1 254.4 739.5 248.0Q742.9 241.6 748.5 237.3L754.0 233.0M760.5 16.4Q748.8 6.6 741.9 3.3L735.0 0.0M803.0 69.0Q811.8 81.9 816.0 88.5Q820.2 95.1 823.1 102.5Q825.9 109.9 829.8 116.6Q833.7 123.3 837.6 130.1Q841.5 136.9 845.8 143.4Q850.0 150.0 853.5 156.5Q857.0 163.0 860.0 169.7Q863.0 176.4 865.8 183.3Q868.6 190.1 872.5 196.4L876.5 202.6M652.0 104.0Q663.0 96.1 666.9 90.6Q670.8 85.0 675.6 80.4L680.4 75.7M652.0 62.0Q665.0 59.5 671.6 59.0Q678.2 58.6 684.8 58.5L691.4 58.4M366 46a9 9 0 1 0 .1 0ZM479 237a6.500 6.500 0 1 0 .1 0Z"/>
</g>
<g fill="none" stroke="#8ab4f8" stroke-linecap="round" stroke-linejoin="round"><path stroke-width="3.500" d="M540 42 552 45 565 47"/><path stroke-width="4" d="M531 60 548 61.500 560 63.500 568 64"/><path stroke-width="2.500" d="M545 62 552 69"/><path stroke-width="2" d="M386 59 378 58 372 57"/></g>
<path fill="none" stroke="#626e76" stroke-width="1.100" stroke-linejoin="round" d="M487.0 85.5 490.1 90.9 491.0 98.7 493.7 102.4 496.6 108.9 501.0 111.8 508.0 108.5 514.3 107.0 517.6 111.5 521.0 116.1 522.5 121.7 528.5 125.5 534.0 130.0 536.5 134.5 542.0 138.0 547.2 138.8 552.0 137.0 558.7 131.6 560.4 138.2 562.0 144.7 561.8 150.6 560.4 157.9 566.1 159.0 571.6 163.6 575.2 166.0 581.5 164.5 590.0 164.5 589.6 159.0 591.6 153.0 598.2 154.6 599.8 161.1 600.7 166.9 601.5 171.0 606.2 174.0 611.0 176.6 612.9 181.1 618.0 184.2 621.7 186.2 628.5 190.3 632.7 194.0M525.8 65.8 532.3 68.3 537.6 70.8 542.3 74.0 549.2 73.7 554.4 72.1 562.0 70.7 566.8 67.8 567.6 62.7 571.9 59.2 577.2 59.4 581.9 58.7 588.3 57.6 592.1 61.2 594.9 65.8 599.9 63.7 608.0 62.5 613.2 63.0 616.8 66.7 622.5 67.8 627.8 70.7 631.3 75.1 637.7 79.0 633.9 83.6 632.7 90.5 638.2 94.4 641.0 96.2 647.5 98.7M691.4 0.0 689.5 4.4 684.9 8.2 680.5 10.8 677.9 16.9 672.9 21.6 668.1 23.5 665.0 28.0 659.4 30.0 653.0 30.5 650.1 30.7 643.7 31.0 644.9 35.7 645.9 40.9 648.7 46.0 651.3 51.7 652.4 54.9 653.9 62.3 655.0 65.8 653.3 73.3 648.7 79.0 645.3 83.1 641.0 86.5 638.8 92.0 643.2 94.0 647.5 98.7 651.1 103.6 654.0 108.6 656.7 113.9 657.7 120.6 658.2 126.9 660.7 131.6 654.0 131.6M632.7 194.0 634.3 189.0 635.3 180.7 635.1 175.6 636.5 170.1 637.7 164.5 639.8 158.8 641.0 154.6 643.5 150.1 646.8 145.0 650.1 140.7 650.6 135.7 654.0 131.6 655.8 137.3 660.7 144.7 661.6 148.3 663.6 154.9 665.9 160.7 665.6 164.5 665.5 170.2 661.6 174.9 663.1 178.6 660.7 184.2 661.0 191.4 660.7 197.4M632.7 194.0 641.0 197.4 647.8 197.9 654.8 196.6 660.7 197.4 664.5 202.9 666.6 205.6 669.4 208.7 673.8 213.8 680.8 216.9 686.1 215.6 690.3 218.8 697.3 219.3 702.8 221.7 706.7 223.7 712.0 226.1 717.5 226.7 722.7 226.6 725.3 229.4 731.1 229.6 734.9 233.7 742.5 234.0 746.2 235.2 744.4 238.6 740.6 244.0 736.3 250.0 732.8 254.8 729.4 260.2 726.5 263.2 725.0 267.8 726.4 274.3 723.4 281.3 723.2 286.2 720.8 292.6 718.3 300.0M935.0 120.0 931.1 126.3 931.5 129.1 928.0 135.0 930.9 138.7 931.1 144.9 932.0 150.0 930.0 156.3 926.0 160.0 928.0 163.8 932.6 166.9 935.0 172.0"/>
<g fill="none" stroke-linecap="round" stroke-linejoin="round"><path stroke="#2f78c8" stroke-opacity=".62" stroke-width="6" d="M366.0 55.0 371.7 56.6 382.3 60.5 391.5 61.8 395.4 68.4 404.6 75.0 416.5 84.2 431.0 82.9M452.0 96.0 456.0 95.4 449.4 101.3 446.0 111.8 446.0 120.0 450.0 131.6 451.8 150.0 453.4 153.3 460.0 158.2 471.5 162.3 474.8 169.7 474.0 183.0 469.9 199.3 466.6 212.5 469.9 229.0 476.5 240.5 479.0 243.8M479.0 243.8 484.7 238.8 489.6 227.3 493.0 212.5 496.2 196.0 501.0 171.4 504.4 160.0 519.2 150.0 525.8 141.4 535.7 138.0 539.0 130.8 558.7 128.3 568.6 123.4 566.0 113.5 570.0 103.5"/><path stroke="#68a9ee" stroke-opacity=".85" stroke-width="3.200" d="M366.0 55.0 371.7 56.6 382.3 60.5 391.5 61.8 395.4 68.4 404.6 75.0 416.5 84.2 431.0 82.9M452.0 96.0 456.0 95.4 449.4 101.3 446.0 111.8 446.0 120.0 450.0 131.6 451.8 150.0 453.4 153.3 460.0 158.2 471.5 162.3 474.8 169.7 474.0 183.0 469.9 199.3 466.6 212.5 469.9 229.0 476.5 240.5 479.0 243.8M479.0 243.8 484.7 238.8 489.6 227.3 493.0 212.5 496.2 196.0 501.0 171.4 504.4 160.0 519.2 150.0 525.8 141.4 535.7 138.0 539.0 130.8 558.7 128.3 568.6 123.4 566.0 113.5 570.0 103.5"/><path stroke="#4a95ee" stroke-width="5" d="M431.0 82.9 452.0 96.0"/></g>
<circle cx="47.7" cy="0.8" r="2.4" fill="#fff" stroke="#333" stroke-width="1"/><circle cx="254" cy="58.5" r="2.4" fill="#fff" stroke="#333" stroke-width="1"/><circle cx="227.8" cy="57" r="2.4" fill="#fff" stroke="#333" stroke-width="1"/><circle cx="211" cy="112" r="2.4" fill="#fff" stroke="#333" stroke-width="1"/><circle cx="287" cy="112" r="2.4" fill="#fff" stroke="#333" stroke-width="1"/><circle cx="183" cy="136.8" r="2.4" fill="#fff" stroke="#333" stroke-width="1"/><circle cx="315.3" cy="37" r="2.4" fill="#fff" stroke="#333" stroke-width="1"/><circle cx="377.8" cy="3.6" r="2.4" fill="#fff" stroke="#333" stroke-width="1"/><circle cx="575.7" cy="24.3" r="2.8" fill="#fff" stroke="#333" stroke-width="1"/><circle cx="511" cy="118.8" r="2.4" fill="#fff" stroke="#333" stroke-width="1"/><circle cx="760.5" cy="16.4" r="2.8" fill="#fff" stroke="#333" stroke-width="1"/><circle cx="711.5" cy="54.3" r="2.8" fill="#fff" stroke="#333" stroke-width="1"/><circle cx="691.4" cy="58.4" r="2.8" fill="#fff" stroke="#333" stroke-width="1"/><circle cx="680.4" cy="75.7" r="2.8" fill="#fff" stroke="#333" stroke-width="1"/><circle cx="688.6" cy="96.4" r="2.8" fill="#fff" stroke="#333" stroke-width="1"/><circle cx="625.3" cy="117.8" r="2.4" fill="#fff" stroke="#333" stroke-width="1"/><circle cx="803" cy="69" r="2.4" fill="#fff" stroke="#333" stroke-width="1"/><circle cx="767.6" cy="155.4" r="2.8" fill="#fff" stroke="#333" stroke-width="1"/><circle cx="756.9" cy="199.8" r="2.4" fill="#fff" stroke="#333" stroke-width="1"/><circle cx="754" cy="233" r="2.4" fill="#fff" stroke="#333" stroke-width="1"/><circle cx="789.3" cy="249.5" r="2.8" fill="#fff" stroke="#333" stroke-width="1"/><circle cx="725" cy="263" r="2.4" fill="#fff" stroke="#333" stroke-width="1"/><circle cx="876.5" cy="202.6" r="2.8" fill="#fff" stroke="#333" stroke-width="1"/><circle cx="868" cy="277" r="2.4" fill="#fff" stroke="#333" stroke-width="1"/><circle cx="899.5" cy="293" r="2.4" fill="#fff" stroke="#333" stroke-width="1"/><circle cx="421.9" cy="203" r="2.4" fill="#fff" stroke="#333" stroke-width="1"/><circle cx="355" cy="221" r="2.4" fill="#fff" stroke="#333" stroke-width="1"/><circle cx="469" cy="246.7" r="2.4" fill="#fff" stroke="#333" stroke-width="1"/><circle cx="381" cy="300" r="2.4" fill="#fff" stroke="#333" stroke-width="1"/><circle cx="280" cy="258" r="2.4" fill="#fff" stroke="#333" stroke-width="1"/><circle cx="168" cy="276" r="2.4" fill="#fff" stroke="#333" stroke-width="1"/><circle cx="185.9" cy="300" r="2.4" fill="#fff" stroke="#333" stroke-width="1"/><circle cx="296" cy="294" r="2.4" fill="#fff" stroke="#333" stroke-width="1"/><circle cx="925.5" cy="232.5" r="2.4" fill="#fff" stroke="#333" stroke-width="1"/><circle cx="900" cy="7" r="2.4" fill="#fff" stroke="#333" stroke-width="1"/><circle cx="934" cy="68" r="2.4" fill="#fff" stroke="#333" stroke-width="1"/>
<g fill="#fff" stroke="#fff" stroke-width="2.800" stroke-linejoin="round"><text x="238.8" y="52.6" font-size="11" textLength="30.6" lengthAdjust="spacingAndGlyphs">Bristol</text><text x="211.3" y="69.6" font-size="11" textLength="33.3" lengthAdjust="spacingAndGlyphs">Cardiff</text><text x="196.5" y="105.8" font-size="11" textLength="29.5" lengthAdjust="spacingAndGlyphs">Exeter</text><text x="254.6" y="106.8" font-size="11" textLength="64.8" lengthAdjust="spacingAndGlyphs">Bournemouth</text><text x="160.4" y="130.8" font-size="11" textLength="45.6" lengthAdjust="spacingAndGlyphs">Plymouth</text><text x="298.5" y="32.1" font-size="11" textLength="31.9" lengthAdjust="spacingAndGlyphs">Oxford</text><text x="343.6" y="48.1" font-size="14" textLength="46.0" lengthAdjust="spacingAndGlyphs">London</text><text x="543.6" y="41.0" font-size="14" textLength="65.3" lengthAdjust="spacingAndGlyphs">Rotterdam</text><text x="585.9" y="24.7" font-size="17" textLength="97.3" lengthAdjust="spacingAndGlyphs" font-weight="700">Netherlands</text><text x="581.7" y="81.3" font-size="14" textLength="51.3" lengthAdjust="spacingAndGlyphs">Antwerp</text><text x="543.9" y="95.8" font-size="14" textLength="53.0" lengthAdjust="spacingAndGlyphs">Brussels</text><text x="516" y="122.5" font-size="11" textLength="19.4" lengthAdjust="spacingAndGlyphs">Lille</text><text x="552.5" y="134.0" font-size="17" textLength="63.8" lengthAdjust="spacingAndGlyphs" font-weight="700">Belgium</text><text x="733.9" y="9.9" font-size="14" textLength="53.7" lengthAdjust="spacingAndGlyphs">Bielefeld</text><text x="680.7" y="48.1" font-size="14" textLength="61.3" lengthAdjust="spacingAndGlyphs">Dortmund</text><text x="649.8" y="64.0" font-size="14" textLength="36.7" lengthAdjust="spacingAndGlyphs">Essen</text><text x="685.7" y="81.0" font-size="14" textLength="68.3" lengthAdjust="spacingAndGlyphs">Düsseldorf</text><text x="663.5" y="113.1" font-size="14" textLength="51.3" lengthAdjust="spacingAndGlyphs">Cologne</text><text x="629.8" y="121.8" font-size="11" textLength="25.2" lengthAdjust="spacingAndGlyphs">Liège</text><text x="787.7" y="63.8" font-size="11" textLength="32.0" lengthAdjust="spacingAndGlyphs">Kassel</text><text x="808.2" y="90.9" font-size="17" textLength="72.1" lengthAdjust="spacingAndGlyphs" font-weight="700">Germany</text><text x="738.6" y="148.5" font-size="14" textLength="56.4" lengthAdjust="spacingAndGlyphs">Frankfurt</text><text x="874" y="5.4" font-size="11" textLength="54.0" lengthAdjust="spacingAndGlyphs">Magdeburg</text><text x="913.5" y="61.2" font-size="14" textLength="44.5" lengthAdjust="spacingAndGlyphs">Leipzig</text><text x="223.4" y="207.1" font-size="14" textLength="63.6" lengthAdjust="spacingAndGlyphs" font-weight="700">Guernsey</text><text x="252.5" y="222.8" font-size="14" textLength="44.4" lengthAdjust="spacingAndGlyphs" font-weight="700">Jersey</text><text x="254" y="251.8" font-size="11" textLength="52.0" lengthAdjust="spacingAndGlyphs">Saint-Malo</text><text x="155.4" y="269.8" font-size="11" textLength="25.2" lengthAdjust="spacingAndGlyphs">Brest</text><text x="165.3" y="296.8" font-size="11" textLength="41.1" lengthAdjust="spacingAndGlyphs">Quimper</text><text x="278.5" y="288.8" font-size="11" textLength="34.0" lengthAdjust="spacingAndGlyphs">Rennes</text><text x="407.4" y="196.8" font-size="11" textLength="30.4" lengthAdjust="spacingAndGlyphs">Rouen</text><text x="343.25" y="214.7" font-size="11" textLength="24.8" lengthAdjust="spacingAndGlyphs">Caen</text><text x="463.3" y="235.9" font-size="14" textLength="31.6" lengthAdjust="spacingAndGlyphs">Paris</text><text x="445.2" y="260.8" font-size="11" textLength="47.8" lengthAdjust="spacingAndGlyphs">Versailles</text><text x="360.5" y="296.1" font-size="11" textLength="41.1" lengthAdjust="spacingAndGlyphs">Le Mans</text><text x="599" y="185.4" font-size="17" textLength="100.7" lengthAdjust="spacingAndGlyphs" font-weight="700">Luxembourg</text><text x="731.7" y="194.1" font-size="11" textLength="51.0" lengthAdjust="spacingAndGlyphs">Mannheim</text><text x="731.7" y="227.8" font-size="11" textLength="46.1" lengthAdjust="spacingAndGlyphs">Karlsruhe</text><text x="762.5" y="243.0" font-size="14" textLength="54.8" lengthAdjust="spacingAndGlyphs">Stuttgart</text><text x="667" y="267.3" font-size="11" textLength="53.7" lengthAdjust="spacingAndGlyphs">Strasbourg</text><text x="841.4" y="195.5" font-size="14" textLength="70.4" lengthAdjust="spacingAndGlyphs">Nuremberg</text><text x="844.4" y="271.8" font-size="11" textLength="47.6" lengthAdjust="spacingAndGlyphs">Augsburg</text><text x="876.5" y="286.1" font-size="14" textLength="45.5" lengthAdjust="spacingAndGlyphs">Munich</text><text x="885.5" y="228.5" font-size="14" textLength="74.5" lengthAdjust="spacingAndGlyphs">Regensburg</text><text x="255.800" y="15.700" font-size="13.500" textLength="70.500" lengthAdjust="spacingAndGlyphs" letter-spacing="1.500">ENGLAND</text><text x="151.500" y="22.600" font-size="13.500" textLength="46.500" lengthAdjust="spacingAndGlyphs" letter-spacing="1.500">WALES</text></g>
<g><text x="238.8" y="52.6" font-size="11" textLength="30.6" lengthAdjust="spacingAndGlyphs" fill="#3c3c3c">Bristol</text><text x="211.3" y="69.6" font-size="11" textLength="33.3" lengthAdjust="spacingAndGlyphs" fill="#3c3c3c">Cardiff</text><text x="196.5" y="105.8" font-size="11" textLength="29.5" lengthAdjust="spacingAndGlyphs" fill="#3c3c3c">Exeter</text><text x="254.6" y="106.8" font-size="11" textLength="64.8" lengthAdjust="spacingAndGlyphs" fill="#3c3c3c">Bournemouth</text><text x="160.4" y="130.8" font-size="11" textLength="45.6" lengthAdjust="spacingAndGlyphs" fill="#3c3c3c">Plymouth</text><text x="298.5" y="32.1" font-size="11" textLength="31.9" lengthAdjust="spacingAndGlyphs" fill="#3c3c3c">Oxford</text><text x="343.6" y="48.1" font-size="14" textLength="46.0" lengthAdjust="spacingAndGlyphs" fill="#222" stroke="#222" stroke-width=".45">London</text><text x="543.6" y="41.0" font-size="14" textLength="65.3" lengthAdjust="spacingAndGlyphs" fill="#222" stroke="#222" stroke-width=".45">Rotterdam</text><text x="585.9" y="24.7" font-size="17" textLength="97.3" lengthAdjust="spacingAndGlyphs" font-weight="700" fill="#111">Netherlands</text><text x="581.7" y="81.3" font-size="14" textLength="51.3" lengthAdjust="spacingAndGlyphs" fill="#222" stroke="#222" stroke-width=".45">Antwerp</text><text x="543.9" y="95.8" font-size="14" textLength="53.0" lengthAdjust="spacingAndGlyphs" fill="#222" stroke="#222" stroke-width=".45">Brussels</text><text x="516" y="122.5" font-size="11" textLength="19.4" lengthAdjust="spacingAndGlyphs" fill="#3c3c3c">Lille</text><text x="552.5" y="134.0" font-size="17" textLength="63.8" lengthAdjust="spacingAndGlyphs" font-weight="700" fill="#111">Belgium</text><text x="733.9" y="9.9" font-size="14" textLength="53.7" lengthAdjust="spacingAndGlyphs" fill="#222" stroke="#222" stroke-width=".45">Bielefeld</text><text x="680.7" y="48.1" font-size="14" textLength="61.3" lengthAdjust="spacingAndGlyphs" fill="#222" stroke="#222" stroke-width=".45">Dortmund</text><text x="649.8" y="64.0" font-size="14" textLength="36.7" lengthAdjust="spacingAndGlyphs" fill="#222" stroke="#222" stroke-width=".45">Essen</text><text x="685.7" y="81.0" font-size="14" textLength="68.3" lengthAdjust="spacingAndGlyphs" fill="#222" stroke="#222" stroke-width=".45">Düsseldorf</text><text x="663.5" y="113.1" font-size="14" textLength="51.3" lengthAdjust="spacingAndGlyphs" fill="#222" stroke="#222" stroke-width=".45">Cologne</text><text x="629.8" y="121.8" font-size="11" textLength="25.2" lengthAdjust="spacingAndGlyphs" fill="#3c3c3c">Liège</text><text x="787.7" y="63.8" font-size="11" textLength="32.0" lengthAdjust="spacingAndGlyphs" fill="#3c3c3c">Kassel</text><text x="808.2" y="90.9" font-size="17" textLength="72.1" lengthAdjust="spacingAndGlyphs" font-weight="700" fill="#111">Germany</text><text x="738.6" y="148.5" font-size="14" textLength="56.4" lengthAdjust="spacingAndGlyphs" fill="#222" stroke="#222" stroke-width=".45">Frankfurt</text><text x="874" y="5.4" font-size="11" textLength="54.0" lengthAdjust="spacingAndGlyphs" fill="#3c3c3c">Magdeburg</text><text x="913.5" y="61.2" font-size="14" textLength="44.5" lengthAdjust="spacingAndGlyphs" fill="#222" stroke="#222" stroke-width=".45">Leipzig</text><text x="223.4" y="207.1" font-size="14" textLength="63.6" lengthAdjust="spacingAndGlyphs" font-weight="700" fill="#111">Guernsey</text><text x="252.5" y="222.8" font-size="14" textLength="44.4" lengthAdjust="spacingAndGlyphs" font-weight="700" fill="#111">Jersey</text><text x="254" y="251.8" font-size="11" textLength="52.0" lengthAdjust="spacingAndGlyphs" fill="#3c3c3c">Saint-Malo</text><text x="155.4" y="269.8" font-size="11" textLength="25.2" lengthAdjust="spacingAndGlyphs" fill="#3c3c3c">Brest</text><text x="165.3" y="296.8" font-size="11" textLength="41.1" lengthAdjust="spacingAndGlyphs" fill="#3c3c3c">Quimper</text><text x="278.5" y="288.8" font-size="11" textLength="34.0" lengthAdjust="spacingAndGlyphs" fill="#3c3c3c">Rennes</text><text x="407.4" y="196.8" font-size="11" textLength="30.4" lengthAdjust="spacingAndGlyphs" fill="#3c3c3c">Rouen</text><text x="343.25" y="214.7" font-size="11" textLength="24.8" lengthAdjust="spacingAndGlyphs" fill="#3c3c3c">Caen</text><text x="463.3" y="235.9" font-size="14" textLength="31.6" lengthAdjust="spacingAndGlyphs" fill="#222" stroke="#222" stroke-width=".45">Paris</text><text x="445.2" y="260.8" font-size="11" textLength="47.8" lengthAdjust="spacingAndGlyphs" fill="#3c3c3c">Versailles</text><text x="360.5" y="296.1" font-size="11" textLength="41.1" lengthAdjust="spacingAndGlyphs" fill="#3c3c3c">Le Mans</text><text x="599" y="185.4" font-size="17" textLength="100.7" lengthAdjust="spacingAndGlyphs" font-weight="700" fill="#111">Luxembourg</text><text x="731.7" y="194.1" font-size="11" textLength="51.0" lengthAdjust="spacingAndGlyphs" fill="#3c3c3c">Mannheim</text><text x="731.7" y="227.8" font-size="11" textLength="46.1" lengthAdjust="spacingAndGlyphs" fill="#3c3c3c">Karlsruhe</text><text x="762.5" y="243.0" font-size="14" textLength="54.8" lengthAdjust="spacingAndGlyphs" fill="#222" stroke="#222" stroke-width=".45">Stuttgart</text><text x="667" y="267.3" font-size="11" textLength="53.7" lengthAdjust="spacingAndGlyphs" fill="#3c3c3c">Strasbourg</text><text x="841.4" y="195.5" font-size="14" textLength="70.4" lengthAdjust="spacingAndGlyphs" fill="#222" stroke="#222" stroke-width=".45">Nuremberg</text><text x="844.4" y="271.8" font-size="11" textLength="47.6" lengthAdjust="spacingAndGlyphs" fill="#3c3c3c">Augsburg</text><text x="876.5" y="286.1" font-size="14" textLength="45.5" lengthAdjust="spacingAndGlyphs" fill="#222" stroke="#222" stroke-width=".45">Munich</text><text x="885.5" y="228.5" font-size="14" textLength="74.5" lengthAdjust="spacingAndGlyphs" fill="#222" stroke="#222" stroke-width=".45">Regensburg</text></g>
<g fill="#5f6368" stroke="#5f6368" stroke-width=".5"><text x="255.800" y="15.700" font-size="13.500" textLength="70.500" lengthAdjust="spacingAndGlyphs" letter-spacing="1.500">ENGLAND</text><text x="151.500" y="22.600" font-size="13.500" textLength="46.500" lengthAdjust="spacingAndGlyphs" letter-spacing="1.500">WALES</text></g>
<text transform="translate(261,167) rotate(-12)" font-size="10.500" font-style="italic" fill="#2f6fd6" textLength="77" lengthAdjust="spacingAndGlyphs">English Channel</text>
<text x="2.500" y="232.800" font-size="10.500" fill="#2f6fd6">Sea</text>
<g transform="translate(366 55)"><circle r="3.600" fill="#2b7de0" stroke="#1a3f7a" stroke-width="1.300"/><path d="M0 0C-1.300-7.500-12.800-13.500-12.800-24.300a12.800 12.800 0 0 1 25.600 0C12.800-13.500 1.300-7.500 0 0Z" fill="#ea4335" stroke="#d93025" stroke-width=".6"/><text x="0" y="-18.200" text-anchor="middle" font-size="16" fill="#fff">C</text></g>
<g transform="translate(570 103.5)"><circle r="3.600" fill="#2b7de0" stroke="#1a3f7a" stroke-width="1.300"/><path d="M0 0C-1.300-7.500-12.800-13.500-12.800-24.300a12.800 12.800 0 0 1 25.600 0C12.800-13.500 1.300-7.500 0 0Z" fill="#ea4335" stroke="#d93025" stroke-width=".6"/><text x="0" y="-18.200" text-anchor="middle" font-size="16" fill="#fff">A</text></g>
<g transform="translate(479 243.75)"><circle r="3.600" fill="#2b7de0" stroke="#1a3f7a" stroke-width="1.300"/><path d="M0 0C-1.300-7.500-12.800-13.500-12.800-24.300a12.800 12.800 0 0 1 25.600 0C12.800-13.500 1.300-7.500 0 0Z" fill="#ea4335" stroke="#d93025" stroke-width=".6"/><text x="0" y="-18.200" text-anchor="middle" font-size="16" fill="#fff">B</text></g>
<g filter="drop-shadow(0 1px 2px rgba(0,0,0,.3))" style="filter:drop-shadow(0 1px 2px rgba(0,0,0,.3))" fill="#fff"><rect x="10" y="10" width="168" height="40" rx="2"/><rect x="885" y="10" width="40" height="40" rx="2"/><rect x="885" y="123" width="40" height="40" rx="2"/><rect x="885" y="195" width="40" height="81" rx="2"/></g>
<rect x="79" y="10" width="1" height="40" fill="#e6e6e6"/>
<text x="27.700" y="36.400" font-size="18" font-weight="700" fill="#000" textLength="34.700" lengthAdjust="spacingAndGlyphs">Map</text>
<text x="96.700" y="36.400" font-size="18" fill="#565656" textLength="64.300" lengthAdjust="spacingAndGlyphs">Satellite</text>
<path fill="none" stroke="#666" stroke-width="2.600" d="M897.500 28v-5.500h5.500M907 22.500h5.500v5.500M912.500 32v5.500h-5.500M903 37.500h-5.500v-5.500"/>
<path fill="none" stroke="#666" stroke-width="3.600" d="M896.200 215h17.600M905 206.200v17.600M896.200 255.500h17.600"/>
<rect x="890" y="235" width="30" height="1" fill="#e6e6e6"/>
<g fill="#fbbc04" stroke="#e09b00" stroke-width=".5"><path d="M898.600 139.600h12.400q1.800 0 2.100 1.800l1.100 8.200q.2 1.400-1.200 1.400t-1.500-1.200l-.9-5v12.600h-4.500v-7h-.6v7h-4.500v-12.600l-.9 5q-.2 1.300-1.500 1.200t-1.200-1.400l1.100-8.200q.3-1.800 2.100-1.800z"/><circle cx="904.800" cy="133.300" r="5.300"/></g><path d="M900.200 139.800h9.200l-4.600 6.200z" fill="#d56e0c" opacity=".8"/>
<rect x="442.700" y="286" width="492.300" height="14" fill="#f5f5f5" fill-opacity=".72"/>
<rect x="539.500" y="287" width="1" height="12" fill="#ccc"/><rect x="895" y="287" width="1" height="12" fill="#ccc"/>
<text x="448.500" y="298.100" font-size="10" fill="#000" textLength="85.500" lengthAdjust="spacingAndGlyphs" stroke="#000" stroke-width=".2">Keyboard shortcuts</text>
<text x="546.400" y="298.100" font-size="10" fill="#000" textLength="342.400" lengthAdjust="spacingAndGlyphs">Map data ©2024 GeoBasis-DE/BKG (©2009), Google, Inst. Geogr. Nacional</text>
<text x="902" y="298.100" font-size="10" fill="#000" textLength="27" lengthAdjust="spacingAndGlyphs">Terms</text>
<text x="10" y="291.600" font-size="18" textLength="56.500" lengthAdjust="spacingAndGlyphs" fill="#fff" stroke="#fff" stroke-width="2.600" stroke-linejoin="round">Google</text>
<text x="10" y="291.600" font-size="18" textLength="56.500" lengthAdjust="spacingAndGlyphs" stroke-width=".3"><tspan fill="#4285f4" stroke="#4285f4">G</tspan><tspan fill="#ea4335" stroke="#ea4335">o</tspan><tspan fill="#fbbc05" stroke="#fbbc05">o</tspan><tspan fill="#4285f4" stroke="#4285f4">g</tspan><tspan fill="#34a853" stroke="#34a853">l</tspan><tspan fill="#ea4335" stroke="#ea4335">e</tspan></text>
</svg></div>

<div class="abs" style="left:938px;top:498px;width:935px;height:77px;border:1px solid #c8c8c8;border-top:none;background:#f5f5f5"></div>
<span class="t os g" style="left:954px;top:530px;font-size:14px;letter-spacing:0.24px">Business Km</span>
<div class="inp" style="left:1110px;top:514px;width:82px;height:34px;background:#fff"></div>
<span class="t os g" style="left:1186px;top:532px;font-size:14px;transform:translate(-100%,-50%)">777</span>
<span class="t os g" style="left:1200.500px;top:528.700px;font-size:14px">Km</span>
<span class="t os g" style="left:1706px;top:513px;font-size:12.500px;transform:translate(-50%,-50%)">Total</span>
<div class="abs" style="left:1639px;top:521px;width:135px;height:38px;border-radius:19px;background:#fff"></div>
<span class="t os" style="left:1672px;top:541px;font-size:26px;color:#111">777</span>
<span class="t os" style="left:1719px;top:545px;font-size:14.500px;color:#111">Km</span>

<!-- commuting -->
<div class="abs" style="left:263px;top:590px;width:517px;height:200px;border:1px solid #a2a2a2;border-radius:3px;background:#fff;overflow:hidden"><div style="height:60px;background:#e8e8e8"></div></div>
<span class="t os" style="left:279px;top:607.500px;font-size:16px;font-weight:bold;color:#444;letter-spacing:-0.32px">Commuting</span>
<span class="t os" style="left:279px;top:626px;font-size:11px;color:#444;letter-spacing:0.09px">Please enable commuting mileage toggle if your trip starts at home.</span>
<div class="abs" style="left:671px;top:611px;width:36px;height:14px;border-radius:7px;background:#00c853"></div>
<div class="abs" style="left:686px;top:604px;width:28px;height:28px;border-radius:14px;background:#004658;box-shadow:0 0 0 1px rgba(255,255,255,.75),0 1px 3px 1px rgba(0,0,0,.25)"></div>
<svg style="left:691.500px;top:610.5px" width="17" height="14.800" viewBox="0 0 17 16" preserveAspectRatio="none"><path fill="#fff" fill-rule="evenodd" d="M0 0h9v4h8v12H0zM1.800 2v2h2V2zM5.300 2v2h2V2zM1.800 5.500v2h2v-2zM5.300 5.500v2h2v-2zM1.800 9v2h2V9zM5.300 9v2h2V9zM1.800 12.500v2h2v-2zM5.300 12.500v2h2v-2zM9 5.700v8.800h6.300V5.700zM11 7.500h2.500v1.700H11zM11 11h2.500v1.700H11z"/></svg>
<div class="inp" style="left:279px;top:666px;width:129px;height:34px;background:#fff"></div>
<span class="t os g" style="left:285.500px;top:684px;font-size:14px">300</span>
<span class="t os g" style="left:413.500px;top:681px;font-size:14px">Km</span>
<div class="abs" style="left:263px;top:809px;width:1610px;height:1px;background:#c9c9c9"></div>
<div class="abs" style="left:250px;top:579px;width:556px;height:238px;background:#ffff00;mix-blend-mode:multiply"></div>

<!-- info -->
<div class="abs" style="left:810px;top:590px;width:1063px;height:200px;border-radius:4px;background:#e6f5fb"></div>
<span class="t os" style="left:825.500px;top:618px;font-size:14px;font-style:italic;color:#444;letter-spacing:0.08px">Changes have been made to your mileage. Click on the ‘Calculate’-button on</span>
<span class="t os" style="left:825.500px;top:636px;font-size:14px;font-style:italic;color:#444;letter-spacing:0.08px">the right to recalculate your mileage.</span>
<div class="abs" style="left:1495px;top:610px;width:313px;height:86px;border-radius:3px;background:#004658"></div>
<svg style="left:1596px;top:633px" width="16" height="21" viewBox="0 0 16 21"><path fill="#fff" fill-rule="evenodd" d="M1.500 0h13c.8 0 1.500.7 1.500 1.500v18c0 .8-.7 1.500-1.500 1.500h-13C.7 21 0 20.300 0 19.500v-18C0 .7.700 0 1.500 0zM2.200 2.200v4.300h11.600V2.200zM2.300 9v2.200h2.500V9zM6.750 9v2.200h2.500V9zM11.200 9v2.200h2.500V9zM2.300 12.700v2.200h2.500v-2.200zM6.750 12.700v2.200h2.500v-2.200zM11.200 12.700v2.200h2.500v-2.200zM2.300 16.400v2.200h2.500v-2.200zM6.750 16.400v2.200h2.500v-2.200zM11.200 16.400v2.200h2.500v-2.200z"/></svg>
<span class="t os" style="left:1626px;top:646px;font-size:20px;color:#fff;letter-spacing:.15px">Calculate</span>
<span class="t os" style="left:1651.500px;top:670px;font-size:20px;color:#fff;transform:translate(-50%,-50%)">mileage</span>

<!-- footer -->
<span class="t os" style="left:1616px;top:863.600px;font-size:16px;text-decoration:underline;color:#0e4c5e;letter-spacing:0.12px">Cancel</span>
<span class="t os" style="left:1690px;top:863.600px;font-size:16px;text-decoration:underline;color:#0e4c5e;letter-spacing:0.03px">Clear</span>
<div class="abs" style="left:1747px;top:843px;width:85px;height:36px;border-radius:4px;background:#808080"></div>
<span class="t os" style="left:1761px;top:861.500px;font-size:16px;color:#fff">Save</span>
<svg style="left:1805px;top:856.500px" width="13" height="11" viewBox="0 0 14 12"><path d="M1.500 6.500 5 10 12.500 1.800" stroke="#fff" stroke-width="2.700" fill="none" stroke-linecap="round" stroke-linejoin="round"/></svg>
<div class="abs" style="left:1841px;top:843px;width:37px;height:36px;border-radius:4px;background:#808080"></div>
<svg style="left:1855px;top:859.500px" width="9" height="5" viewBox="0 0 9 5"><path d="M0 0h9L4.500 4.500z" fill="#fff"/></svg>
<span class="t os g" style="left:947.500px;top:899.500px;font-size:14px;color:#444;letter-spacing:.105px">© Mobilexpense 2024 - <span style="text-decoration:underline;color:#004658">Privacy Policy</span></span>
<div class="abs" style="left:1888px;top:884px;width:25px;height:25px;border-radius:2px;background:#004658"></div>
<svg style="left:1894px;top:892px" width="12" height="8" viewBox="0 0 12 8"><path d="M1.500 6.500 6 2l4.500 4.500" stroke="#fff" stroke-width="1.800" fill="none" stroke-linecap="round" stroke-linejoin="round"/></svg>
</body>
</html>
